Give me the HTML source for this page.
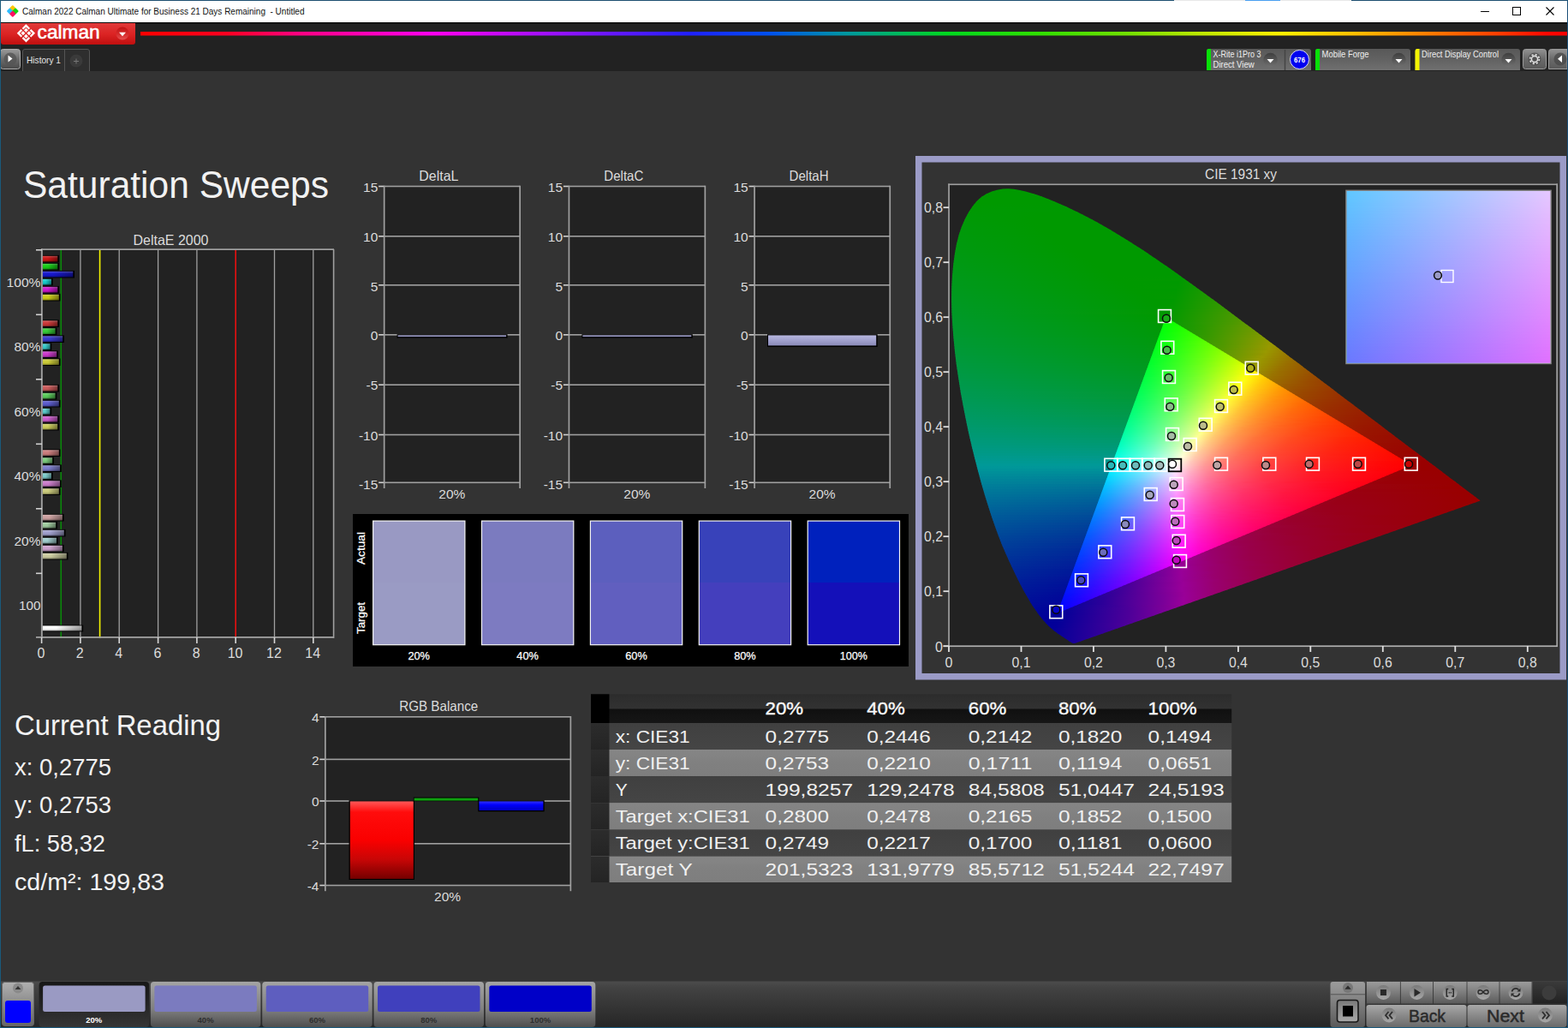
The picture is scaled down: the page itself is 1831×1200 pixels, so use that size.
<!DOCTYPE html>
<html><head><meta charset="utf-8"><title>Calman 2022 - Saturation Sweeps</title>
<style>
html,body{margin:0;padding:0;background:#333;overflow:hidden}
body{width:1831px;height:1200px}
svg{display:block;font-family:"Liberation Sans",sans-serif}
text{white-space:pre}
</style></head><body>
<svg width="1831" height="1200" viewBox="0 0 1831 1200">
<defs>
<linearGradient id="g1" x1="0" y1="0" x2="0" y2="1"><stop offset="0" stop-color="#e03a3a"/><stop offset="0.5" stop-color="#dc2424"/><stop offset="1" stop-color="#c00f0f"/></linearGradient>
<linearGradient id="rdd" x1="0" y1="0" x2="0" y2="1"><stop offset="0" stop-color="#c01414"/><stop offset="0.5" stop-color="#d42828"/><stop offset="1" stop-color="#e65050"/></linearGradient>
<linearGradient id="g2" x1="0" y1="0" x2="1" y2="0"><stop offset="0" stop-color="#ff0000"/><stop offset="0.06" stop-color="#ff0020"/><stop offset="0.11" stop-color="#ff0080"/><stop offset="0.205" stop-color="#ff00f0"/><stop offset="0.285" stop-color="#a010ff"/><stop offset="0.385" stop-color="#2020ff"/><stop offset="0.44" stop-color="#0050f0"/><stop offset="0.495" stop-color="#0098a0"/><stop offset="0.53" stop-color="#00b860"/><stop offset="0.565" stop-color="#00d820"/><stop offset="0.63" stop-color="#30e000"/><stop offset="0.69" stop-color="#70e000"/><stop offset="0.745" stop-color="#c0e800"/><stop offset="0.8" stop-color="#fff000"/><stop offset="0.85" stop-color="#ffc000"/><stop offset="0.9" stop-color="#ff8000"/><stop offset="0.95" stop-color="#ff4000"/><stop offset="0.985" stop-color="#ff0800"/><stop offset="1" stop-color="#ff0000"/></linearGradient>
<linearGradient id="g3" x1="0" y1="0" x2="0" y2="1"><stop offset="0" stop-color="#9a9a9a"/><stop offset="0.5" stop-color="#6c6c6c"/><stop offset="1" stop-color="#4a4a4a"/></linearGradient>
<linearGradient id="g4" x1="0" y1="0" x2="0" y2="1"><stop offset="0" stop-color="#585858"/><stop offset="0.5" stop-color="#626262"/><stop offset="1" stop-color="#707070"/></linearGradient>
<linearGradient id="g5" x1="0" y1="0" x2="0" y2="1"><stop offset="0" stop-color="#585858"/><stop offset="0.5" stop-color="#626262"/><stop offset="1" stop-color="#707070"/></linearGradient>
<linearGradient id="g6" x1="0" y1="0" x2="0" y2="1"><stop offset="0" stop-color="#585858"/><stop offset="0.5" stop-color="#626262"/><stop offset="1" stop-color="#707070"/></linearGradient>
<linearGradient id="ddg" x1="0" y1="0" x2="0" y2="1"><stop offset="0" stop-color="#3e3e3e"/><stop offset="1" stop-color="#707070"/></linearGradient>
<linearGradient id="g7" x1="0" y1="0" x2="0" y2="1"><stop offset="0" stop-color="#929292"/><stop offset="0.5" stop-color="#6a6a6a"/><stop offset="1" stop-color="#5a5a5a"/></linearGradient>
<linearGradient id="barshade" x1="0" y1="0" x2="0" y2="1"><stop offset="0" stop-color="#fff" stop-opacity="0.25"/><stop offset="0.3" stop-color="#fff" stop-opacity="0.05"/><stop offset="0.6" stop-color="#000" stop-opacity="0.0"/><stop offset="1" stop-color="#000" stop-opacity="0.3"/></linearGradient>
<linearGradient id="g8" x1="0" y1="0" x2="1" y2="0"><stop offset="0" stop-color="#cd1616"/><stop offset="0.35" stop-color="#cd1616"/><stop offset="1" stop-color="#7b0d0d"/></linearGradient>
<linearGradient id="g9" x1="0" y1="0" x2="1" y2="0"><stop offset="0" stop-color="#16cd16"/><stop offset="0.35" stop-color="#16cd16"/><stop offset="1" stop-color="#0d7b0d"/></linearGradient>
<linearGradient id="g10" x1="0" y1="0" x2="1" y2="0"><stop offset="0" stop-color="#1616cd"/><stop offset="0.35" stop-color="#1616cd"/><stop offset="1" stop-color="#0d0d7b"/></linearGradient>
<linearGradient id="g11" x1="0" y1="0" x2="1" y2="0"><stop offset="0" stop-color="#16cdcd"/><stop offset="0.35" stop-color="#16cdcd"/><stop offset="1" stop-color="#0d7b7b"/></linearGradient>
<linearGradient id="g12" x1="0" y1="0" x2="1" y2="0"><stop offset="0" stop-color="#cd16cd"/><stop offset="0.35" stop-color="#cd16cd"/><stop offset="1" stop-color="#7b0d7b"/></linearGradient>
<linearGradient id="g13" x1="0" y1="0" x2="1" y2="0"><stop offset="0" stop-color="#cdcd16"/><stop offset="0.35" stop-color="#cdcd16"/><stop offset="1" stop-color="#7b7b0d"/></linearGradient>
<linearGradient id="g14" x1="0" y1="0" x2="1" y2="0"><stop offset="0" stop-color="#cd3838"/><stop offset="0.35" stop-color="#cd3838"/><stop offset="1" stop-color="#7b2121"/></linearGradient>
<linearGradient id="g15" x1="0" y1="0" x2="1" y2="0"><stop offset="0" stop-color="#38cd38"/><stop offset="0.35" stop-color="#38cd38"/><stop offset="1" stop-color="#217b21"/></linearGradient>
<linearGradient id="g16" x1="0" y1="0" x2="1" y2="0"><stop offset="0" stop-color="#3838cd"/><stop offset="0.35" stop-color="#3838cd"/><stop offset="1" stop-color="#21217b"/></linearGradient>
<linearGradient id="g17" x1="0" y1="0" x2="1" y2="0"><stop offset="0" stop-color="#38cdcd"/><stop offset="0.35" stop-color="#38cdcd"/><stop offset="1" stop-color="#217b7b"/></linearGradient>
<linearGradient id="g18" x1="0" y1="0" x2="1" y2="0"><stop offset="0" stop-color="#cd38cd"/><stop offset="0.35" stop-color="#cd38cd"/><stop offset="1" stop-color="#7b217b"/></linearGradient>
<linearGradient id="g19" x1="0" y1="0" x2="1" y2="0"><stop offset="0" stop-color="#cdcd38"/><stop offset="0.35" stop-color="#cdcd38"/><stop offset="1" stop-color="#7b7b21"/></linearGradient>
<linearGradient id="g20" x1="0" y1="0" x2="1" y2="0"><stop offset="0" stop-color="#cd5b5b"/><stop offset="0.35" stop-color="#cd5b5b"/><stop offset="1" stop-color="#7b3636"/></linearGradient>
<linearGradient id="g21" x1="0" y1="0" x2="1" y2="0"><stop offset="0" stop-color="#5bcd5b"/><stop offset="0.35" stop-color="#5bcd5b"/><stop offset="1" stop-color="#367b36"/></linearGradient>
<linearGradient id="g22" x1="0" y1="0" x2="1" y2="0"><stop offset="0" stop-color="#5b5bcd"/><stop offset="0.35" stop-color="#5b5bcd"/><stop offset="1" stop-color="#36367b"/></linearGradient>
<linearGradient id="g23" x1="0" y1="0" x2="1" y2="0"><stop offset="0" stop-color="#5bcdcd"/><stop offset="0.35" stop-color="#5bcdcd"/><stop offset="1" stop-color="#367b7b"/></linearGradient>
<linearGradient id="g24" x1="0" y1="0" x2="1" y2="0"><stop offset="0" stop-color="#cd5bcd"/><stop offset="0.35" stop-color="#cd5bcd"/><stop offset="1" stop-color="#7b367b"/></linearGradient>
<linearGradient id="g25" x1="0" y1="0" x2="1" y2="0"><stop offset="0" stop-color="#cdcd5b"/><stop offset="0.35" stop-color="#cdcd5b"/><stop offset="1" stop-color="#7b7b36"/></linearGradient>
<linearGradient id="g26" x1="0" y1="0" x2="1" y2="0"><stop offset="0" stop-color="#cd7d7d"/><stop offset="0.35" stop-color="#cd7d7d"/><stop offset="1" stop-color="#7b4b4b"/></linearGradient>
<linearGradient id="g27" x1="0" y1="0" x2="1" y2="0"><stop offset="0" stop-color="#7dcd7d"/><stop offset="0.35" stop-color="#7dcd7d"/><stop offset="1" stop-color="#4b7b4b"/></linearGradient>
<linearGradient id="g28" x1="0" y1="0" x2="1" y2="0"><stop offset="0" stop-color="#7d7dcd"/><stop offset="0.35" stop-color="#7d7dcd"/><stop offset="1" stop-color="#4b4b7b"/></linearGradient>
<linearGradient id="g29" x1="0" y1="0" x2="1" y2="0"><stop offset="0" stop-color="#7dcdcd"/><stop offset="0.35" stop-color="#7dcdcd"/><stop offset="1" stop-color="#4b7b7b"/></linearGradient>
<linearGradient id="g30" x1="0" y1="0" x2="1" y2="0"><stop offset="0" stop-color="#cd7dcd"/><stop offset="0.35" stop-color="#cd7dcd"/><stop offset="1" stop-color="#7b4b7b"/></linearGradient>
<linearGradient id="g31" x1="0" y1="0" x2="1" y2="0"><stop offset="0" stop-color="#cdcd7d"/><stop offset="0.35" stop-color="#cdcd7d"/><stop offset="1" stop-color="#7b7b4b"/></linearGradient>
<linearGradient id="g32" x1="0" y1="0" x2="1" y2="0"><stop offset="0" stop-color="#cda0a0"/><stop offset="0.35" stop-color="#cda0a0"/><stop offset="1" stop-color="#7b6060"/></linearGradient>
<linearGradient id="g33" x1="0" y1="0" x2="1" y2="0"><stop offset="0" stop-color="#a0cda0"/><stop offset="0.35" stop-color="#a0cda0"/><stop offset="1" stop-color="#607b60"/></linearGradient>
<linearGradient id="g34" x1="0" y1="0" x2="1" y2="0"><stop offset="0" stop-color="#a0a0cd"/><stop offset="0.35" stop-color="#a0a0cd"/><stop offset="1" stop-color="#60607b"/></linearGradient>
<linearGradient id="g35" x1="0" y1="0" x2="1" y2="0"><stop offset="0" stop-color="#a0cdcd"/><stop offset="0.35" stop-color="#a0cdcd"/><stop offset="1" stop-color="#607b7b"/></linearGradient>
<linearGradient id="g36" x1="0" y1="0" x2="1" y2="0"><stop offset="0" stop-color="#cda0cd"/><stop offset="0.35" stop-color="#cda0cd"/><stop offset="1" stop-color="#7b607b"/></linearGradient>
<linearGradient id="g37" x1="0" y1="0" x2="1" y2="0"><stop offset="0" stop-color="#cdcda0"/><stop offset="0.35" stop-color="#cdcda0"/><stop offset="1" stop-color="#7b7b60"/></linearGradient>
<linearGradient id="g38" x1="0" y1="0" x2="1" y2="0"><stop offset="0" stop-color="#ffffff"/><stop offset="0.35" stop-color="#ffffff"/><stop offset="1" stop-color="#9a9a9a"/></linearGradient>
<linearGradient id="g39" x1="0" y1="0" x2="0" y2="1"><stop offset="0" stop-color="#b8b8e0"/><stop offset="0.5" stop-color="#a0a0cc"/><stop offset="1" stop-color="#8a8ab8"/></linearGradient>
<linearGradient id="g40" x1="0" y1="0" x2="0" y2="1"><stop offset="0" stop-color="#b8b8e0"/><stop offset="0.5" stop-color="#a0a0cc"/><stop offset="1" stop-color="#8a8ab8"/></linearGradient>
<linearGradient id="g41" x1="0" y1="0" x2="0" y2="1"><stop offset="0" stop-color="#b8b8e0"/><stop offset="0.5" stop-color="#a0a0cc"/><stop offset="1" stop-color="#8a8ab8"/></linearGradient>
<clipPath id="cpl"><polygon points="1255.1,751.0 1255.1,751.0 1255.0,751.0 1255.0,751.0 1255.0,751.0 1255.0,751.0 1254.9,751.0 1254.9,751.0 1254.9,751.0 1254.8,751.1 1254.8,751.1 1254.8,751.1 1254.7,751.1 1254.7,751.1 1254.7,751.1 1254.6,751.1 1254.6,751.1 1254.5,751.1 1254.5,751.1 1254.4,751.1 1254.4,751.1 1254.3,751.1 1254.3,751.1 1254.2,751.1 1254.2,751.1 1254.1,751.1 1254.1,751.1 1254.0,751.1 1253.9,751.1 1253.9,751.1 1253.8,751.1 1253.7,751.1 1253.6,751.1 1253.6,751.1 1253.5,751.1 1253.4,751.1 1253.3,751.1 1253.2,751.1 1253.1,751.0 1252.9,751.0 1252.8,750.9 1252.6,750.9 1252.4,750.8 1252.3,750.7 1252.1,750.6 1251.9,750.5 1251.6,750.4 1251.4,750.2 1251.2,750.1 1250.9,750.0 1250.7,749.8 1250.4,749.6 1250.1,749.4 1249.7,749.2 1249.4,748.9 1249.0,748.7 1248.6,748.4 1248.2,748.2 1247.8,747.9 1247.3,747.5 1246.9,747.2 1246.4,746.9 1245.9,746.5 1245.3,746.2 1244.7,745.8 1244.1,745.4 1243.4,744.9 1242.7,744.4 1241.9,744.0 1241.1,743.4 1240.3,742.9 1239.4,742.3 1238.5,741.7 1237.6,741.1 1236.6,740.4 1235.5,739.7 1234.5,738.9 1233.3,738.1 1232.1,737.2 1230.9,736.2 1229.6,735.2 1228.3,734.1 1227.0,733.0 1225.6,731.7 1224.1,730.3 1222.5,728.7 1220.7,726.8 1218.9,724.8 1217.0,722.5 1215.0,720.0 1212.8,717.2 1210.6,714.1 1208.3,710.8 1205.8,707.2 1203.3,703.2 1200.6,698.6 1197.8,693.7 1194.8,688.4 1191.7,682.6 1188.5,676.2 1185.1,669.3 1181.5,661.7 1177.8,653.7 1173.9,645.1 1169.9,635.8 1166.0,625.8 1162.1,615.0 1158.1,603.5 1154.2,591.4 1150.2,578.7 1146.3,565.4 1142.5,551.4 1138.6,536.6 1134.8,521.3 1131.2,505.7 1127.9,490.1 1124.8,474.2 1121.8,458.0 1119.2,441.6 1116.8,425.4 1114.9,409.6 1113.4,394.1 1112.2,378.8 1111.4,363.7 1111.1,349.1 1111.3,335.1 1112.0,321.7 1113.2,308.7 1114.9,296.3 1117.0,284.7 1119.7,274.1 1123.0,264.4 1126.9,255.5 1131.2,247.5 1135.9,240.4 1140.9,234.5 1146.2,229.8 1152.0,226.2 1158.1,223.6 1164.4,221.7 1170.8,220.6 1177.3,220.2 1183.9,220.8 1190.8,222.0 1197.6,223.6 1204.5,225.4 1211.3,227.5 1218.2,229.9 1225.1,232.7 1231.9,235.5 1238.7,238.4 1245.3,241.3 1251.8,244.4 1258.2,247.5 1264.6,250.7 1270.9,254.0 1277.2,257.3 1283.5,260.7 1289.6,264.2 1295.8,267.8 1301.9,271.4 1308.1,275.2 1314.2,278.9 1320.3,282.8 1326.4,286.7 1332.5,290.6 1338.6,294.6 1344.6,298.7 1350.7,302.8 1356.7,307.0 1362.8,311.1 1368.8,315.3 1374.8,319.6 1380.9,323.9 1386.9,328.2 1392.9,332.5 1399.0,336.9 1405.0,341.2 1411.1,345.7 1417.1,350.1 1423.2,354.5 1429.2,359.0 1435.2,363.4 1441.2,367.9 1447.2,372.4 1453.2,376.9 1459.2,381.3 1465.2,385.8 1471.2,390.3 1477.2,394.7 1483.1,399.2 1489.0,403.6 1494.9,408.1 1500.8,412.5 1506.6,416.9 1512.4,421.3 1518.2,425.6 1523.9,430.0 1529.6,434.3 1535.3,438.5 1540.9,442.8 1546.5,447.0 1552.0,451.1 1557.5,455.3 1562.9,459.4 1568.2,463.4 1573.5,467.4 1578.7,471.3 1583.8,475.2 1588.9,479.0 1593.9,482.7 1598.7,486.4 1603.5,490.0 1608.2,493.6 1612.8,497.1 1617.3,500.4 1621.6,503.7 1625.7,506.8 1629.8,509.9 1633.8,512.9 1637.6,515.8 1641.4,518.7 1645.1,521.4 1648.7,524.2 1652.2,526.8 1655.5,529.3 1658.7,531.7 1661.8,534.0 1664.8,536.2 1667.7,538.4 1670.4,540.4 1673.0,542.4 1675.6,544.3 1678.0,546.2 1680.3,547.9 1682.5,549.6 1684.6,551.2 1686.6,552.7 1688.5,554.2 1690.3,555.6 1692.1,556.9 1693.8,558.2 1695.4,559.4 1696.9,560.5 1698.4,561.6 1699.8,562.6 1701.1,563.7 1702.4,564.6 1703.6,565.6 1704.8,566.5 1706.0,567.3 1707.1,568.2 1708.1,569.0 1709.2,569.7 1710.2,570.5 1711.1,571.2 1712.0,571.9 1712.9,572.6 1713.8,573.2 1714.6,573.8 1715.3,574.4 1716.1,575.0 1716.8,575.5 1717.5,576.0 1718.1,576.5 1718.7,576.9 1719.3,577.3 1719.8,577.8 1720.3,578.1 1720.8,578.5 1721.3,578.8 1721.7,579.2 1722.1,579.5 1722.5,579.8 1722.8,580.0 1723.2,580.3 1723.5,580.6 1723.8,580.8 1724.1,581.0 1724.4,581.2 1724.6,581.4 1724.9,581.6 1725.0,581.7 1725.2,581.9 1725.4,582.0 1725.6,582.1 1725.7,582.2 1725.9,582.3 1726.0,582.5 1726.2,582.6 1726.3,582.7 1726.4,582.8 1726.6,582.9 1726.7,583.0 1726.8,583.0 1726.9,583.1 1727.0,583.2 1727.2,583.3 1727.3,583.4 1727.4,583.5 1727.5,583.6 1727.6,583.7 1727.7,583.7 1727.8,583.8 1727.9,583.9 1728.0,584.0 1728.1,584.0 1728.2,584.1 1728.2,584.1 1728.3,584.2 1728.3,584.2 1728.4,584.3 1728.4,584.3 1728.5,584.3 1728.5,584.3 1728.5,584.3 1728.5,584.4 1728.6,584.4 1728.6,584.4 1728.6,584.4 1728.6,584.4"/></clipPath>
<linearGradient id="c42" gradientUnits="userSpaceOnUse" x1="1159" x2="1196" y1="0" y2="0"><stop offset="0" stop-color="#009900"/><stop offset="1" stop-color="#009900"/></linearGradient>
<linearGradient id="c43" gradientUnits="userSpaceOnUse" x1="1151" x2="1208" y1="0" y2="0"><stop offset="0" stop-color="#009900"/><stop offset="1" stop-color="#009900"/></linearGradient>
<linearGradient id="c44" gradientUnits="userSpaceOnUse" x1="1146" x2="1217" y1="0" y2="0"><stop offset="0" stop-color="#009900"/><stop offset="1" stop-color="#009900"/></linearGradient>
<linearGradient id="c45" gradientUnits="userSpaceOnUse" x1="1142" x2="1225" y1="0" y2="0"><stop offset="0" stop-color="#009900"/><stop offset="1" stop-color="#009900"/></linearGradient>
<linearGradient id="c46" gradientUnits="userSpaceOnUse" x1="1139" x2="1232" y1="0" y2="0"><stop offset="0" stop-color="#009900"/><stop offset="1" stop-color="#009900"/></linearGradient>
<linearGradient id="c47" gradientUnits="userSpaceOnUse" x1="1136" x2="1239" y1="0" y2="0"><stop offset="0" stop-color="#009900"/><stop offset="1" stop-color="#009900"/></linearGradient>
<linearGradient id="c48" gradientUnits="userSpaceOnUse" x1="1134" x2="1246" y1="0" y2="0"><stop offset="0" stop-color="#009901"/><stop offset="1" stop-color="#009900"/></linearGradient>
<linearGradient id="c49" gradientUnits="userSpaceOnUse" x1="1132" x2="1252" y1="0" y2="0"><stop offset="0" stop-color="#009902"/><stop offset="1" stop-color="#009900"/></linearGradient>
<linearGradient id="c50" gradientUnits="userSpaceOnUse" x1="1130" x2="1259" y1="0" y2="0"><stop offset="0" stop-color="#009903"/><stop offset="1" stop-color="#009900"/></linearGradient>
<linearGradient id="c51" gradientUnits="userSpaceOnUse" x1="1128" x2="1265" y1="0" y2="0"><stop offset="0" stop-color="#009904"/><stop offset="0.6286" stop-color="#009900"/><stop offset="1" stop-color="#009900"/></linearGradient>
<linearGradient id="c52" gradientUnits="userSpaceOnUse" x1="1127" x2="1271" y1="0" y2="0"><stop offset="0" stop-color="#009905"/><stop offset="0.5833" stop-color="#009900"/><stop offset="1" stop-color="#009900"/></linearGradient>
<linearGradient id="c53" gradientUnits="userSpaceOnUse" x1="1125" x2="1276" y1="0" y2="0"><stop offset="0" stop-color="#009906"/><stop offset="0.5263" stop-color="#009900"/><stop offset="1" stop-color="#009900"/></linearGradient>
<linearGradient id="c54" gradientUnits="userSpaceOnUse" x1="1124" x2="1282" y1="0" y2="0"><stop offset="0" stop-color="#009906"/><stop offset="0.525" stop-color="#009900"/><stop offset="1" stop-color="#009900"/></linearGradient>
<linearGradient id="c55" gradientUnits="userSpaceOnUse" x1="1123" x2="1287" y1="0" y2="0"><stop offset="0" stop-color="#009907"/><stop offset="0.5122" stop-color="#009900"/><stop offset="1" stop-color="#009900"/></linearGradient>
<linearGradient id="c56" gradientUnits="userSpaceOnUse" x1="1121" x2="1292" y1="0" y2="0"><stop offset="0" stop-color="#009908"/><stop offset="0.5349" stop-color="#009900"/><stop offset="1" stop-color="#009900"/></linearGradient>
<linearGradient id="c57" gradientUnits="userSpaceOnUse" x1="1120" x2="1298" y1="0" y2="0"><stop offset="0" stop-color="#009909"/><stop offset="0.5333" stop-color="#009900"/><stop offset="1" stop-color="#009900"/></linearGradient>
<linearGradient id="c58" gradientUnits="userSpaceOnUse" x1="1119" x2="1303" y1="0" y2="0"><stop offset="0" stop-color="#00990a"/><stop offset="0.5435" stop-color="#009900"/><stop offset="1" stop-color="#009900"/></linearGradient>
<linearGradient id="c59" gradientUnits="userSpaceOnUse" x1="1118" x2="1308" y1="0" y2="0"><stop offset="0" stop-color="#00990a"/><stop offset="0.5625" stop-color="#009900"/><stop offset="1" stop-color="#009900"/></linearGradient>
<linearGradient id="c60" gradientUnits="userSpaceOnUse" x1="1118" x2="1313" y1="0" y2="0"><stop offset="0" stop-color="#00990b"/><stop offset="0.5714" stop-color="#009900"/><stop offset="1" stop-color="#009900"/></linearGradient>
<linearGradient id="c61" gradientUnits="userSpaceOnUse" x1="1117" x2="1317" y1="0" y2="0"><stop offset="0" stop-color="#00990c"/><stop offset="0.58" stop-color="#009900"/><stop offset="1" stop-color="#009900"/></linearGradient>
<linearGradient id="c62" gradientUnits="userSpaceOnUse" x1="1116" x2="1322" y1="0" y2="0"><stop offset="0" stop-color="#00990d"/><stop offset="0.5962" stop-color="#009900"/><stop offset="1" stop-color="#009900"/></linearGradient>
<linearGradient id="c63" gradientUnits="userSpaceOnUse" x1="1115" x2="1327" y1="0" y2="0"><stop offset="0" stop-color="#00990e"/><stop offset="0.5849" stop-color="#009900"/><stop offset="1" stop-color="#009900"/></linearGradient>
<linearGradient id="c64" gradientUnits="userSpaceOnUse" x1="1115" x2="1331" y1="0" y2="0"><stop offset="0" stop-color="#00990e"/><stop offset="0.6111" stop-color="#009900"/><stop offset="1" stop-color="#009900"/></linearGradient>
<linearGradient id="c65" gradientUnits="userSpaceOnUse" x1="1114" x2="1336" y1="0" y2="0"><stop offset="0" stop-color="#00990f"/><stop offset="0.6071" stop-color="#009900"/><stop offset="1" stop-color="#009900"/></linearGradient>
<linearGradient id="c66" gradientUnits="userSpaceOnUse" x1="1114" x2="1341" y1="0" y2="0"><stop offset="0" stop-color="#009910"/><stop offset="0.614" stop-color="#009900"/><stop offset="1" stop-color="#009900"/></linearGradient>
<linearGradient id="c67" gradientUnits="userSpaceOnUse" x1="1113" x2="1345" y1="0" y2="0"><stop offset="0" stop-color="#009911"/><stop offset="0.6379" stop-color="#009900"/><stop offset="1" stop-color="#009900"/></linearGradient>
<linearGradient id="c68" gradientUnits="userSpaceOnUse" x1="1113" x2="1350" y1="0" y2="0"><stop offset="0" stop-color="#009912"/><stop offset="0.6333" stop-color="#009900"/><stop offset="1" stop-color="#009900"/></linearGradient>
<linearGradient id="c69" gradientUnits="userSpaceOnUse" x1="1112" x2="1354" y1="0" y2="0"><stop offset="0" stop-color="#009913"/><stop offset="0.6557" stop-color="#009900"/><stop offset="1" stop-color="#009900"/></linearGradient>
<linearGradient id="c70" gradientUnits="userSpaceOnUse" x1="1112" x2="1358" y1="0" y2="0"><stop offset="0" stop-color="#009913"/><stop offset="0.6613" stop-color="#009900"/><stop offset="1" stop-color="#009900"/></linearGradient>
<linearGradient id="c71" gradientUnits="userSpaceOnUse" x1="1112" x2="1363" y1="0" y2="0"><stop offset="0" stop-color="#009914"/><stop offset="0.6667" stop-color="#009900"/><stop offset="1" stop-color="#009900"/></linearGradient>
<linearGradient id="c72" gradientUnits="userSpaceOnUse" x1="1111" x2="1367" y1="0" y2="0"><stop offset="0" stop-color="#009915"/><stop offset="0.6719" stop-color="#009900"/><stop offset="1" stop-color="#009900"/></linearGradient>
<linearGradient id="c73" gradientUnits="userSpaceOnUse" x1="1111" x2="1371" y1="0" y2="0"><stop offset="0" stop-color="#009916"/><stop offset="0.6769" stop-color="#009900"/><stop offset="1" stop-color="#009900"/></linearGradient>
<linearGradient id="c74" gradientUnits="userSpaceOnUse" x1="1111" x2="1375" y1="0" y2="0"><stop offset="0" stop-color="#009917"/><stop offset="0.6818" stop-color="#009900"/><stop offset="1" stop-color="#009900"/></linearGradient>
<linearGradient id="c75" gradientUnits="userSpaceOnUse" x1="1110" x2="1380" y1="0" y2="0"><stop offset="0" stop-color="#009918"/><stop offset="0.6912" stop-color="#009900"/><stop offset="1" stop-color="#009900"/></linearGradient>
<linearGradient id="c76" gradientUnits="userSpaceOnUse" x1="1110" x2="1384" y1="0" y2="0"><stop offset="0" stop-color="#009919"/><stop offset="0.6957" stop-color="#009900"/><stop offset="0.9855" stop-color="#019900"/><stop offset="1" stop-color="#049900"/></linearGradient>
<linearGradient id="c77" gradientUnits="userSpaceOnUse" x1="1110" x2="1388" y1="0" y2="0"><stop offset="0" stop-color="#00991a"/><stop offset="0.7" stop-color="#009900"/><stop offset="0.9714" stop-color="#029900"/><stop offset="1" stop-color="#089900"/></linearGradient>
<linearGradient id="c78" gradientUnits="userSpaceOnUse" x1="1110" x2="1392" y1="0" y2="0"><stop offset="0" stop-color="#00991b"/><stop offset="0.7183" stop-color="#009900"/><stop offset="0.9437" stop-color="#009900"/><stop offset="1" stop-color="#0c9900"/></linearGradient>
<linearGradient id="c79" gradientUnits="userSpaceOnUse" x1="1110" x2="1396" y1="0" y2="0"><stop offset="0" stop-color="#00991b"/><stop offset="0.7222" stop-color="#009900"/><stop offset="0.9306" stop-color="#019900"/><stop offset="1" stop-color="#109900"/></linearGradient>
<linearGradient id="c80" gradientUnits="userSpaceOnUse" x1="1110" x2="1401" y1="0" y2="0"><stop offset="0" stop-color="#00991c"/><stop offset="0.726" stop-color="#009900"/><stop offset="0.9178" stop-color="#029900"/><stop offset="1" stop-color="#149900"/></linearGradient>
<linearGradient id="c81" gradientUnits="userSpaceOnUse" x1="1110" x2="1405" y1="0" y2="0"><stop offset="0" stop-color="#00991d"/><stop offset="0.7297" stop-color="#009900"/><stop offset="0.8919" stop-color="#009900"/><stop offset="1" stop-color="#199900"/></linearGradient>
<linearGradient id="c82" gradientUnits="userSpaceOnUse" x1="1110" x2="1409" y1="0" y2="0"><stop offset="0" stop-color="#00991e"/><stop offset="0.7333" stop-color="#009900"/><stop offset="0.88" stop-color="#019900"/><stop offset="1" stop-color="#1d9900"/></linearGradient>
<linearGradient id="c83" gradientUnits="userSpaceOnUse" x1="1110" x2="1413" y1="0" y2="0"><stop offset="0" stop-color="#00991f"/><stop offset="0.75" stop-color="#009900"/><stop offset="0.8684" stop-color="#029900"/><stop offset="1" stop-color="#229900"/></linearGradient>
<linearGradient id="c84" gradientUnits="userSpaceOnUse" x1="1110" x2="1417" y1="0" y2="0"><stop offset="0" stop-color="#009920"/><stop offset="0.7532" stop-color="#009900"/><stop offset="0.8571" stop-color="#039900"/><stop offset="1" stop-color="#269900"/></linearGradient>
<linearGradient id="c85" gradientUnits="userSpaceOnUse" x1="1110" x2="1421" y1="0" y2="0"><stop offset="0" stop-color="#009921"/><stop offset="0.7564" stop-color="#009900"/><stop offset="0.8333" stop-color="#009900"/><stop offset="1" stop-color="#2b9900"/></linearGradient>
<linearGradient id="c86" gradientUnits="userSpaceOnUse" x1="1110" x2="1425" y1="0" y2="0"><stop offset="0" stop-color="#009922"/><stop offset="0.7595" stop-color="#009900"/><stop offset="0.8228" stop-color="#019900"/><stop offset="1" stop-color="#309900"/></linearGradient>
<linearGradient id="c87" gradientUnits="userSpaceOnUse" x1="1110" x2="1429" y1="0" y2="0"><stop offset="0" stop-color="#009923"/><stop offset="0.7625" stop-color="#009900"/><stop offset="0.8125" stop-color="#029900"/><stop offset="1" stop-color="#359900"/></linearGradient>
<linearGradient id="c88" gradientUnits="userSpaceOnUse" x1="1110" x2="1433" y1="0" y2="0"><stop offset="0" stop-color="#009924"/><stop offset="0.7778" stop-color="#009900"/><stop offset="0.8272" stop-color="#099900"/><stop offset="1" stop-color="#3a9900"/></linearGradient>
<linearGradient id="c89" gradientUnits="userSpaceOnUse" x1="1110" x2="1437" y1="0" y2="0"><stop offset="0" stop-color="#009925"/><stop offset="0.7805" stop-color="#019900"/><stop offset="1" stop-color="#409900"/></linearGradient>
<linearGradient id="c90" gradientUnits="userSpaceOnUse" x1="1110" x2="1441" y1="0" y2="0"><stop offset="0" stop-color="#009926"/><stop offset="0.7711" stop-color="#029900"/><stop offset="1" stop-color="#469900"/></linearGradient>
<linearGradient id="c91" gradientUnits="userSpaceOnUse" x1="1110" x2="1446" y1="0" y2="0"><stop offset="0" stop-color="#009927"/><stop offset="0.6905" stop-color="#009903"/><stop offset="0.75" stop-color="#009900"/><stop offset="1" stop-color="#4d9900"/></linearGradient>
<linearGradient id="c92" gradientUnits="userSpaceOnUse" x1="1110" x2="1450" y1="0" y2="0"><stop offset="0" stop-color="#009928"/><stop offset="0.6706" stop-color="#009905"/><stop offset="0.7412" stop-color="#019900"/><stop offset="0.9882" stop-color="#4e9900"/><stop offset="1" stop-color="#539900"/></linearGradient>
<linearGradient id="c93" gradientUnits="userSpaceOnUse" x1="1110" x2="1454" y1="0" y2="0"><stop offset="0" stop-color="#00992a"/><stop offset="0.6628" stop-color="#009906"/><stop offset="0.7326" stop-color="#029901"/><stop offset="0.9651" stop-color="#4c9900"/><stop offset="1" stop-color="#599900"/></linearGradient>
<linearGradient id="c94" gradientUnits="userSpaceOnUse" x1="1111" x2="1458" y1="0" y2="0"><stop offset="0" stop-color="#00992b"/><stop offset="0.6552" stop-color="#009908"/><stop offset="0.7241" stop-color="#039903"/><stop offset="0.954" stop-color="#4e9900"/><stop offset="1" stop-color="#609900"/></linearGradient>
<linearGradient id="c95" gradientUnits="userSpaceOnUse" x1="1111" x2="1462" y1="0" y2="0"><stop offset="0" stop-color="#00992c"/><stop offset="0.6477" stop-color="#009909"/><stop offset="0.7045" stop-color="#019905"/><stop offset="0.8295" stop-color="#289900"/><stop offset="1" stop-color="#679900"/></linearGradient>
<linearGradient id="c96" gradientUnits="userSpaceOnUse" x1="1111" x2="1466" y1="0" y2="0"><stop offset="0" stop-color="#00992d"/><stop offset="0.6404" stop-color="#00990a"/><stop offset="0.6966" stop-color="#019906"/><stop offset="0.8202" stop-color="#299900"/><stop offset="1" stop-color="#6e9900"/></linearGradient>
<linearGradient id="c97" gradientUnits="userSpaceOnUse" x1="1111" x2="1470" y1="0" y2="0"><stop offset="0" stop-color="#00992e"/><stop offset="0.6222" stop-color="#00990c"/><stop offset="0.6889" stop-color="#029907"/><stop offset="0.8222" stop-color="#2f9900"/><stop offset="1" stop-color="#759900"/></linearGradient>
<linearGradient id="c98" gradientUnits="userSpaceOnUse" x1="1111" x2="1474" y1="0" y2="0"><stop offset="0" stop-color="#00992f"/><stop offset="0.6154" stop-color="#00990d"/><stop offset="0.6703" stop-color="#009909"/><stop offset="0.8132" stop-color="#309900"/><stop offset="1" stop-color="#7d9900"/></linearGradient>
<linearGradient id="c99" gradientUnits="userSpaceOnUse" x1="1112" x2="1478" y1="0" y2="0"><stop offset="0" stop-color="#009930"/><stop offset="0.6087" stop-color="#00990e"/><stop offset="0.663" stop-color="#01990a"/><stop offset="0.8152" stop-color="#369900"/><stop offset="1" stop-color="#859900"/></linearGradient>
<linearGradient id="c100" gradientUnits="userSpaceOnUse" x1="1112" x2="1482" y1="0" y2="0"><stop offset="0" stop-color="#009932"/><stop offset="0.6022" stop-color="#009910"/><stop offset="0.6559" stop-color="#02990b"/><stop offset="0.8172" stop-color="#3c9900"/><stop offset="1" stop-color="#8d9900"/></linearGradient>
<linearGradient id="c101" gradientUnits="userSpaceOnUse" x1="1112" x2="1486" y1="0" y2="0"><stop offset="0" stop-color="#009933"/><stop offset="0.5957" stop-color="#009911"/><stop offset="0.6383" stop-color="#00990e"/><stop offset="0.8298" stop-color="#479900"/><stop offset="1" stop-color="#969900"/></linearGradient>
<linearGradient id="c102" gradientUnits="userSpaceOnUse" x1="1112" x2="1490" y1="0" y2="0"><stop offset="0" stop-color="#009934"/><stop offset="0.5895" stop-color="#009912"/><stop offset="0.6316" stop-color="#01990f"/><stop offset="0.8316" stop-color="#4d9900"/><stop offset="0.9895" stop-color="#999800"/><stop offset="1" stop-color="#999300"/></linearGradient>
<linearGradient id="c103" gradientUnits="userSpaceOnUse" x1="1113" x2="1494" y1="0" y2="0"><stop offset="0" stop-color="#009935"/><stop offset="0.5833" stop-color="#009914"/><stop offset="0.625" stop-color="#029910"/><stop offset="0.8229" stop-color="#4f9900"/><stop offset="0.9688" stop-color="#979900"/><stop offset="1" stop-color="#998b00"/></linearGradient>
<linearGradient id="c104" gradientUnits="userSpaceOnUse" x1="1113" x2="1498" y1="0" y2="0"><stop offset="0" stop-color="#009937"/><stop offset="0.567" stop-color="#009916"/><stop offset="0.6186" stop-color="#039912"/><stop offset="0.8041" stop-color="#4d9900"/><stop offset="0.9588" stop-color="#999700"/><stop offset="1" stop-color="#998300"/></linearGradient>
<linearGradient id="c105" gradientUnits="userSpaceOnUse" x1="1113" x2="1502" y1="0" y2="0"><stop offset="0" stop-color="#009938"/><stop offset="0.5612" stop-color="#009917"/><stop offset="0.602" stop-color="#019914"/><stop offset="0.7857" stop-color="#4a9903"/><stop offset="0.9388" stop-color="#999900"/><stop offset="1" stop-color="#997c00"/></linearGradient>
<linearGradient id="c106" gradientUnits="userSpaceOnUse" x1="1114" x2="1506" y1="0" y2="0"><stop offset="0" stop-color="#009939"/><stop offset="0.5612" stop-color="#009918"/><stop offset="0.5918" stop-color="#009916"/><stop offset="0.7755" stop-color="#4c9904"/><stop offset="0.8673" stop-color="#7a9900"/><stop offset="0.9286" stop-color="#999600"/><stop offset="1" stop-color="#997500"/></linearGradient>
<linearGradient id="c107" gradientUnits="userSpaceOnUse" x1="1114" x2="1510" y1="0" y2="0"><stop offset="0" stop-color="#00993b"/><stop offset="0.5455" stop-color="#00991a"/><stop offset="0.5859" stop-color="#019917"/><stop offset="0.7677" stop-color="#4e9906"/><stop offset="0.8586" stop-color="#7d9900"/><stop offset="0.9091" stop-color="#999800"/><stop offset="0.9899" stop-color="#997200"/><stop offset="1" stop-color="#996e00"/></linearGradient>
<linearGradient id="c108" gradientUnits="userSpaceOnUse" x1="1114" x2="1514" y1="0" y2="0"><stop offset="0" stop-color="#00993c"/><stop offset="0.54" stop-color="#00991c"/><stop offset="0.58" stop-color="#039919"/><stop offset="0.76" stop-color="#509907"/><stop offset="0.85" stop-color="#809900"/><stop offset="0.89" stop-color="#979900"/><stop offset="0.99" stop-color="#996c00"/><stop offset="1" stop-color="#996800"/></linearGradient>
<linearGradient id="c109" gradientUnits="userSpaceOnUse" x1="1115" x2="1518" y1="0" y2="0"><stop offset="0" stop-color="#00993d"/><stop offset="0.5347" stop-color="#00991d"/><stop offset="0.5644" stop-color="#00991b"/><stop offset="0.7426" stop-color="#4e990a"/><stop offset="0.8515" stop-color="#899900"/><stop offset="0.8812" stop-color="#999700"/><stop offset="0.9604" stop-color="#997100"/><stop offset="1" stop-color="#996300"/></linearGradient>
<linearGradient id="c110" gradientUnits="userSpaceOnUse" x1="1115" x2="1522" y1="0" y2="0"><stop offset="0" stop-color="#00993f"/><stop offset="0.5294" stop-color="#00991f"/><stop offset="0.5588" stop-color="#01991d"/><stop offset="0.7255" stop-color="#4b990d"/><stop offset="0.8529" stop-color="#929900"/><stop offset="0.8627" stop-color="#989900"/><stop offset="0.951" stop-color="#996e00"/><stop offset="1" stop-color="#995d00"/></linearGradient>
<linearGradient id="c111" gradientUnits="userSpaceOnUse" x1="1116" x2="1525" y1="0" y2="0"><stop offset="0" stop-color="#009940"/><stop offset="0.5243" stop-color="#009921"/><stop offset="0.5534" stop-color="#02991e"/><stop offset="0.7184" stop-color="#4d990e"/><stop offset="0.8544" stop-color="#999700"/><stop offset="0.932" stop-color="#997000"/><stop offset="1" stop-color="#995900"/></linearGradient>
<linearGradient id="c112" gradientUnits="userSpaceOnUse" x1="1116" x2="1529" y1="0" y2="0"><stop offset="0" stop-color="#009942"/><stop offset="0.5192" stop-color="#009922"/><stop offset="0.5481" stop-color="#039920"/><stop offset="0.7115" stop-color="#4f9910"/><stop offset="0.8365" stop-color="#999901"/><stop offset="0.9135" stop-color="#997100"/><stop offset="1" stop-color="#995400"/></linearGradient>
<linearGradient id="c113" gradientUnits="userSpaceOnUse" x1="1116" x2="1533" y1="0" y2="0"><stop offset="0" stop-color="#009943"/><stop offset="0.5143" stop-color="#009924"/><stop offset="0.5429" stop-color="#059922"/><stop offset="0.7048" stop-color="#529912"/><stop offset="0.819" stop-color="#969904"/><stop offset="0.9048" stop-color="#996e00"/><stop offset="1" stop-color="#995000"/></linearGradient>
<linearGradient id="c114" gradientUnits="userSpaceOnUse" x1="1117" x2="1537" y1="0" y2="0"><stop offset="0" stop-color="#009945"/><stop offset="0.5048" stop-color="#009926"/><stop offset="0.5238" stop-color="#009925"/><stop offset="0.6857" stop-color="#4e9915"/><stop offset="0.8095" stop-color="#999906"/><stop offset="0.8762" stop-color="#997400"/><stop offset="0.981" stop-color="#995000"/><stop offset="1" stop-color="#994b00"/></linearGradient>
<linearGradient id="c115" gradientUnits="userSpaceOnUse" x1="1117" x2="1541" y1="0" y2="0"><stop offset="0" stop-color="#009946"/><stop offset="0.5" stop-color="#009928"/><stop offset="0.5283" stop-color="#059926"/><stop offset="0.6792" stop-color="#509917"/><stop offset="0.7925" stop-color="#979909"/><stop offset="0.8679" stop-color="#997100"/><stop offset="0.9717" stop-color="#994e00"/><stop offset="1" stop-color="#994700"/></linearGradient>
<linearGradient id="c116" gradientUnits="userSpaceOnUse" x1="1118" x2="1545" y1="0" y2="0"><stop offset="0" stop-color="#009948"/><stop offset="0.4953" stop-color="#00992a"/><stop offset="0.5234" stop-color="#079927"/><stop offset="0.6729" stop-color="#539919"/><stop offset="0.785" stop-color="#99970a"/><stop offset="0.8598" stop-color="#996e00"/><stop offset="0.9626" stop-color="#994c00"/><stop offset="1" stop-color="#994300"/></linearGradient>
<linearGradient id="c117" gradientUnits="userSpaceOnUse" x1="1118" x2="1549" y1="0" y2="0"><stop offset="0" stop-color="#00994a"/><stop offset="0.4907" stop-color="#00992c"/><stop offset="0.5093" stop-color="#04992a"/><stop offset="0.6574" stop-color="#50991c"/><stop offset="0.7685" stop-color="#98990e"/><stop offset="0.8426" stop-color="#997002"/><stop offset="0.9444" stop-color="#994d00"/><stop offset="1" stop-color="#993f00"/></linearGradient>
<linearGradient id="c118" gradientUnits="userSpaceOnUse" x1="1119" x2="1553" y1="0" y2="0"><stop offset="0" stop-color="#00994b"/><stop offset="0.4862" stop-color="#00992e"/><stop offset="0.578" stop-color="#2a9925"/><stop offset="0.7064" stop-color="#769917"/><stop offset="0.7523" stop-color="#969911"/><stop offset="0.7982" stop-color="#997f09"/><stop offset="0.8807" stop-color="#995b00"/><stop offset="1" stop-color="#993c00"/></linearGradient>
<linearGradient id="c119" gradientUnits="userSpaceOnUse" x1="1119" x2="1557" y1="0" y2="0"><stop offset="0" stop-color="#00994d"/><stop offset="0.4818" stop-color="#009930"/><stop offset="0.6091" stop-color="#409924"/><stop offset="0.7455" stop-color="#999813"/><stop offset="0.8091" stop-color="#997207"/><stop offset="0.8909" stop-color="#995300"/><stop offset="1" stop-color="#993800"/></linearGradient>
<linearGradient id="c120" gradientUnits="userSpaceOnUse" x1="1120" x2="1561" y1="0" y2="0"><stop offset="0" stop-color="#00994f"/><stop offset="0.4775" stop-color="#009932"/><stop offset="0.6216" stop-color="#4e9924"/><stop offset="0.7297" stop-color="#989916"/><stop offset="0.8018" stop-color="#996f08"/><stop offset="0.8919" stop-color="#994e00"/><stop offset="1" stop-color="#993500"/></linearGradient>
<linearGradient id="c121" gradientUnits="userSpaceOnUse" x1="1120" x2="1565" y1="0" y2="0"><stop offset="0" stop-color="#009951"/><stop offset="0.4732" stop-color="#029934"/><stop offset="0.6071" stop-color="#4b9927"/><stop offset="0.7143" stop-color="#95991a"/><stop offset="0.7321" stop-color="#999016"/><stop offset="0.8036" stop-color="#996808"/><stop offset="0.9018" stop-color="#994700"/><stop offset="1" stop-color="#993200"/></linearGradient>
<linearGradient id="c122" gradientUnits="userSpaceOnUse" x1="1121" x2="1569" y1="0" y2="0"><stop offset="0" stop-color="#009952"/><stop offset="0.4643" stop-color="#019936"/><stop offset="0.5982" stop-color="#4c9929"/><stop offset="0.7054" stop-color="#98991c"/><stop offset="0.7768" stop-color="#996e0d"/><stop offset="0.875" stop-color="#994a00"/><stop offset="1" stop-color="#992f00"/></linearGradient>
<linearGradient id="c123" gradientUnits="userSpaceOnUse" x1="1121" x2="1573" y1="0" y2="0"><stop offset="0" stop-color="#009954"/><stop offset="0.4602" stop-color="#029938"/><stop offset="0.5929" stop-color="#4f992c"/><stop offset="0.6903" stop-color="#959920"/><stop offset="0.708" stop-color="#998f1c"/><stop offset="0.7788" stop-color="#99670d"/><stop offset="0.8761" stop-color="#994600"/><stop offset="1" stop-color="#992c00"/></linearGradient>
<linearGradient id="c124" gradientUnits="userSpaceOnUse" x1="1122" x2="1577" y1="0" y2="0"><stop offset="0" stop-color="#009956"/><stop offset="0.4474" stop-color="#00993b"/><stop offset="0.5702" stop-color="#469930"/><stop offset="0.6842" stop-color="#999822"/><stop offset="0.7456" stop-color="#997013"/><stop offset="0.8333" stop-color="#994d05"/><stop offset="0.9298" stop-color="#993600"/><stop offset="1" stop-color="#992a00"/></linearGradient>
<linearGradient id="c125" gradientUnits="userSpaceOnUse" x1="1122" x2="1581" y1="0" y2="0"><stop offset="0" stop-color="#009958"/><stop offset="0.4435" stop-color="#01993e"/><stop offset="0.5739" stop-color="#4f9932"/><stop offset="0.6696" stop-color="#979926"/><stop offset="0.7391" stop-color="#996d14"/><stop offset="0.8261" stop-color="#994b06"/><stop offset="0.9217" stop-color="#993400"/><stop offset="1" stop-color="#992700"/></linearGradient>
<linearGradient id="c126" gradientUnits="userSpaceOnUse" x1="1123" x2="1585" y1="0" y2="0"><stop offset="0" stop-color="#00995a"/><stop offset="0.431" stop-color="#009941"/><stop offset="0.5345" stop-color="#3b9938"/><stop offset="0.6379" stop-color="#86992c"/><stop offset="0.6638" stop-color="#999628"/><stop offset="0.7241" stop-color="#996e17"/><stop offset="0.8103" stop-color="#994c08"/><stop offset="0.9138" stop-color="#993200"/><stop offset="1" stop-color="#992400"/></linearGradient>
<linearGradient id="c127" gradientUnits="userSpaceOnUse" x1="1123" x2="1589" y1="0" y2="0"><stop offset="0" stop-color="#00995c"/><stop offset="0.4274" stop-color="#009943"/><stop offset="0.547" stop-color="#499938"/><stop offset="0.6496" stop-color="#99992d"/><stop offset="0.7094" stop-color="#99701a"/><stop offset="0.7949" stop-color="#994c0b"/><stop offset="0.9145" stop-color="#992f00"/><stop offset="1" stop-color="#992200"/></linearGradient>
<linearGradient id="c128" gradientUnits="userSpaceOnUse" x1="1124" x2="1593" y1="0" y2="0"><stop offset="0" stop-color="#00995e"/><stop offset="0.4237" stop-color="#029946"/><stop offset="0.5424" stop-color="#4c993b"/><stop offset="0.6356" stop-color="#979930"/><stop offset="0.7034" stop-color="#996c1c"/><stop offset="0.7881" stop-color="#994a0c"/><stop offset="0.9153" stop-color="#992c00"/><stop offset="1" stop-color="#992000"/></linearGradient>
<linearGradient id="c129" gradientUnits="userSpaceOnUse" x1="1125" x2="1597" y1="0" y2="0"><stop offset="0" stop-color="#009960"/><stop offset="0.4153" stop-color="#019949"/><stop offset="0.5339" stop-color="#4d993e"/><stop offset="0.6271" stop-color="#999934"/><stop offset="0.678" stop-color="#997422"/><stop offset="0.7542" stop-color="#995011"/><stop offset="0.8729" stop-color="#993102"/><stop offset="1" stop-color="#991d00"/></linearGradient>
<linearGradient id="c130" gradientUnits="userSpaceOnUse" x1="1125" x2="1601" y1="0" y2="0"><stop offset="0" stop-color="#009962"/><stop offset="0.4118" stop-color="#02994c"/><stop offset="0.5294" stop-color="#509941"/><stop offset="0.6134" stop-color="#969938"/><stop offset="0.6555" stop-color="#997b28"/><stop offset="0.7227" stop-color="#995817"/><stop offset="0.8319" stop-color="#993607"/><stop offset="0.9412" stop-color="#992300"/><stop offset="1" stop-color="#991b00"/></linearGradient>
<linearGradient id="c131" gradientUnits="userSpaceOnUse" x1="1126" x2="1605" y1="0" y2="0"><stop offset="0" stop-color="#009964"/><stop offset="0.4" stop-color="#00994f"/><stop offset="0.5083" stop-color="#479946"/><stop offset="0.6083" stop-color="#99973a"/><stop offset="0.6583" stop-color="#997127"/><stop offset="0.7333" stop-color="#994e15"/><stop offset="0.85" stop-color="#992f05"/><stop offset="0.9583" stop-color="#991e00"/><stop offset="1" stop-color="#991900"/></linearGradient>
<linearGradient id="c132" gradientUnits="userSpaceOnUse" x1="1126" x2="1609" y1="0" y2="0"><stop offset="0" stop-color="#009967"/><stop offset="0.3967" stop-color="#019952"/><stop offset="0.5041" stop-color="#4a9949"/><stop offset="0.595" stop-color="#98993f"/><stop offset="0.6529" stop-color="#996e28"/><stop offset="0.7273" stop-color="#994c16"/><stop offset="0.843" stop-color="#992e06"/><stop offset="0.9504" stop-color="#991d00"/><stop offset="1" stop-color="#991700"/></linearGradient>
<linearGradient id="c133" gradientUnits="userSpaceOnUse" x1="1127" x2="1613" y1="0" y2="0"><stop offset="0" stop-color="#009969"/><stop offset="0.3852" stop-color="#009955"/><stop offset="0.4672" stop-color="#35994f"/><stop offset="0.5574" stop-color="#7f9946"/><stop offset="0.582" stop-color="#969944"/><stop offset="0.6148" stop-color="#998035"/><stop offset="0.6803" stop-color="#995a20"/><stop offset="0.7787" stop-color="#99390e"/><stop offset="0.9344" stop-color="#991d00"/><stop offset="1" stop-color="#991500"/></linearGradient>
<linearGradient id="c134" gradientUnits="userSpaceOnUse" x1="1128" x2="1617" y1="0" y2="0"><stop offset="0" stop-color="#00996b"/><stop offset="0.3821" stop-color="#009958"/><stop offset="0.4878" stop-color="#4b9950"/><stop offset="0.5772" stop-color="#999646"/><stop offset="0.626" stop-color="#997030"/><stop offset="0.6992" stop-color="#994d1b"/><stop offset="0.813" stop-color="#992e09"/><stop offset="0.9431" stop-color="#991900"/><stop offset="1" stop-color="#991300"/></linearGradient>
<linearGradient id="c135" gradientUnits="userSpaceOnUse" x1="1128" x2="1621" y1="0" y2="0"><stop offset="0" stop-color="#00996e"/><stop offset="0.379" stop-color="#02995c"/><stop offset="0.4839" stop-color="#4e9953"/><stop offset="0.5645" stop-color="#98994c"/><stop offset="0.6129" stop-color="#997234"/><stop offset="0.6855" stop-color="#994d1e"/><stop offset="0.7984" stop-color="#992e0b"/><stop offset="0.9435" stop-color="#991700"/><stop offset="1" stop-color="#991100"/></linearGradient>
<linearGradient id="c136" gradientUnits="userSpaceOnUse" x1="1129" x2="1625" y1="0" y2="0"><stop offset="0" stop-color="#009970"/><stop offset="0.371" stop-color="#01995f"/><stop offset="0.4677" stop-color="#489958"/><stop offset="0.5565" stop-color="#99974f"/><stop offset="0.6048" stop-color="#997036"/><stop offset="0.6774" stop-color="#994b20"/><stop offset="0.7903" stop-color="#992c0c"/><stop offset="0.9435" stop-color="#991500"/><stop offset="1" stop-color="#991000"/></linearGradient>
<linearGradient id="c137" gradientUnits="userSpaceOnUse" x1="1130" x2="1629" y1="0" y2="0"><stop offset="0" stop-color="#009973"/><stop offset="0.36" stop-color="#009963"/><stop offset="0.424" stop-color="#2b995f"/><stop offset="0.512" stop-color="#789958"/><stop offset="0.544" stop-color="#989954"/><stop offset="0.592" stop-color="#99713a"/><stop offset="0.656" stop-color="#994f25"/><stop offset="0.76" stop-color="#992f10"/><stop offset="0.928" stop-color="#991500"/><stop offset="1" stop-color="#990e00"/></linearGradient>
<linearGradient id="c138" gradientUnits="userSpaceOnUse" x1="1130" x2="1633" y1="0" y2="0"><stop offset="0" stop-color="#009975"/><stop offset="0.3571" stop-color="#009966"/><stop offset="0.4444" stop-color="#419961"/><stop offset="0.5238" stop-color="#8c995a"/><stop offset="0.5397" stop-color="#999556"/><stop offset="0.5873" stop-color="#996d3c"/><stop offset="0.6587" stop-color="#994924"/><stop offset="0.7698" stop-color="#992a0f"/><stop offset="0.9444" stop-color="#991100"/><stop offset="1" stop-color="#990c00"/></linearGradient>
<linearGradient id="c139" gradientUnits="userSpaceOnUse" x1="1131" x2="1637" y1="0" y2="0"><stop offset="0" stop-color="#009978"/><stop offset="0.3543" stop-color="#01996a"/><stop offset="0.4488" stop-color="#4c9964"/><stop offset="0.5276" stop-color="#99975c"/><stop offset="0.5748" stop-color="#996e40"/><stop offset="0.6378" stop-color="#994d29"/><stop offset="0.7402" stop-color="#992e13"/><stop offset="0.9134" stop-color="#991301"/><stop offset="1" stop-color="#990b00"/></linearGradient>
<linearGradient id="c140" gradientUnits="userSpaceOnUse" x1="1132" x2="1641" y1="0" y2="0"><stop offset="0" stop-color="#00997b"/><stop offset="0.3438" stop-color="#00996e"/><stop offset="0.4219" stop-color="#3b996a"/><stop offset="0.5" stop-color="#879964"/><stop offset="0.5156" stop-color="#999963"/><stop offset="0.5625" stop-color="#996f45"/><stop offset="0.625" stop-color="#994d2c"/><stop offset="0.7266" stop-color="#992d15"/><stop offset="0.8906" stop-color="#991303"/><stop offset="1" stop-color="#990900"/></linearGradient>
<linearGradient id="c141" gradientUnits="userSpaceOnUse" x1="1132" x2="1645" y1="0" y2="0"><stop offset="0" stop-color="#00997d"/><stop offset="0.3411" stop-color="#009972"/><stop offset="0.4341" stop-color="#4c996d"/><stop offset="0.5039" stop-color="#959968"/><stop offset="0.5194" stop-color="#998c5e"/><stop offset="0.5659" stop-color="#996642"/><stop offset="0.6357" stop-color="#994429"/><stop offset="0.7442" stop-color="#992713"/><stop offset="0.9302" stop-color="#990d00"/><stop offset="1" stop-color="#990800"/></linearGradient>
<linearGradient id="c142" gradientUnits="userSpaceOnUse" x1="1133" x2="1649" y1="0" y2="0"><stop offset="0" stop-color="#009980"/><stop offset="0.3333" stop-color="#009976"/><stop offset="0.4109" stop-color="#3e9972"/><stop offset="0.4884" stop-color="#8e996e"/><stop offset="0.4961" stop-color="#97996d"/><stop offset="0.5426" stop-color="#996f4d"/><stop offset="0.6047" stop-color="#994c31"/><stop offset="0.6977" stop-color="#992e1a"/><stop offset="0.8605" stop-color="#991305"/><stop offset="0.9845" stop-color="#990700"/><stop offset="1" stop-color="#990600"/></linearGradient>
<linearGradient id="c143" gradientUnits="userSpaceOnUse" x1="1134" x2="1653" y1="0" y2="0"><stop offset="0" stop-color="#009983"/><stop offset="0.3308" stop-color="#01997a"/><stop offset="0.4154" stop-color="#4a9976"/><stop offset="0.4846" stop-color="#959973"/><stop offset="0.5" stop-color="#998c68"/><stop offset="0.5462" stop-color="#996549"/><stop offset="0.6154" stop-color="#99432d"/><stop offset="0.7231" stop-color="#992516"/><stop offset="0.9077" stop-color="#990c02"/><stop offset="1" stop-color="#990500"/></linearGradient>
<linearGradient id="c144" gradientUnits="userSpaceOnUse" x1="1134" x2="1657" y1="0" y2="0"><stop offset="0" stop-color="#009986"/><stop offset="0.3206" stop-color="#00997f"/><stop offset="0.3511" stop-color="#15997e"/><stop offset="0.4275" stop-color="#5d997b"/><stop offset="0.4809" stop-color="#999877"/><stop offset="0.5191" stop-color="#997258"/><stop offset="0.5725" stop-color="#99503c"/><stop offset="0.6565" stop-color="#993222"/><stop offset="0.8015" stop-color="#99160b"/><stop offset="0.9695" stop-color="#990500"/><stop offset="1" stop-color="#990300"/></linearGradient>
<linearGradient id="c145" gradientUnits="userSpaceOnUse" x1="1135" x2="1661" y1="0" y2="0"><stop offset="0" stop-color="#009989"/><stop offset="0.3182" stop-color="#009983"/><stop offset="0.3939" stop-color="#439981"/><stop offset="0.4621" stop-color="#8e997e"/><stop offset="0.4697" stop-color="#98997e"/><stop offset="0.5152" stop-color="#996d58"/><stop offset="0.5758" stop-color="#994a3a"/><stop offset="0.6667" stop-color="#992c20"/><stop offset="0.8258" stop-color="#991109"/><stop offset="0.9773" stop-color="#990400"/><stop offset="1" stop-color="#990200"/></linearGradient>
<linearGradient id="c146" gradientUnits="userSpaceOnUse" x1="1136" x2="1665" y1="0" y2="0"><stop offset="0" stop-color="#00998d"/><stop offset="0.3158" stop-color="#029988"/><stop offset="0.3985" stop-color="#4f9986"/><stop offset="0.4586" stop-color="#959984"/><stop offset="0.4737" stop-color="#998b77"/><stop offset="0.5188" stop-color="#996354"/><stop offset="0.5865" stop-color="#994035"/><stop offset="0.6917" stop-color="#99231b"/><stop offset="0.8722" stop-color="#990a05"/><stop offset="1" stop-color="#990100"/></linearGradient>
<linearGradient id="c147" gradientUnits="userSpaceOnUse" x1="1137" x2="1669" y1="0" y2="0"><stop offset="0" stop-color="#009990"/><stop offset="0.3083" stop-color="#01998d"/><stop offset="0.3835" stop-color="#47998b"/><stop offset="0.4511" stop-color="#97998a"/><stop offset="0.4962" stop-color="#996c61"/><stop offset="0.5564" stop-color="#99483f"/><stop offset="0.6466" stop-color="#992a24"/><stop offset="0.797" stop-color="#99100c"/><stop offset="0.9774" stop-color="#990100"/><stop offset="1" stop-color="#990000"/></linearGradient>
<linearGradient id="c148" gradientUnits="userSpaceOnUse" x1="1137" x2="1673" y1="0" y2="0"><stop offset="0" stop-color="#009993"/><stop offset="0.2985" stop-color="#009992"/><stop offset="0.3134" stop-color="#099991"/><stop offset="0.3881" stop-color="#539991"/><stop offset="0.4403" stop-color="#939990"/><stop offset="0.4478" stop-color="#99958c"/><stop offset="0.4851" stop-color="#996e67"/><stop offset="0.5373" stop-color="#994c47"/><stop offset="0.6194" stop-color="#992e2a"/><stop offset="0.7612" stop-color="#991310"/><stop offset="0.9627" stop-color="#990000"/><stop offset="1" stop-color="#990000"/></linearGradient>
<linearGradient id="c149" gradientUnits="userSpaceOnUse" x1="1138" x2="1677" y1="0" y2="0"><stop offset="0" stop-color="#009997"/><stop offset="0.2963" stop-color="#009997"/><stop offset="0.363" stop-color="#3f9997"/><stop offset="0.437" stop-color="#999895"/><stop offset="0.4741" stop-color="#996f6d"/><stop offset="0.5259" stop-color="#994d4b"/><stop offset="0.6074" stop-color="#992e2d"/><stop offset="0.7407" stop-color="#991313"/><stop offset="0.9556" stop-color="#990000"/><stop offset="1" stop-color="#990000"/></linearGradient>
<linearGradient id="c150" gradientUnits="userSpaceOnUse" x1="1139" x2="1681" y1="0" y2="0"><stop offset="0" stop-color="#009799"/><stop offset="0.2941" stop-color="#029699"/><stop offset="0.3676" stop-color="#4b9599"/><stop offset="0.4265" stop-color="#949599"/><stop offset="0.4338" stop-color="#999094"/><stop offset="0.4706" stop-color="#996a6d"/><stop offset="0.5221" stop-color="#99494c"/><stop offset="0.6029" stop-color="#992b2d"/><stop offset="0.7426" stop-color="#991113"/><stop offset="0.9485" stop-color="#990000"/><stop offset="1" stop-color="#990000"/></linearGradient>
<linearGradient id="c151" gradientUnits="userSpaceOnUse" x1="1140" x2="1685" y1="0" y2="0"><stop offset="0" stop-color="#009499"/><stop offset="0.2847" stop-color="#009199"/><stop offset="0.3504" stop-color="#3d9099"/><stop offset="0.4161" stop-color="#8b8f99"/><stop offset="0.4234" stop-color="#958e99"/><stop offset="0.438" stop-color="#99808a"/><stop offset="0.4745" stop-color="#996068"/><stop offset="0.5328" stop-color="#993f45"/><stop offset="0.6277" stop-color="#992227"/><stop offset="0.7883" stop-color="#990a0d"/><stop offset="0.9489" stop-color="#990000"/><stop offset="1" stop-color="#990000"/></linearGradient>
<linearGradient id="c152" gradientUnits="userSpaceOnUse" x1="1141" x2="1688" y1="0" y2="0"><stop offset="0" stop-color="#009099"/><stop offset="0.2774" stop-color="#008c99"/><stop offset="0.2993" stop-color="#108c99"/><stop offset="0.3723" stop-color="#598a99"/><stop offset="0.4234" stop-color="#998899"/><stop offset="0.4599" stop-color="#996471"/><stop offset="0.5109" stop-color="#99444f"/><stop offset="0.5912" stop-color="#992830"/><stop offset="0.7226" stop-color="#991015"/><stop offset="0.9124" stop-color="#990003"/><stop offset="1" stop-color="#990000"/></linearGradient>
<linearGradient id="c153" gradientUnits="userSpaceOnUse" x1="1141" x2="1692" y1="0" y2="0"><stop offset="0" stop-color="#008d99"/><stop offset="0.2754" stop-color="#008799"/><stop offset="0.3406" stop-color="#3b8599"/><stop offset="0.4058" stop-color="#858399"/><stop offset="0.4203" stop-color="#988299"/><stop offset="0.4565" stop-color="#996072"/><stop offset="0.5072" stop-color="#994250"/><stop offset="0.587" stop-color="#992631"/><stop offset="0.7174" stop-color="#990e16"/><stop offset="0.8986" stop-color="#990004"/><stop offset="1" stop-color="#990000"/></linearGradient>
<linearGradient id="c154" gradientUnits="userSpaceOnUse" x1="1142" x2="1696" y1="0" y2="0"><stop offset="0" stop-color="#008999"/><stop offset="0.2734" stop-color="#018299"/><stop offset="0.3525" stop-color="#4c7f99"/><stop offset="0.4173" stop-color="#997c99"/><stop offset="0.4532" stop-color="#995b72"/><stop offset="0.5036" stop-color="#993e50"/><stop offset="0.5827" stop-color="#992432"/><stop offset="0.7122" stop-color="#990d17"/><stop offset="0.8777" stop-color="#990005"/><stop offset="1" stop-color="#990000"/></linearGradient>
<linearGradient id="c155" gradientUnits="userSpaceOnUse" x1="1143" x2="1700" y1="0" y2="0"><stop offset="0" stop-color="#008699"/><stop offset="0.2643" stop-color="#007e99"/><stop offset="0.3214" stop-color="#317c99"/><stop offset="0.3929" stop-color="#7f7899"/><stop offset="0.4143" stop-color="#997598"/><stop offset="0.45" stop-color="#995672"/><stop offset="0.5071" stop-color="#99384d"/><stop offset="0.5929" stop-color="#991e2e"/><stop offset="0.7357" stop-color="#990914"/><stop offset="0.8714" stop-color="#990006"/><stop offset="1" stop-color="#990000"/></linearGradient>
<linearGradient id="c156" gradientUnits="userSpaceOnUse" x1="1144" x2="1704" y1="0" y2="0"><stop offset="0" stop-color="#008399"/><stop offset="0.2643" stop-color="#027a99"/><stop offset="0.3429" stop-color="#4b7599"/><stop offset="0.4071" stop-color="#967199"/><stop offset="0.4357" stop-color="#995a7c"/><stop offset="0.4857" stop-color="#993d57"/><stop offset="0.5643" stop-color="#992236"/><stop offset="0.6929" stop-color="#990c1a"/><stop offset="0.8429" stop-color="#990008"/><stop offset="1" stop-color="#990000"/></linearGradient>
<linearGradient id="c157" gradientUnits="userSpaceOnUse" x1="1145" x2="1708" y1="0" y2="0"><stop offset="0" stop-color="#007f99"/><stop offset="0.2553" stop-color="#007699"/><stop offset="0.3262" stop-color="#3e7199"/><stop offset="0.3972" stop-color="#8e6c99"/><stop offset="0.4043" stop-color="#976c99"/><stop offset="0.4539" stop-color="#99476a"/><stop offset="0.5106" stop-color="#992e49"/><stop offset="0.6028" stop-color="#99172b"/><stop offset="0.7589" stop-color="#990311"/><stop offset="0.9858" stop-color="#990000"/><stop offset="1" stop-color="#990000"/></linearGradient>
<linearGradient id="c158" gradientUnits="userSpaceOnUse" x1="1146" x2="1712" y1="0" y2="0"><stop offset="0" stop-color="#007c99"/><stop offset="0.2535" stop-color="#027199"/><stop offset="0.338" stop-color="#4f6c99"/><stop offset="0.4014" stop-color="#986699"/><stop offset="0.4437" stop-color="#99476f"/><stop offset="0.5" stop-color="#992e4d"/><stop offset="0.5915" stop-color="#99162d"/><stop offset="0.7394" stop-color="#990313"/><stop offset="0.9577" stop-color="#990000"/><stop offset="1" stop-color="#990000"/></linearGradient>
<linearGradient id="c159" gradientUnits="userSpaceOnUse" x1="1146" x2="1716" y1="0" y2="0"><stop offset="0" stop-color="#007999"/><stop offset="0.2448" stop-color="#006e99"/><stop offset="0.2937" stop-color="#276a99"/><stop offset="0.3706" stop-color="#756499"/><stop offset="0.3986" stop-color="#976199"/><stop offset="0.4476" stop-color="#99406b"/><stop offset="0.5105" stop-color="#992747"/><stop offset="0.6084" stop-color="#991129"/><stop offset="0.7762" stop-color="#99000f"/><stop offset="1" stop-color="#990000"/></linearGradient>
<linearGradient id="c160" gradientUnits="userSpaceOnUse" x1="1147" x2="1720" y1="0" y2="0"><stop offset="0" stop-color="#007699"/><stop offset="0.2431" stop-color="#006a99"/><stop offset="0.3264" stop-color="#4a6399"/><stop offset="0.3958" stop-color="#985c99"/><stop offset="0.4375" stop-color="#994070"/><stop offset="0.4931" stop-color="#99294e"/><stop offset="0.5833" stop-color="#99132f"/><stop offset="0.7292" stop-color="#990114"/><stop offset="0.9792" stop-color="#990000"/><stop offset="1" stop-color="#990000"/></linearGradient>
<linearGradient id="c161" gradientUnits="userSpaceOnUse" x1="1148" x2="1724" y1="0" y2="0"><stop offset="0" stop-color="#007399"/><stop offset="0.2361" stop-color="#006699"/><stop offset="0.3056" stop-color="#3a6099"/><stop offset="0.3819" stop-color="#8c5999"/><stop offset="0.3958" stop-color="#995595"/><stop offset="0.4375" stop-color="#993b6e"/><stop offset="0.5" stop-color="#99234a"/><stop offset="0.5972" stop-color="#990e2b"/><stop offset="0.7431" stop-color="#990013"/><stop offset="0.9861" stop-color="#990000"/><stop offset="1" stop-color="#990000"/></linearGradient>
<linearGradient id="c162" gradientUnits="userSpaceOnUse" x1="1149" x2="1728" y1="0" y2="0"><stop offset="0" stop-color="#007099"/><stop offset="0.2345" stop-color="#016299"/><stop offset="0.3172" stop-color="#495b99"/><stop offset="0.3862" stop-color="#955399"/><stop offset="0.4" stop-color="#994b8d"/><stop offset="0.4414" stop-color="#993469"/><stop offset="0.5034" stop-color="#991f47"/><stop offset="0.6" stop-color="#990c2a"/><stop offset="0.731" stop-color="#990014"/><stop offset="0.9862" stop-color="#990000"/><stop offset="1" stop-color="#990000"/></linearGradient>
<linearGradient id="c163" gradientUnits="userSpaceOnUse" x1="1150" x2="1730" y1="0" y2="0"><stop offset="0" stop-color="#006d99"/><stop offset="0.2276" stop-color="#005f99"/><stop offset="0.3034" stop-color="#3f5899"/><stop offset="0.3793" stop-color="#8f5099"/><stop offset="0.3862" stop-color="#984f99"/><stop offset="0.4345" stop-color="#99336d"/><stop offset="0.4966" stop-color="#991e4a"/><stop offset="0.5931" stop-color="#990b2b"/><stop offset="0.7103" stop-color="#990017"/><stop offset="0.9724" stop-color="#990000"/><stop offset="1" stop-color="#990000"/></linearGradient>
<linearGradient id="c164" gradientUnits="userSpaceOnUse" x1="1151" x2="1726" y1="0" y2="0"><stop offset="0" stop-color="#006a99"/><stop offset="0.2292" stop-color="#015b99"/><stop offset="0.3194" stop-color="#4e5399"/><stop offset="0.3889" stop-color="#984a99"/><stop offset="0.4306" stop-color="#993372"/><stop offset="0.4931" stop-color="#991d4d"/><stop offset="0.5903" stop-color="#990a2e"/><stop offset="0.7083" stop-color="#990018"/><stop offset="0.9653" stop-color="#990002"/><stop offset="1" stop-color="#990000"/></linearGradient>
<linearGradient id="c165" gradientUnits="userSpaceOnUse" x1="1152" x2="1717" y1="0" y2="0"><stop offset="0" stop-color="#006799"/><stop offset="0.2254" stop-color="#005899"/><stop offset="0.2958" stop-color="#365299"/><stop offset="0.3732" stop-color="#814999"/><stop offset="0.3944" stop-color="#984699"/><stop offset="0.4366" stop-color="#993072"/><stop offset="0.5" stop-color="#991b4e"/><stop offset="0.5986" stop-color="#99092e"/><stop offset="0.7042" stop-color="#99001b"/><stop offset="0.9507" stop-color="#990004"/><stop offset="1" stop-color="#990001"/></linearGradient>
<linearGradient id="c166" gradientUnits="userSpaceOnUse" x1="1153" x2="1708" y1="0" y2="0"><stop offset="0" stop-color="#006499"/><stop offset="0.2302" stop-color="#025499"/><stop offset="0.3237" stop-color="#4c4b99"/><stop offset="0.4029" stop-color="#994096"/><stop offset="0.446" stop-color="#992b70"/><stop offset="0.5108" stop-color="#99184d"/><stop offset="0.6115" stop-color="#99072e"/><stop offset="0.7122" stop-color="#99001c"/><stop offset="0.964" stop-color="#990004"/><stop offset="1" stop-color="#990002"/></linearGradient>
<linearGradient id="c167" gradientUnits="userSpaceOnUse" x1="1154" x2="1700" y1="0" y2="0"><stop offset="0" stop-color="#006199"/><stop offset="0.2263" stop-color="#005299"/><stop offset="0.3139" stop-color="#414999"/><stop offset="0.3942" stop-color="#8d3f99"/><stop offset="0.4088" stop-color="#993c96"/><stop offset="0.4526" stop-color="#992870"/><stop offset="0.5182" stop-color="#99164e"/><stop offset="0.6204" stop-color="#99052f"/><stop offset="0.7153" stop-color="#99001e"/><stop offset="0.9635" stop-color="#990006"/><stop offset="1" stop-color="#990004"/></linearGradient>
<linearGradient id="c168" gradientUnits="userSpaceOnUse" x1="1155" x2="1691" y1="0" y2="0"><stop offset="0" stop-color="#005e99"/><stop offset="0.2313" stop-color="#024e99"/><stop offset="0.3284" stop-color="#4a4499"/><stop offset="0.4104" stop-color="#983a99"/><stop offset="0.4627" stop-color="#99246f"/><stop offset="0.5299" stop-color="#99134d"/><stop offset="0.6343" stop-color="#99032f"/><stop offset="0.7612" stop-color="#99001a"/><stop offset="1" stop-color="#990005"/></linearGradient>
<linearGradient id="c169" gradientUnits="userSpaceOnUse" x1="1156" x2="1683" y1="0" y2="0"><stop offset="0" stop-color="#005b99"/><stop offset="0.2273" stop-color="#004b99"/><stop offset="0.3258" stop-color="#464299"/><stop offset="0.4167" stop-color="#993699"/><stop offset="0.4697" stop-color="#99216f"/><stop offset="0.5455" stop-color="#990f4b"/><stop offset="0.6591" stop-color="#99012c"/><stop offset="0.8485" stop-color="#990012"/><stop offset="1" stop-color="#990006"/></linearGradient>
<linearGradient id="c170" gradientUnits="userSpaceOnUse" x1="1157" x2="1674" y1="0" y2="0"><stop offset="0" stop-color="#005999"/><stop offset="0.2308" stop-color="#014899"/><stop offset="0.3385" stop-color="#4d3d99"/><stop offset="0.4231" stop-color="#983299"/><stop offset="0.4769" stop-color="#991f6f"/><stop offset="0.5538" stop-color="#990e4b"/><stop offset="0.6692" stop-color="#99002d"/><stop offset="0.8692" stop-color="#990012"/><stop offset="1" stop-color="#990008"/></linearGradient>
<linearGradient id="c171" gradientUnits="userSpaceOnUse" x1="1158" x2="1666" y1="0" y2="0"><stop offset="0" stop-color="#005699"/><stop offset="0.2283" stop-color="#004699"/><stop offset="0.3386" stop-color="#4b3a99"/><stop offset="0.4252" stop-color="#952f99"/><stop offset="0.4409" stop-color="#992a8f"/><stop offset="0.4961" stop-color="#991969"/><stop offset="0.5827" stop-color="#990945"/><stop offset="0.685" stop-color="#99002c"/><stop offset="0.8898" stop-color="#990012"/><stop offset="1" stop-color="#99000a"/></linearGradient>
<linearGradient id="c172" gradientUnits="userSpaceOnUse" x1="1159" x2="1657" y1="0" y2="0"><stop offset="0" stop-color="#005399"/><stop offset="0.232" stop-color="#024299"/><stop offset="0.344" stop-color="#4c3799"/><stop offset="0.432" stop-color="#952c99"/><stop offset="0.448" stop-color="#99278f"/><stop offset="0.504" stop-color="#991669"/><stop offset="0.592" stop-color="#990746"/><stop offset="0.688" stop-color="#99002f"/><stop offset="0.888" stop-color="#990014"/><stop offset="1" stop-color="#99000b"/></linearGradient>
<linearGradient id="c173" gradientUnits="userSpaceOnUse" x1="1160" x2="1649" y1="0" y2="0"><stop offset="0" stop-color="#005199"/><stop offset="0.2276" stop-color="#004099"/><stop offset="0.3415" stop-color="#473599"/><stop offset="0.439" stop-color="#962899"/><stop offset="0.4634" stop-color="#992188"/><stop offset="0.5285" stop-color="#991162"/><stop offset="0.626" stop-color="#990240"/><stop offset="0.7805" stop-color="#990022"/><stop offset="1" stop-color="#99000d"/></linearGradient>
<linearGradient id="c174" gradientUnits="userSpaceOnUse" x1="1161" x2="1640" y1="0" y2="0"><stop offset="0" stop-color="#004e99"/><stop offset="0.2333" stop-color="#023d99"/><stop offset="0.3583" stop-color="#503099"/><stop offset="0.45" stop-color="#992599"/><stop offset="0.5083" stop-color="#991471"/><stop offset="0.5917" stop-color="#99064d"/><stop offset="0.6833" stop-color="#990036"/><stop offset="0.875" stop-color="#990019"/><stop offset="1" stop-color="#99000f"/></linearGradient>
<linearGradient id="c175" gradientUnits="userSpaceOnUse" x1="1162" x2="1632" y1="0" y2="0"><stop offset="0" stop-color="#004c99"/><stop offset="0.2288" stop-color="#003b99"/><stop offset="0.3559" stop-color="#4c2e99"/><stop offset="0.4576" stop-color="#992199"/><stop offset="0.5169" stop-color="#991271"/><stop offset="0.6017" stop-color="#99044e"/><stop offset="0.6949" stop-color="#990036"/><stop offset="0.8898" stop-color="#99001a"/><stop offset="1" stop-color="#990010"/></linearGradient>
<linearGradient id="c176" gradientUnits="userSpaceOnUse" x1="1163" x2="1623" y1="0" y2="0"><stop offset="0" stop-color="#004999"/><stop offset="0.2261" stop-color="#003999"/><stop offset="0.3304" stop-color="#392f99"/><stop offset="0.4435" stop-color="#872199"/><stop offset="0.4696" stop-color="#991d96"/><stop offset="0.5304" stop-color="#990f6f"/><stop offset="0.6174" stop-color="#99024d"/><stop offset="0.7565" stop-color="#99002e"/><stop offset="0.9913" stop-color="#990013"/><stop offset="1" stop-color="#990012"/></linearGradient>
<linearGradient id="c177" gradientUnits="userSpaceOnUse" x1="1164" x2="1615" y1="0" y2="0"><stop offset="0" stop-color="#004699"/><stop offset="0.2301" stop-color="#003699"/><stop offset="0.3628" stop-color="#4b2999"/><stop offset="0.469" stop-color="#961b99"/><stop offset="0.5133" stop-color="#99117d"/><stop offset="0.5929" stop-color="#990459"/><stop offset="0.6903" stop-color="#99003e"/><stop offset="0.8761" stop-color="#990020"/><stop offset="1" stop-color="#990014"/></linearGradient>
<linearGradient id="c178" gradientUnits="userSpaceOnUse" x1="1165" x2="1606" y1="0" y2="0"><stop offset="0" stop-color="#004499"/><stop offset="0.2342" stop-color="#023399"/><stop offset="0.3694" stop-color="#4c2699"/><stop offset="0.4775" stop-color="#961899"/><stop offset="0.5135" stop-color="#991183"/><stop offset="0.5946" stop-color="#99045d"/><stop offset="0.7027" stop-color="#99003e"/><stop offset="0.8919" stop-color="#990021"/><stop offset="1" stop-color="#990016"/></linearGradient>
<linearGradient id="c179" gradientUnits="userSpaceOnUse" x1="1167" x2="1598" y1="0" y2="0"><stop offset="0" stop-color="#004199"/><stop offset="0.2315" stop-color="#023199"/><stop offset="0.3704" stop-color="#4a2399"/><stop offset="0.4907" stop-color="#991498"/><stop offset="0.5556" stop-color="#990871"/><stop offset="0.6481" stop-color="#99004f"/><stop offset="0.7963" stop-color="#990030"/><stop offset="1" stop-color="#990019"/></linearGradient>
<linearGradient id="c180" gradientUnits="userSpaceOnUse" x1="1168" x2="1589" y1="0" y2="0"><stop offset="0" stop-color="#003f99"/><stop offset="0.2264" stop-color="#002f99"/><stop offset="0.3585" stop-color="#412399"/><stop offset="0.5" stop-color="#991298"/><stop offset="0.566" stop-color="#990672"/><stop offset="0.6509" stop-color="#990053"/><stop offset="0.8019" stop-color="#990032"/><stop offset="1" stop-color="#99001b"/></linearGradient>
<linearGradient id="c181" gradientUnits="userSpaceOnUse" x1="1169" x2="1581" y1="0" y2="0"><stop offset="0" stop-color="#003d99"/><stop offset="0.233" stop-color="#022c99"/><stop offset="0.3883" stop-color="#4f1d99"/><stop offset="0.5049" stop-color="#970f99"/><stop offset="0.5922" stop-color="#99026c"/><stop offset="0.7087" stop-color="#990048"/><stop offset="0.8835" stop-color="#99002a"/><stop offset="1" stop-color="#99001d"/></linearGradient>
<linearGradient id="c182" gradientUnits="userSpaceOnUse" x1="1170" x2="1572" y1="0" y2="0"><stop offset="0" stop-color="#003a99"/><stop offset="0.2277" stop-color="#002a99"/><stop offset="0.3861" stop-color="#4a1c99"/><stop offset="0.5149" stop-color="#970d99"/><stop offset="0.604" stop-color="#99006d"/><stop offset="0.7228" stop-color="#990049"/><stop offset="0.901" stop-color="#99002a"/><stop offset="1" stop-color="#990020"/></linearGradient>
<linearGradient id="c183" gradientUnits="userSpaceOnUse" x1="1172" x2="1564" y1="0" y2="0"><stop offset="0" stop-color="#003899"/><stop offset="0.2245" stop-color="#002899"/><stop offset="0.3776" stop-color="#441b99"/><stop offset="0.5306" stop-color="#990996"/><stop offset="0.6122" stop-color="#99006e"/><stop offset="0.7347" stop-color="#99004a"/><stop offset="0.9184" stop-color="#99002b"/><stop offset="1" stop-color="#990022"/></linearGradient>
<linearGradient id="c184" gradientUnits="userSpaceOnUse" x1="1173" x2="1555" y1="0" y2="0"><stop offset="0" stop-color="#003699"/><stop offset="0.2292" stop-color="#012699"/><stop offset="0.3958" stop-color="#4a1799"/><stop offset="0.5417" stop-color="#990697"/><stop offset="0.625" stop-color="#99006f"/><stop offset="0.75" stop-color="#99004a"/><stop offset="0.9375" stop-color="#99002c"/><stop offset="1" stop-color="#990025"/></linearGradient>
<linearGradient id="c185" gradientUnits="userSpaceOnUse" x1="1174" x2="1546" y1="0" y2="0"><stop offset="0" stop-color="#003399"/><stop offset="0.2258" stop-color="#002499"/><stop offset="0.3978" stop-color="#481599"/><stop offset="0.5484" stop-color="#980599"/><stop offset="0.6344" stop-color="#990071"/><stop offset="0.7527" stop-color="#99004e"/><stop offset="0.9355" stop-color="#990030"/><stop offset="1" stop-color="#990028"/></linearGradient>
<linearGradient id="c186" gradientUnits="userSpaceOnUse" x1="1176" x2="1538" y1="0" y2="0"><stop offset="0" stop-color="#003199"/><stop offset="0.2308" stop-color="#022299"/><stop offset="0.4176" stop-color="#4f1199"/><stop offset="0.5604" stop-color="#990299"/><stop offset="0.6484" stop-color="#990071"/><stop offset="0.7802" stop-color="#99004c"/><stop offset="0.978" stop-color="#99002d"/><stop offset="1" stop-color="#99002b"/></linearGradient>
<linearGradient id="c187" gradientUnits="userSpaceOnUse" x1="1177" x2="1529" y1="0" y2="0"><stop offset="0" stop-color="#002f99"/><stop offset="0.2273" stop-color="#012099"/><stop offset="0.4205" stop-color="#4c1099"/><stop offset="0.5682" stop-color="#960099"/><stop offset="0.6023" stop-color="#99008b"/><stop offset="0.7045" stop-color="#990064"/><stop offset="0.8523" stop-color="#990043"/><stop offset="1" stop-color="#99002e"/></linearGradient>
<linearGradient id="c188" gradientUnits="userSpaceOnUse" x1="1178" x2="1521" y1="0" y2="0"><stop offset="0" stop-color="#002d99"/><stop offset="0.2326" stop-color="#021e99"/><stop offset="0.4302" stop-color="#4e0d99"/><stop offset="0.5814" stop-color="#960099"/><stop offset="0.6512" stop-color="#99007c"/><stop offset="0.7791" stop-color="#990056"/><stop offset="0.9651" stop-color="#990036"/><stop offset="1" stop-color="#990032"/></linearGradient>
<linearGradient id="c189" gradientUnits="userSpaceOnUse" x1="1180" x2="1512" y1="0" y2="0"><stop offset="0" stop-color="#002a99"/><stop offset="0.2289" stop-color="#021c99"/><stop offset="0.4337" stop-color="#4c0b99"/><stop offset="0.5783" stop-color="#8e0099"/><stop offset="0.6024" stop-color="#990098"/><stop offset="0.6988" stop-color="#990071"/><stop offset="0.8434" stop-color="#99004d"/><stop offset="1" stop-color="#990035"/></linearGradient>
<linearGradient id="c190" gradientUnits="userSpaceOnUse" x1="1181" x2="1504" y1="0" y2="0"><stop offset="0" stop-color="#002899"/><stop offset="0.2222" stop-color="#001a99"/><stop offset="0.4321" stop-color="#480a99"/><stop offset="0.5679" stop-color="#820099"/><stop offset="0.6173" stop-color="#990098"/><stop offset="0.716" stop-color="#990071"/><stop offset="0.8642" stop-color="#99004e"/><stop offset="1" stop-color="#990039"/></linearGradient>
<linearGradient id="c191" gradientUnits="userSpaceOnUse" x1="1183" x2="1495" y1="0" y2="0"><stop offset="0" stop-color="#002699"/><stop offset="0.2179" stop-color="#001999"/><stop offset="0.4231" stop-color="#420999"/><stop offset="0.5641" stop-color="#7b0099"/><stop offset="0.6282" stop-color="#980099"/><stop offset="0.7564" stop-color="#99006c"/><stop offset="0.9231" stop-color="#990048"/><stop offset="1" stop-color="#99003d"/></linearGradient>
<linearGradient id="c192" gradientUnits="userSpaceOnUse" x1="1184" x2="1487" y1="0" y2="0"><stop offset="0" stop-color="#002499"/><stop offset="0.2237" stop-color="#011799"/><stop offset="0.4605" stop-color="#4d0599"/><stop offset="0.5789" stop-color="#7b0099"/><stop offset="0.6447" stop-color="#980099"/><stop offset="0.7632" stop-color="#99006f"/><stop offset="0.9211" stop-color="#99004d"/><stop offset="1" stop-color="#990041"/></linearGradient>
<linearGradient id="c193" gradientUnits="userSpaceOnUse" x1="1185" x2="1478" y1="0" y2="0"><stop offset="0" stop-color="#002299"/><stop offset="0.2297" stop-color="#021499"/><stop offset="0.473" stop-color="#4d0399"/><stop offset="0.6622" stop-color="#970099"/><stop offset="0.7973" stop-color="#99006d"/><stop offset="0.973" stop-color="#99004a"/><stop offset="1" stop-color="#990046"/></linearGradient>
<linearGradient id="c194" gradientUnits="userSpaceOnUse" x1="1187" x2="1470" y1="0" y2="0"><stop offset="0" stop-color="#001f99"/><stop offset="0.2254" stop-color="#021399"/><stop offset="0.4789" stop-color="#4d0199"/><stop offset="0.6761" stop-color="#960099"/><stop offset="0.7324" stop-color="#990087"/><stop offset="0.8732" stop-color="#990061"/><stop offset="1" stop-color="#99004a"/></linearGradient>
<linearGradient id="c195" gradientUnits="userSpaceOnUse" x1="1188" x2="1461" y1="0" y2="0"><stop offset="0" stop-color="#001d99"/><stop offset="0.2174" stop-color="#001299"/><stop offset="0.4783" stop-color="#490099"/><stop offset="0.7101" stop-color="#990097"/><stop offset="0.8406" stop-color="#99006f"/><stop offset="1" stop-color="#990050"/></linearGradient>
<linearGradient id="c196" gradientUnits="userSpaceOnUse" x1="1190" x2="1453" y1="0" y2="0"><stop offset="0" stop-color="#001b99"/><stop offset="0.2121" stop-color="#001099"/><stop offset="0.4697" stop-color="#430099"/><stop offset="0.7273" stop-color="#990098"/><stop offset="0.8636" stop-color="#990070"/><stop offset="1" stop-color="#990055"/></linearGradient>
<linearGradient id="c197" gradientUnits="userSpaceOnUse" x1="1192" x2="1444" y1="0" y2="0"><stop offset="0" stop-color="#001999"/><stop offset="0.2222" stop-color="#020e99"/><stop offset="0.4921" stop-color="#470099"/><stop offset="0.746" stop-color="#980099"/><stop offset="0.9048" stop-color="#99006e"/><stop offset="1" stop-color="#99005b"/></linearGradient>
<linearGradient id="c198" gradientUnits="userSpaceOnUse" x1="1193" x2="1436" y1="0" y2="0"><stop offset="0" stop-color="#001799"/><stop offset="0.2131" stop-color="#000d99"/><stop offset="0.4754" stop-color="#3f0099"/><stop offset="0.7377" stop-color="#8d0099"/><stop offset="0.7705" stop-color="#980099"/><stop offset="0.9344" stop-color="#99006e"/><stop offset="1" stop-color="#990062"/></linearGradient>
<linearGradient id="c199" gradientUnits="userSpaceOnUse" x1="1195" x2="1427" y1="0" y2="0"><stop offset="0" stop-color="#001599"/><stop offset="0.2069" stop-color="#000b99"/><stop offset="0.4655" stop-color="#390099"/><stop offset="0.8103" stop-color="#990097"/><stop offset="0.9655" stop-color="#99006f"/><stop offset="1" stop-color="#990069"/></linearGradient>
<linearGradient id="c200" gradientUnits="userSpaceOnUse" x1="1196" x2="1419" y1="0" y2="0"><stop offset="0" stop-color="#001399"/><stop offset="0.2143" stop-color="#010999"/><stop offset="0.4464" stop-color="#320099"/><stop offset="0.75" stop-color="#800099"/><stop offset="0.8393" stop-color="#990097"/><stop offset="1" stop-color="#990070"/></linearGradient>
<linearGradient id="c201" gradientUnits="userSpaceOnUse" x1="1198" x2="1410" y1="0" y2="0"><stop offset="0" stop-color="#001199"/><stop offset="0.2075" stop-color="#010899"/><stop offset="0.434" stop-color="#2d0099"/><stop offset="0.7547" stop-color="#7a0099"/><stop offset="0.8679" stop-color="#990099"/><stop offset="1" stop-color="#990079"/></linearGradient>
<linearGradient id="c202" gradientUnits="userSpaceOnUse" x1="1200" x2="1402" y1="0" y2="0"><stop offset="0" stop-color="#000f99"/><stop offset="0.1961" stop-color="#000799"/><stop offset="0.4314" stop-color="#2b0099"/><stop offset="0.7843" stop-color="#7a0099"/><stop offset="0.902" stop-color="#990099"/><stop offset="1" stop-color="#990081"/></linearGradient>
<linearGradient id="c203" gradientUnits="userSpaceOnUse" x1="1202" x2="1393" y1="0" y2="0"><stop offset="0" stop-color="#000d99"/><stop offset="0.2083" stop-color="#020599"/><stop offset="0.4375" stop-color="#2a0099"/><stop offset="0.8125" stop-color="#790099"/><stop offset="0.9375" stop-color="#980099"/><stop offset="1" stop-color="#99008b"/></linearGradient>
<linearGradient id="c204" gradientUnits="userSpaceOnUse" x1="1204" x2="1384" y1="0" y2="0"><stop offset="0" stop-color="#000b99"/><stop offset="0.2" stop-color="#020399"/><stop offset="0.5556" stop-color="#3d0099"/><stop offset="1" stop-color="#990097"/></linearGradient>
<linearGradient id="c205" gradientUnits="userSpaceOnUse" x1="1206" x2="1376" y1="0" y2="0"><stop offset="0" stop-color="#000999"/><stop offset="0.186" stop-color="#010299"/><stop offset="0.6512" stop-color="#4b0099"/><stop offset="1" stop-color="#900099"/></linearGradient>
<linearGradient id="c206" gradientUnits="userSpaceOnUse" x1="1208" x2="1367" y1="0" y2="0"><stop offset="0" stop-color="#000799"/><stop offset="0.175" stop-color="#000199"/><stop offset="0.7" stop-color="#4e0099"/><stop offset="1" stop-color="#850099"/></linearGradient>
<linearGradient id="c207" gradientUnits="userSpaceOnUse" x1="1210" x2="1359" y1="0" y2="0"><stop offset="0" stop-color="#000599"/><stop offset="0.1842" stop-color="#020099"/><stop offset="0.7368" stop-color="#4f0099"/><stop offset="1" stop-color="#7b0099"/></linearGradient>
<linearGradient id="c208" gradientUnits="userSpaceOnUse" x1="1212" x2="1350" y1="0" y2="0"><stop offset="0" stop-color="#000399"/><stop offset="0.1714" stop-color="#020099"/><stop offset="0.7714" stop-color="#4e0099"/><stop offset="1" stop-color="#710099"/></linearGradient>
<linearGradient id="c209" gradientUnits="userSpaceOnUse" x1="1214" x2="1342" y1="0" y2="0"><stop offset="0" stop-color="#000199"/><stop offset="0.1562" stop-color="#010099"/><stop offset="0.8125" stop-color="#4e0099"/><stop offset="1" stop-color="#680099"/></linearGradient>
<linearGradient id="c210" gradientUnits="userSpaceOnUse" x1="1217" x2="1333" y1="0" y2="0"><stop offset="0" stop-color="#000099"/><stop offset="0.1379" stop-color="#010099"/><stop offset="0.8621" stop-color="#4d0099"/><stop offset="1" stop-color="#5e0099"/></linearGradient>
<linearGradient id="c211" gradientUnits="userSpaceOnUse" x1="1219" x2="1325" y1="0" y2="0"><stop offset="0" stop-color="#000099"/><stop offset="0.1481" stop-color="#040099"/><stop offset="0.963" stop-color="#520099"/><stop offset="1" stop-color="#560099"/></linearGradient>
<linearGradient id="c212" gradientUnits="userSpaceOnUse" x1="1222" x2="1316" y1="0" y2="0"><stop offset="0" stop-color="#000099"/><stop offset="0.125" stop-color="#040099"/><stop offset="1" stop-color="#4d0099"/></linearGradient>
<linearGradient id="c213" gradientUnits="userSpaceOnUse" x1="1226" x2="1308" y1="0" y2="0"><stop offset="0" stop-color="#000099"/><stop offset="0.9048" stop-color="#3e0099"/><stop offset="1" stop-color="#450099"/></linearGradient>
<linearGradient id="c214" gradientUnits="userSpaceOnUse" x1="1229" x2="1299" y1="0" y2="0"><stop offset="0" stop-color="#020099"/><stop offset="1" stop-color="#3d0099"/></linearGradient>
<linearGradient id="c215" gradientUnits="userSpaceOnUse" x1="1233" x2="1291" y1="0" y2="0"><stop offset="0" stop-color="#060099"/><stop offset="1" stop-color="#360099"/></linearGradient>
<linearGradient id="c216" gradientUnits="userSpaceOnUse" x1="1237" x2="1282" y1="0" y2="0"><stop offset="0" stop-color="#0a0099"/><stop offset="1" stop-color="#2f0099"/></linearGradient>
<linearGradient id="c217" gradientUnits="userSpaceOnUse" x1="1242" x2="1274" y1="0" y2="0"><stop offset="0" stop-color="#0e0099"/><stop offset="1" stop-color="#290099"/></linearGradient>
<linearGradient id="c218" gradientUnits="userSpaceOnUse" x1="1246" x2="1265" y1="0" y2="0"><stop offset="0" stop-color="#120099"/><stop offset="1" stop-color="#220099"/></linearGradient>
<linearGradient id="c219" gradientUnits="userSpaceOnUse" x1="1251" x2="1256" y1="0" y2="0"><stop offset="0" stop-color="#170099"/><stop offset="1" stop-color="#1b0099"/></linearGradient>
<clipPath id="cpt"><polygon points="1648.6,543.0 1361.4,370.2 1234.7,715.8"/></clipPath>
<linearGradient id="c220" gradientUnits="userSpaceOnUse" x1="1359" x2="1366" y1="0" y2="0"><stop offset="0" stop-color="#00ff01"/><stop offset="1" stop-color="#07ff00"/></linearGradient>
<linearGradient id="c221" gradientUnits="userSpaceOnUse" x1="1359" x2="1369" y1="0" y2="0"><stop offset="0" stop-color="#00ff03"/><stop offset="1" stop-color="#0cff00"/></linearGradient>
<linearGradient id="c222" gradientUnits="userSpaceOnUse" x1="1358" x2="1373" y1="0" y2="0"><stop offset="0" stop-color="#00ff04"/><stop offset="1" stop-color="#13ff00"/></linearGradient>
<linearGradient id="c223" gradientUnits="userSpaceOnUse" x1="1357" x2="1376" y1="0" y2="0"><stop offset="0" stop-color="#00ff06"/><stop offset="1" stop-color="#18ff00"/></linearGradient>
<linearGradient id="c224" gradientUnits="userSpaceOnUse" x1="1356" x2="1379" y1="0" y2="0"><stop offset="0" stop-color="#00ff07"/><stop offset="0.625" stop-color="#11ff02"/><stop offset="1" stop-color="#1eff00"/></linearGradient>
<linearGradient id="c225" gradientUnits="userSpaceOnUse" x1="1356" x2="1383" y1="0" y2="0"><stop offset="0" stop-color="#00ff09"/><stop offset="1" stop-color="#25ff00"/></linearGradient>
<linearGradient id="c226" gradientUnits="userSpaceOnUse" x1="1355" x2="1386" y1="0" y2="0"><stop offset="0" stop-color="#00ff0a"/><stop offset="1" stop-color="#2bff00"/></linearGradient>
<linearGradient id="c227" gradientUnits="userSpaceOnUse" x1="1354" x2="1389" y1="0" y2="0"><stop offset="0" stop-color="#00ff0c"/><stop offset="0.5833" stop-color="#1bff04"/><stop offset="1" stop-color="#31ff00"/></linearGradient>
<linearGradient id="c228" gradientUnits="userSpaceOnUse" x1="1353" x2="1392" y1="0" y2="0"><stop offset="0" stop-color="#00ff0e"/><stop offset="0.3077" stop-color="#0eff09"/><stop offset="1" stop-color="#37ff00"/></linearGradient>
<linearGradient id="c229" gradientUnits="userSpaceOnUse" x1="1353" x2="1396" y1="0" y2="0"><stop offset="0" stop-color="#00ff0f"/><stop offset="1" stop-color="#3fff00"/></linearGradient>
<linearGradient id="c230" gradientUnits="userSpaceOnUse" x1="1352" x2="1399" y1="0" y2="0"><stop offset="0" stop-color="#00ff11"/><stop offset="0.625" stop-color="#29ff06"/><stop offset="1" stop-color="#45ff00"/></linearGradient>
<linearGradient id="c231" gradientUnits="userSpaceOnUse" x1="1351" x2="1402" y1="0" y2="0"><stop offset="0" stop-color="#00ff13"/><stop offset="0.2941" stop-color="#13ff0d"/><stop offset="1" stop-color="#4cff00"/></linearGradient>
<linearGradient id="c232" gradientUnits="userSpaceOnUse" x1="1350" x2="1406" y1="0" y2="0"><stop offset="0" stop-color="#00ff14"/><stop offset="0.1579" stop-color="#0aff11"/><stop offset="1" stop-color="#55ff00"/></linearGradient>
<linearGradient id="c233" gradientUnits="userSpaceOnUse" x1="1350" x2="1409" y1="0" y2="0"><stop offset="0" stop-color="#00ff16"/><stop offset="0.65" stop-color="#39ff07"/><stop offset="1" stop-color="#5cff00"/></linearGradient>
<linearGradient id="c234" gradientUnits="userSpaceOnUse" x1="1349" x2="1412" y1="0" y2="0"><stop offset="0" stop-color="#00ff18"/><stop offset="0.3333" stop-color="#1dff10"/><stop offset="1" stop-color="#63ff00"/></linearGradient>
<linearGradient id="c235" gradientUnits="userSpaceOnUse" x1="1348" x2="1416" y1="0" y2="0"><stop offset="0" stop-color="#00ff19"/><stop offset="0.1739" stop-color="#0fff15"/><stop offset="1" stop-color="#6dff00"/></linearGradient>
<linearGradient id="c236" gradientUnits="userSpaceOnUse" x1="1348" x2="1419" y1="0" y2="0"><stop offset="0" stop-color="#00ff1b"/><stop offset="0.625" stop-color="#45ff0a"/><stop offset="1" stop-color="#74ff00"/></linearGradient>
<linearGradient id="c237" gradientUnits="userSpaceOnUse" x1="1347" x2="1422" y1="0" y2="0"><stop offset="0" stop-color="#00ff1d"/><stop offset="0.44" stop-color="#31ff11"/><stop offset="1" stop-color="#7cff00"/></linearGradient>
<linearGradient id="c238" gradientUnits="userSpaceOnUse" x1="1346" x2="1426" y1="0" y2="0"><stop offset="0" stop-color="#00ff1f"/><stop offset="0.1852" stop-color="#14ff19"/><stop offset="0.8889" stop-color="#75ff02"/><stop offset="1" stop-color="#86ff00"/></linearGradient>
<linearGradient id="c239" gradientUnits="userSpaceOnUse" x1="1345" x2="1429" y1="0" y2="0"><stop offset="0" stop-color="#00ff21"/><stop offset="0.1071" stop-color="#0aff1e"/><stop offset="0.7857" stop-color="#6cff07"/><stop offset="1" stop-color="#8fff00"/></linearGradient>
<linearGradient id="c240" gradientUnits="userSpaceOnUse" x1="1345" x2="1432" y1="0" y2="0"><stop offset="0" stop-color="#00ff22"/><stop offset="0.4483" stop-color="#3dff14"/><stop offset="1" stop-color="#97ff00"/></linearGradient>
<linearGradient id="c241" gradientUnits="userSpaceOnUse" x1="1344" x2="1436" y1="0" y2="0"><stop offset="0" stop-color="#00ff24"/><stop offset="0.2581" stop-color="#23ff1c"/><stop offset="0.8387" stop-color="#84ff05"/><stop offset="1" stop-color="#a3ff00"/></linearGradient>
<linearGradient id="c242" gradientUnits="userSpaceOnUse" x1="1343" x2="1439" y1="0" y2="0"><stop offset="0" stop-color="#00ff26"/><stop offset="0.125" stop-color="#10ff22"/><stop offset="0.6875" stop-color="#6fff0c"/><stop offset="1" stop-color="#acff00"/></linearGradient>
<linearGradient id="c243" gradientUnits="userSpaceOnUse" x1="1342" x2="1442" y1="0" y2="0"><stop offset="0" stop-color="#00ff28"/><stop offset="0.0882" stop-color="#0aff25"/><stop offset="0.6471" stop-color="#6cff0f"/><stop offset="1" stop-color="#b5ff00"/></linearGradient>
<linearGradient id="c244" gradientUnits="userSpaceOnUse" x1="1342" x2="1446" y1="0" y2="0"><stop offset="0" stop-color="#00ff2a"/><stop offset="0.3429" stop-color="#39ff1d"/><stop offset="0.8286" stop-color="#9aff07"/><stop offset="1" stop-color="#c1ff00"/></linearGradient>
<linearGradient id="c245" gradientUnits="userSpaceOnUse" x1="1341" x2="1449" y1="0" y2="0"><stop offset="0" stop-color="#00ff2c"/><stop offset="0.1667" stop-color="#1aff26"/><stop offset="0.6667" stop-color="#7dff10"/><stop offset="1" stop-color="#ccff00"/></linearGradient>
<linearGradient id="c246" gradientUnits="userSpaceOnUse" x1="1340" x2="1452" y1="0" y2="0"><stop offset="0" stop-color="#00ff2e"/><stop offset="0.0789" stop-color="#0bff2b"/><stop offset="0.5526" stop-color="#6aff16"/><stop offset="0.9737" stop-color="#cfff00"/><stop offset="1" stop-color="#d6ff00"/></linearGradient>
<linearGradient id="c247" gradientUnits="userSpaceOnUse" x1="1339" x2="1456" y1="0" y2="0"><stop offset="0" stop-color="#00ff30"/><stop offset="0.0513" stop-color="#06ff2e"/><stop offset="0.5128" stop-color="#66ff19"/><stop offset="0.9231" stop-color="#ceff03"/><stop offset="1" stop-color="#e4ff00"/></linearGradient>
<linearGradient id="c248" gradientUnits="userSpaceOnUse" x1="1339" x2="1459" y1="0" y2="0"><stop offset="0" stop-color="#00ff32"/><stop offset="0.225" stop-color="#2bff28"/><stop offset="0.65" stop-color="#8dff13"/><stop offset="1" stop-color="#efff00"/></linearGradient>
<linearGradient id="c249" gradientUnits="userSpaceOnUse" x1="1338" x2="1462" y1="0" y2="0"><stop offset="0" stop-color="#00ff34"/><stop offset="0.119" stop-color="#15ff2f"/><stop offset="0.5476" stop-color="#79ff1a"/><stop offset="0.9048" stop-color="#ddff05"/><stop offset="1" stop-color="#fbff00"/></linearGradient>
<linearGradient id="c250" gradientUnits="userSpaceOnUse" x1="1337" x2="1466" y1="0" y2="0"><stop offset="0" stop-color="#00ff37"/><stop offset="0.0698" stop-color="#0bff34"/><stop offset="0.4884" stop-color="#6fff1f"/><stop offset="0.8372" stop-color="#d4ff09"/><stop offset="0.9767" stop-color="#fffd00"/><stop offset="1" stop-color="#fff500"/></linearGradient>
<linearGradient id="c251" gradientUnits="userSpaceOnUse" x1="1337" x2="1469" y1="0" y2="0"><stop offset="0" stop-color="#00ff39"/><stop offset="0.2727" stop-color="#3dff2b"/><stop offset="0.6364" stop-color="#9fff17"/><stop offset="0.9318" stop-color="#feff03"/><stop offset="1" stop-color="#ffea00"/></linearGradient>
<linearGradient id="c252" gradientUnits="userSpaceOnUse" x1="1336" x2="1472" y1="0" y2="0"><stop offset="0" stop-color="#00ff3b"/><stop offset="0.1522" stop-color="#21ff34"/><stop offset="0.5217" stop-color="#83ff1f"/><stop offset="0.8478" stop-color="#ebff0a"/><stop offset="0.913" stop-color="#fffc05"/><stop offset="1" stop-color="#ffdf00"/></linearGradient>
<linearGradient id="c253" gradientUnits="userSpaceOnUse" x1="1335" x2="1476" y1="0" y2="0"><stop offset="0" stop-color="#00ff3d"/><stop offset="0.0851" stop-color="#11ff39"/><stop offset="0.4468" stop-color="#72ff25"/><stop offset="0.766" stop-color="#daff10"/><stop offset="0.8723" stop-color="#fffd08"/><stop offset="1" stop-color="#ffd300"/></linearGradient>
<linearGradient id="c254" gradientUnits="userSpaceOnUse" x1="1334" x2="1479" y1="0" y2="0"><stop offset="0" stop-color="#00ff40"/><stop offset="0.0612" stop-color="#0bff3d"/><stop offset="0.4082" stop-color="#6bff29"/><stop offset="0.7143" stop-color="#d0ff15"/><stop offset="0.8367" stop-color="#feff0c"/><stop offset="1" stop-color="#ffca00"/></linearGradient>
<linearGradient id="c255" gradientUnits="userSpaceOnUse" x1="1334" x2="1482" y1="0" y2="0"><stop offset="0" stop-color="#00ff42"/><stop offset="0.2" stop-color="#32ff37"/><stop offset="0.52" stop-color="#94ff24"/><stop offset="0.8" stop-color="#faff0f"/><stop offset="0.84" stop-color="#fff40c"/><stop offset="1" stop-color="#ffc100"/></linearGradient>
<linearGradient id="c256" gradientUnits="userSpaceOnUse" x1="1333" x2="1486" y1="0" y2="0"><stop offset="0" stop-color="#00ff44"/><stop offset="0.098" stop-color="#17ff3f"/><stop offset="0.4314" stop-color="#7cff2b"/><stop offset="0.7059" stop-color="#e0ff17"/><stop offset="0.7843" stop-color="#fffe11"/><stop offset="0.9216" stop-color="#ffcd04"/><stop offset="1" stop-color="#ffb700"/></linearGradient>
<linearGradient id="c257" gradientUnits="userSpaceOnUse" x1="1332" x2="1489" y1="0" y2="0"><stop offset="0" stop-color="#00ff46"/><stop offset="0.0566" stop-color="#0cff43"/><stop offset="0.3774" stop-color="#6eff31"/><stop offset="0.6604" stop-color="#d6ff1c"/><stop offset="0.7547" stop-color="#feff15"/><stop offset="0.9057" stop-color="#ffc906"/><stop offset="1" stop-color="#ffaf00"/></linearGradient>
<linearGradient id="c258" gradientUnits="userSpaceOnUse" x1="1331" x2="1492" y1="0" y2="0"><stop offset="0" stop-color="#00ff49"/><stop offset="0.037" stop-color="#06ff47"/><stop offset="0.3519" stop-color="#69ff34"/><stop offset="0.6111" stop-color="#caff22"/><stop offset="0.7407" stop-color="#fffc17"/><stop offset="0.8704" stop-color="#ffcc09"/><stop offset="1" stop-color="#ffa800"/></linearGradient>
<linearGradient id="c259" gradientUnits="userSpaceOnUse" x1="1331" x2="1496" y1="0" y2="0"><stop offset="0" stop-color="#00ff4b"/><stop offset="0.1273" stop-color="#23ff44"/><stop offset="0.4182" stop-color="#86ff31"/><stop offset="0.6727" stop-color="#efff1d"/><stop offset="0.7091" stop-color="#fffe1a"/><stop offset="0.8364" stop-color="#ffcc0c"/><stop offset="1" stop-color="#ff9f00"/></linearGradient>
<linearGradient id="c260" gradientUnits="userSpaceOnUse" x1="1330" x2="1499" y1="0" y2="0"><stop offset="0" stop-color="#00ff4e"/><stop offset="0.0702" stop-color="#12ff4a"/><stop offset="0.3509" stop-color="#71ff38"/><stop offset="0.5965" stop-color="#d5ff25"/><stop offset="0.6842" stop-color="#feff1e"/><stop offset="0.8246" stop-color="#ffc80d"/><stop offset="1" stop-color="#ff9900"/></linearGradient>
<linearGradient id="c261" gradientUnits="userSpaceOnUse" x1="1329" x2="1502" y1="0" y2="0"><stop offset="0" stop-color="#00ff50"/><stop offset="0.0517" stop-color="#0cff4d"/><stop offset="0.3276" stop-color="#6cff3c"/><stop offset="0.569" stop-color="#d0ff29"/><stop offset="0.6724" stop-color="#fffd20"/><stop offset="0.7931" stop-color="#ffcb11"/><stop offset="0.9655" stop-color="#ff9a01"/><stop offset="1" stop-color="#ff9200"/></linearGradient>
<linearGradient id="c262" gradientUnits="userSpaceOnUse" x1="1328" x2="1505" y1="0" y2="0"><stop offset="0" stop-color="#00ff53"/><stop offset="0.0339" stop-color="#07ff51"/><stop offset="0.3051" stop-color="#66ff40"/><stop offset="0.5424" stop-color="#cbff2d"/><stop offset="0.6441" stop-color="#fcff25"/><stop offset="0.7966" stop-color="#ffc210"/><stop offset="0.9661" stop-color="#ff9301"/><stop offset="1" stop-color="#ff8c00"/></linearGradient>
<linearGradient id="c263" gradientUnits="userSpaceOnUse" x1="1328" x2="1509" y1="0" y2="0"><stop offset="0" stop-color="#00ff55"/><stop offset="0.082" stop-color="#18ff50"/><stop offset="0.3443" stop-color="#7bff3f"/><stop offset="0.5738" stop-color="#e4ff2c"/><stop offset="0.623" stop-color="#fdff28"/><stop offset="0.7541" stop-color="#ffc715"/><stop offset="0.918" stop-color="#ff9705"/><stop offset="1" stop-color="#ff8500"/></linearGradient>
<linearGradient id="c264" gradientUnits="userSpaceOnUse" x1="1327" x2="1512" y1="0" y2="0"><stop offset="0" stop-color="#00ff58"/><stop offset="0.0484" stop-color="#0dff55"/><stop offset="0.3065" stop-color="#6fff44"/><stop offset="0.5323" stop-color="#d7ff32"/><stop offset="0.6129" stop-color="#fffd2a"/><stop offset="0.7258" stop-color="#ffca19"/><stop offset="0.871" stop-color="#ff9d09"/><stop offset="1" stop-color="#ff7f00"/></linearGradient>
<linearGradient id="c265" gradientUnits="userSpaceOnUse" x1="1326" x2="1515" y1="0" y2="0"><stop offset="0" stop-color="#00ff5b"/><stop offset="0.0317" stop-color="#07ff59"/><stop offset="0.2857" stop-color="#69ff48"/><stop offset="0.5079" stop-color="#d1ff36"/><stop offset="0.5873" stop-color="#fcff2f"/><stop offset="0.6508" stop-color="#ffe224"/><stop offset="0.7778" stop-color="#ffb113"/><stop offset="0.9524" stop-color="#ff8302"/><stop offset="1" stop-color="#ff7a00"/></linearGradient>
<linearGradient id="c266" gradientUnits="userSpaceOnUse" x1="1326" x2="1519" y1="0" y2="0"><stop offset="0" stop-color="#00ff5d"/><stop offset="0.1231" stop-color="#2bff55"/><stop offset="0.3538" stop-color="#8eff45"/><stop offset="0.5538" stop-color="#f4ff33"/><stop offset="0.5692" stop-color="#fdff32"/><stop offset="0.6923" stop-color="#ffc61d"/><stop offset="0.8462" stop-color="#ff950b"/><stop offset="1" stop-color="#ff7400"/></linearGradient>
<linearGradient id="c267" gradientUnits="userSpaceOnUse" x1="1325" x2="1522" y1="0" y2="0"><stop offset="0" stop-color="#00ff60"/><stop offset="0.0606" stop-color="#13ff5c"/><stop offset="0.2879" stop-color="#72ff4c"/><stop offset="0.4848" stop-color="#d5ff3c"/><stop offset="0.5606" stop-color="#fffd34"/><stop offset="0.6667" stop-color="#ffca21"/><stop offset="0.803" stop-color="#ff9b10"/><stop offset="1" stop-color="#ff6f00"/></linearGradient>
<linearGradient id="c268" gradientUnits="userSpaceOnUse" x1="1324" x2="1525" y1="0" y2="0"><stop offset="0" stop-color="#00ff63"/><stop offset="0.0448" stop-color="#0dff60"/><stop offset="0.2687" stop-color="#6dff51"/><stop offset="0.4627" stop-color="#d0ff40"/><stop offset="0.5373" stop-color="#fbff39"/><stop offset="0.5672" stop-color="#fff233"/><stop offset="0.6716" stop-color="#ffc120"/><stop offset="0.8209" stop-color="#ff900e"/><stop offset="1" stop-color="#ff6a00"/></linearGradient>
<linearGradient id="c269" gradientUnits="userSpaceOnUse" x1="1323" x2="1529" y1="0" y2="0"><stop offset="0" stop-color="#00ff66"/><stop offset="0.029" stop-color="#07ff64"/><stop offset="0.2464" stop-color="#65ff55"/><stop offset="0.4348" stop-color="#c7ff45"/><stop offset="0.5217" stop-color="#fbff3d"/><stop offset="0.5507" stop-color="#fff137"/><stop offset="0.6522" stop-color="#ffc023"/><stop offset="0.7971" stop-color="#ff9010"/><stop offset="1" stop-color="#ff6400"/></linearGradient>
<linearGradient id="c270" gradientUnits="userSpaceOnUse" x1="1323" x2="1532" y1="0" y2="0"><stop offset="0" stop-color="#00ff68"/><stop offset="0.0857" stop-color="#20ff63"/><stop offset="0.3" stop-color="#85ff53"/><stop offset="0.4857" stop-color="#eeff43"/><stop offset="0.5143" stop-color="#fffe3f"/><stop offset="0.6143" stop-color="#ffc92a"/><stop offset="0.7429" stop-color="#ff9a17"/><stop offset="0.9143" stop-color="#ff7005"/><stop offset="1" stop-color="#ff6000"/></linearGradient>
<linearGradient id="c271" gradientUnits="userSpaceOnUse" x1="1322" x2="1535" y1="0" y2="0"><stop offset="0" stop-color="#00ff6b"/><stop offset="0.0423" stop-color="#0eff69"/><stop offset="0.2535" stop-color="#70ff5a"/><stop offset="0.4366" stop-color="#d7ff4a"/><stop offset="0.493" stop-color="#faff44"/><stop offset="0.5211" stop-color="#fff23e"/><stop offset="0.6197" stop-color="#ffc029"/><stop offset="0.7465" stop-color="#ff9316"/><stop offset="0.9296" stop-color="#ff6804"/><stop offset="1" stop-color="#ff5c00"/></linearGradient>
<linearGradient id="c272" gradientUnits="userSpaceOnUse" x1="1321" x2="1539" y1="0" y2="0"><stop offset="0" stop-color="#00ff6f"/><stop offset="0.0274" stop-color="#08ff6d"/><stop offset="0.2329" stop-color="#69ff5e"/><stop offset="0.411" stop-color="#ceff4f"/><stop offset="0.4795" stop-color="#fbff48"/><stop offset="0.5068" stop-color="#fff142"/><stop offset="0.6027" stop-color="#ffbf2c"/><stop offset="0.726" stop-color="#ff9319"/><stop offset="0.9041" stop-color="#ff6806"/><stop offset="1" stop-color="#ff5700"/></linearGradient>
<linearGradient id="c273" gradientUnits="userSpaceOnUse" x1="1320" x2="1542" y1="0" y2="0"><stop offset="0" stop-color="#00ff72"/><stop offset="0.027" stop-color="#07ff70"/><stop offset="0.2297" stop-color="#6aff61"/><stop offset="0.4054" stop-color="#d1ff52"/><stop offset="0.473" stop-color="#feff4b"/><stop offset="0.5676" stop-color="#ffc933"/><stop offset="0.6892" stop-color="#ff991e"/><stop offset="0.8514" stop-color="#ff6e0b"/><stop offset="1" stop-color="#ff5300"/></linearGradient>
<linearGradient id="c274" gradientUnits="userSpaceOnUse" x1="1320" x2="1545" y1="0" y2="0"><stop offset="0" stop-color="#00ff75"/><stop offset="0.0533" stop-color="#15ff71"/><stop offset="0.24" stop-color="#74ff63"/><stop offset="0.4" stop-color="#d5ff55"/><stop offset="0.4533" stop-color="#f9ff50"/><stop offset="0.4667" stop-color="#fffb4d"/><stop offset="0.56" stop-color="#ffc535"/><stop offset="0.68" stop-color="#ff961f"/><stop offset="0.84" stop-color="#ff6c0c"/><stop offset="1" stop-color="#ff4f00"/></linearGradient>
<linearGradient id="c275" gradientUnits="userSpaceOnUse" x1="1319" x2="1549" y1="0" y2="0"><stop offset="0" stop-color="#00ff78"/><stop offset="0.039" stop-color="#0eff75"/><stop offset="0.2208" stop-color="#6cff68"/><stop offset="0.3896" stop-color="#d5ff59"/><stop offset="0.4416" stop-color="#faff54"/><stop offset="0.4545" stop-color="#fffb51"/><stop offset="0.5455" stop-color="#ffc538"/><stop offset="0.6623" stop-color="#ff9522"/><stop offset="0.8182" stop-color="#ff6b0e"/><stop offset="1" stop-color="#ff4b00"/></linearGradient>
<linearGradient id="c276" gradientUnits="userSpaceOnUse" x1="1318" x2="1552" y1="0" y2="0"><stop offset="0" stop-color="#00ff7b"/><stop offset="0.0256" stop-color="#08ff79"/><stop offset="0.2051" stop-color="#66ff6c"/><stop offset="0.359" stop-color="#c6ff5f"/><stop offset="0.4359" stop-color="#fdff57"/><stop offset="0.5385" stop-color="#ffc23a"/><stop offset="0.6538" stop-color="#ff9323"/><stop offset="0.8077" stop-color="#ff690f"/><stop offset="1" stop-color="#ff4700"/></linearGradient>
<linearGradient id="c277" gradientUnits="userSpaceOnUse" x1="1317" x2="1555" y1="0" y2="0"><stop offset="0" stop-color="#00ff7e"/><stop offset="0.025" stop-color="#07ff7d"/><stop offset="0.2" stop-color="#65ff70"/><stop offset="0.35" stop-color="#c5ff63"/><stop offset="0.425" stop-color="#fcff5c"/><stop offset="0.525" stop-color="#ffc23d"/><stop offset="0.6375" stop-color="#ff9326"/><stop offset="0.7875" stop-color="#ff6912"/><stop offset="1" stop-color="#ff4400"/></linearGradient>
<linearGradient id="c278" gradientUnits="userSpaceOnUse" x1="1317" x2="1559" y1="0" y2="0"><stop offset="0" stop-color="#00ff81"/><stop offset="0.037" stop-color="#0fff7f"/><stop offset="0.2099" stop-color="#70ff72"/><stop offset="0.358" stop-color="#d4ff65"/><stop offset="0.4074" stop-color="#f9ff60"/><stop offset="0.4198" stop-color="#fffb5e"/><stop offset="0.4938" stop-color="#ffca45"/><stop offset="0.5926" stop-color="#ff9d2e"/><stop offset="0.7284" stop-color="#ff7218"/><stop offset="0.9259" stop-color="#ff4b04"/><stop offset="1" stop-color="#ff4000"/></linearGradient>
<linearGradient id="c279" gradientUnits="userSpaceOnUse" x1="1316" x2="1562" y1="0" y2="0"><stop offset="0" stop-color="#00ff85"/><stop offset="0.0244" stop-color="#09ff83"/><stop offset="0.1951" stop-color="#69ff77"/><stop offset="0.3415" stop-color="#cdff6a"/><stop offset="0.4024" stop-color="#fcff64"/><stop offset="0.5" stop-color="#ffc144"/><stop offset="0.6098" stop-color="#ff912b"/><stop offset="0.7561" stop-color="#ff6715"/><stop offset="0.9634" stop-color="#ff4202"/><stop offset="1" stop-color="#ff3d00"/></linearGradient>
<linearGradient id="c280" gradientUnits="userSpaceOnUse" x1="1315" x2="1565" y1="0" y2="0"><stop offset="0" stop-color="#00ff88"/><stop offset="0.0238" stop-color="#08ff87"/><stop offset="0.1905" stop-color="#69ff7b"/><stop offset="0.3333" stop-color="#ccff6e"/><stop offset="0.3929" stop-color="#fcff69"/><stop offset="0.4405" stop-color="#ffde57"/><stop offset="0.5238" stop-color="#ffaf3e"/><stop offset="0.6429" stop-color="#ff8125"/><stop offset="0.8095" stop-color="#ff580f"/><stop offset="1" stop-color="#ff3a00"/></linearGradient>
<linearGradient id="c281" gradientUnits="userSpaceOnUse" x1="1315" x2="1569" y1="0" y2="0"><stop offset="0" stop-color="#00ff8c"/><stop offset="0.0588" stop-color="#1dff88"/><stop offset="0.2118" stop-color="#7cff7c"/><stop offset="0.3529" stop-color="#e5ff70"/><stop offset="0.3882" stop-color="#fffc6b"/><stop offset="0.4588" stop-color="#ffca4f"/><stop offset="0.5529" stop-color="#ff9b36"/><stop offset="0.6824" stop-color="#ff701f"/><stop offset="0.8706" stop-color="#ff4909"/><stop offset="1" stop-color="#ff3600"/></linearGradient>
<linearGradient id="c282" gradientUnits="userSpaceOnUse" x1="1314" x2="1572" y1="0" y2="0"><stop offset="0" stop-color="#00ff8f"/><stop offset="0.0349" stop-color="#10ff8d"/><stop offset="0.186" stop-color="#6dff82"/><stop offset="0.3256" stop-color="#d4ff76"/><stop offset="0.3721" stop-color="#fcff72"/><stop offset="0.4186" stop-color="#ffdd5e"/><stop offset="0.5" stop-color="#ffae43"/><stop offset="0.6163" stop-color="#ff7f2a"/><stop offset="0.7791" stop-color="#ff5612"/><stop offset="1" stop-color="#ff3400"/></linearGradient>
<linearGradient id="c283" gradientUnits="userSpaceOnUse" x1="1313" x2="1575" y1="0" y2="0"><stop offset="0" stop-color="#00ff93"/><stop offset="0.0227" stop-color="#09ff91"/><stop offset="0.1818" stop-color="#6cff86"/><stop offset="0.3182" stop-color="#d4ff7b"/><stop offset="0.3636" stop-color="#fbff76"/><stop offset="0.3864" stop-color="#ffef6d"/><stop offset="0.4545" stop-color="#ffc052"/><stop offset="0.5568" stop-color="#ff9036"/><stop offset="0.6932" stop-color="#ff651d"/><stop offset="0.8864" stop-color="#ff4008"/><stop offset="1" stop-color="#ff3100"/></linearGradient>
<linearGradient id="c284" gradientUnits="userSpaceOnUse" x1="1312" x2="1579" y1="0" y2="0"><stop offset="0" stop-color="#00ff97"/><stop offset="0.0225" stop-color="#08ff95"/><stop offset="0.1685" stop-color="#66ff8b"/><stop offset="0.3034" stop-color="#ceff80"/><stop offset="0.3596" stop-color="#fffe7a"/><stop offset="0.427" stop-color="#ffca5b"/><stop offset="0.5169" stop-color="#ff9a3f"/><stop offset="0.6404" stop-color="#ff6f25"/><stop offset="0.8202" stop-color="#ff470e"/><stop offset="1" stop-color="#ff2e00"/></linearGradient>
<linearGradient id="c285" gradientUnits="userSpaceOnUse" x1="1312" x2="1582" y1="0" y2="0"><stop offset="0" stop-color="#00ff9a"/><stop offset="0.0444" stop-color="#17ff97"/><stop offset="0.1889" stop-color="#79ff8d"/><stop offset="0.3111" stop-color="#dcff83"/><stop offset="0.3444" stop-color="#fbff80"/><stop offset="0.3667" stop-color="#ffef76"/><stop offset="0.4333" stop-color="#ffbf59"/><stop offset="0.5222" stop-color="#ff923e"/><stop offset="0.6444" stop-color="#ff6925"/><stop offset="0.8222" stop-color="#ff430e"/><stop offset="1" stop-color="#ff2b00"/></linearGradient>
<linearGradient id="c286" gradientUnits="userSpaceOnUse" x1="1311" x2="1585" y1="0" y2="0"><stop offset="0" stop-color="#00ff9e"/><stop offset="0.0217" stop-color="#09ff9d"/><stop offset="0.163" stop-color="#68ff93"/><stop offset="0.2826" stop-color="#c9ff89"/><stop offset="0.337" stop-color="#fbff84"/><stop offset="0.3587" stop-color="#ffef7a"/><stop offset="0.4239" stop-color="#ffbf5d"/><stop offset="0.5109" stop-color="#ff9241"/><stop offset="0.6304" stop-color="#ff6927"/><stop offset="0.8043" stop-color="#ff4310"/><stop offset="1" stop-color="#ff2800"/></linearGradient>
<linearGradient id="c287" gradientUnits="userSpaceOnUse" x1="1310" x2="1589" y1="0" y2="0"><stop offset="0" stop-color="#00ffa2"/><stop offset="0.0215" stop-color="#09ffa1"/><stop offset="0.1613" stop-color="#69ff97"/><stop offset="0.2796" stop-color="#ccff8e"/><stop offset="0.3333" stop-color="#ffff89"/><stop offset="0.3978" stop-color="#ffca67"/><stop offset="0.4839" stop-color="#ff9948"/><stop offset="0.6022" stop-color="#ff6d2c"/><stop offset="0.7634" stop-color="#ff4714"/><stop offset="1" stop-color="#ff2500"/></linearGradient>
<linearGradient id="c288" gradientUnits="userSpaceOnUse" x1="1309" x2="1592" y1="0" y2="0"><stop offset="0" stop-color="#00ffa6"/><stop offset="0.0105" stop-color="#02ffa5"/><stop offset="0.1474" stop-color="#61ff9d"/><stop offset="0.2632" stop-color="#c2ff94"/><stop offset="0.3263" stop-color="#ffff8e"/><stop offset="0.3895" stop-color="#ffca6b"/><stop offset="0.4737" stop-color="#ff994c"/><stop offset="0.5895" stop-color="#ff6d2f"/><stop offset="0.7474" stop-color="#ff4716"/><stop offset="0.9895" stop-color="#ff2400"/><stop offset="1" stop-color="#ff2300"/></linearGradient>
<linearGradient id="c289" gradientUnits="userSpaceOnUse" x1="1309" x2="1595" y1="0" y2="0"><stop offset="0" stop-color="#00ffaa"/><stop offset="0.0312" stop-color="#11ffa8"/><stop offset="0.1667" stop-color="#75ff9f"/><stop offset="0.2812" stop-color="#dbff96"/><stop offset="0.3125" stop-color="#faff94"/><stop offset="0.3229" stop-color="#fff98f"/><stop offset="0.3854" stop-color="#ffc56d"/><stop offset="0.4688" stop-color="#ff954d"/><stop offset="0.5833" stop-color="#ff6a30"/><stop offset="0.75" stop-color="#ff4316"/><stop offset="1" stop-color="#ff2100"/></linearGradient>
<linearGradient id="c290" gradientUnits="userSpaceOnUse" x1="1308" x2="1599" y1="0" y2="0"><stop offset="0" stop-color="#00ffae"/><stop offset="0.0206" stop-color="#0affad"/><stop offset="0.1546" stop-color="#6dffa5"/><stop offset="0.268" stop-color="#d4ff9c"/><stop offset="0.3093" stop-color="#feff98"/><stop offset="0.3711" stop-color="#ffc973"/><stop offset="0.4433" stop-color="#ff9c55"/><stop offset="0.5464" stop-color="#ff7138"/><stop offset="0.6907" stop-color="#ff4b1e"/><stop offset="0.9072" stop-color="#ff2806"/><stop offset="1" stop-color="#ff1e00"/></linearGradient>
<linearGradient id="c291" gradientUnits="userSpaceOnUse" x1="1307" x2="1602" y1="0" y2="0"><stop offset="0" stop-color="#00ffb2"/><stop offset="0.0202" stop-color="#09ffb1"/><stop offset="0.1515" stop-color="#6dffa9"/><stop offset="0.2626" stop-color="#d4ffa1"/><stop offset="0.303" stop-color="#feff9e"/><stop offset="0.3636" stop-color="#ffc978"/><stop offset="0.4343" stop-color="#ff9c59"/><stop offset="0.5354" stop-color="#ff713b"/><stop offset="0.6768" stop-color="#ff4b20"/><stop offset="0.8889" stop-color="#ff2808"/><stop offset="1" stop-color="#ff1c00"/></linearGradient>
<linearGradient id="c292" gradientUnits="userSpaceOnUse" x1="1306" x2="1605" y1="0" y2="0"><stop offset="0" stop-color="#00ffb7"/><stop offset="0.01" stop-color="#02ffb6"/><stop offset="0.13" stop-color="#5dffaf"/><stop offset="0.24" stop-color="#c2ffa8"/><stop offset="0.3" stop-color="#fffca1"/><stop offset="0.35" stop-color="#ffcd80"/><stop offset="0.42" stop-color="#ff9f5e"/><stop offset="0.52" stop-color="#ff723f"/><stop offset="0.66" stop-color="#ff4b23"/><stop offset="0.87" stop-color="#ff280a"/><stop offset="1" stop-color="#ff1a00"/></linearGradient>
<linearGradient id="c293" gradientUnits="userSpaceOnUse" x1="1306" x2="1609" y1="0" y2="0"><stop offset="0" stop-color="#00ffbb"/><stop offset="0.0198" stop-color="#0affba"/><stop offset="0.1386" stop-color="#69ffb3"/><stop offset="0.2475" stop-color="#d2ffac"/><stop offset="0.2871" stop-color="#fdffa9"/><stop offset="0.3465" stop-color="#ffc880"/><stop offset="0.4158" stop-color="#ff9b5f"/><stop offset="0.5149" stop-color="#ff6f3f"/><stop offset="0.6535" stop-color="#ff4923"/><stop offset="0.8614" stop-color="#ff260a"/><stop offset="1" stop-color="#ff1700"/></linearGradient>
<linearGradient id="c294" gradientUnits="userSpaceOnUse" x1="1305" x2="1612" y1="0" y2="0"><stop offset="0" stop-color="#00ffbf"/><stop offset="0.0194" stop-color="#0affbe"/><stop offset="0.1359" stop-color="#69ffb8"/><stop offset="0.233" stop-color="#c7ffb2"/><stop offset="0.2816" stop-color="#feffae"/><stop offset="0.3398" stop-color="#ffc885"/><stop offset="0.4078" stop-color="#ff9a63"/><stop offset="0.5049" stop-color="#ff6f42"/><stop offset="0.6408" stop-color="#ff4826"/><stop offset="0.8447" stop-color="#ff260c"/><stop offset="1" stop-color="#ff1500"/></linearGradient>
<linearGradient id="c295" gradientUnits="userSpaceOnUse" x1="1304" x2="1615" y1="0" y2="0"><stop offset="0" stop-color="#00ffc4"/><stop offset="0.0096" stop-color="#02ffc3"/><stop offset="0.125" stop-color="#61ffbe"/><stop offset="0.2212" stop-color="#bfffb8"/><stop offset="0.2788" stop-color="#fffdb3"/><stop offset="0.3269" stop-color="#ffcd8e"/><stop offset="0.3942" stop-color="#ff9d69"/><stop offset="0.4904" stop-color="#ff7047"/><stop offset="0.625" stop-color="#ff4928"/><stop offset="0.8269" stop-color="#ff260e"/><stop offset="1" stop-color="#ff1300"/></linearGradient>
<linearGradient id="c296" gradientUnits="userSpaceOnUse" x1="1304" x2="1619" y1="0" y2="0"><stop offset="0" stop-color="#00ffc8"/><stop offset="0.0286" stop-color="#13ffc7"/><stop offset="0.1429" stop-color="#76ffc2"/><stop offset="0.2381" stop-color="#dbffbc"/><stop offset="0.2667" stop-color="#fdffba"/><stop offset="0.3238" stop-color="#ffc78e"/><stop offset="0.3905" stop-color="#ff996a"/><stop offset="0.4857" stop-color="#ff6d47"/><stop offset="0.619" stop-color="#ff4629"/><stop offset="0.819" stop-color="#ff240e"/><stop offset="1" stop-color="#ff1100"/></linearGradient>
<linearGradient id="c297" gradientUnits="userSpaceOnUse" x1="1303" x2="1622" y1="0" y2="0"><stop offset="0" stop-color="#00ffcd"/><stop offset="0.0187" stop-color="#0bffcc"/><stop offset="0.1308" stop-color="#6dffc7"/><stop offset="0.2243" stop-color="#d0ffc2"/><stop offset="0.2617" stop-color="#fdffc0"/><stop offset="0.3178" stop-color="#ffc793"/><stop offset="0.3832" stop-color="#ff986e"/><stop offset="0.4766" stop-color="#ff6c4a"/><stop offset="0.6075" stop-color="#ff462b"/><stop offset="0.8037" stop-color="#ff2410"/><stop offset="1" stop-color="#ff0f00"/></linearGradient>
<linearGradient id="c298" gradientUnits="userSpaceOnUse" x1="1302" x2="1625" y1="0" y2="0"><stop offset="0" stop-color="#00ffd2"/><stop offset="0.0185" stop-color="#0affd1"/><stop offset="0.1296" stop-color="#6effcd"/><stop offset="0.2222" stop-color="#d2ffc8"/><stop offset="0.2593" stop-color="#fffec5"/><stop offset="0.3056" stop-color="#ffcc9c"/><stop offset="0.3704" stop-color="#ff9b74"/><stop offset="0.4537" stop-color="#ff7252"/><stop offset="0.5741" stop-color="#ff4b32"/><stop offset="0.7593" stop-color="#ff2815"/><stop offset="1" stop-color="#ff0d00"/></linearGradient>
<linearGradient id="c299" gradientUnits="userSpaceOnUse" x1="1301" x2="1628" y1="0" y2="0"><stop offset="0" stop-color="#00ffd7"/><stop offset="0.0092" stop-color="#02ffd7"/><stop offset="0.1193" stop-color="#65ffd3"/><stop offset="0.211" stop-color="#caffcf"/><stop offset="0.2477" stop-color="#f8ffcd"/><stop offset="0.2569" stop-color="#fffac9"/><stop offset="0.3028" stop-color="#ffc99f"/><stop offset="0.367" stop-color="#ff9976"/><stop offset="0.4495" stop-color="#ff6f54"/><stop offset="0.5688" stop-color="#ff4933"/><stop offset="0.7523" stop-color="#ff2616"/><stop offset="1" stop-color="#ff0b00"/></linearGradient>
<linearGradient id="c300" gradientUnits="userSpaceOnUse" x1="1301" x2="1632" y1="0" y2="0"><stop offset="0" stop-color="#00ffdc"/><stop offset="0.018" stop-color="#0bffdb"/><stop offset="0.1171" stop-color="#68ffd8"/><stop offset="0.2072" stop-color="#ceffd5"/><stop offset="0.2432" stop-color="#fcffd3"/><stop offset="0.2973" stop-color="#ffc6a2"/><stop offset="0.3604" stop-color="#ff9679"/><stop offset="0.4505" stop-color="#ff6a53"/><stop offset="0.5766" stop-color="#ff4431"/><stop offset="0.7658" stop-color="#ff2214"/><stop offset="1" stop-color="#ff0900"/></linearGradient>
<linearGradient id="c301" gradientUnits="userSpaceOnUse" x1="1300" x2="1635" y1="0" y2="0"><stop offset="0" stop-color="#00ffe1"/><stop offset="0.0179" stop-color="#0bffe1"/><stop offset="0.1161" stop-color="#69ffde"/><stop offset="0.2054" stop-color="#d0ffdb"/><stop offset="0.2411" stop-color="#ffffd9"/><stop offset="0.2857" stop-color="#ffcbac"/><stop offset="0.3482" stop-color="#ff9a80"/><stop offset="0.4286" stop-color="#ff6f5b"/><stop offset="0.5446" stop-color="#ff4939"/><stop offset="0.7143" stop-color="#ff271b"/><stop offset="0.9911" stop-color="#ff0800"/><stop offset="1" stop-color="#ff0800"/></linearGradient>
<linearGradient id="c302" gradientUnits="userSpaceOnUse" x1="1299" x2="1638" y1="0" y2="0"><stop offset="0" stop-color="#00ffe6"/><stop offset="0.0088" stop-color="#03ffe6"/><stop offset="0.1062" stop-color="#60ffe4"/><stop offset="0.1947" stop-color="#c7ffe2"/><stop offset="0.2301" stop-color="#f7ffe0"/><stop offset="0.2389" stop-color="#fffbdd"/><stop offset="0.2832" stop-color="#ffc8af"/><stop offset="0.3451" stop-color="#ff9782"/><stop offset="0.4248" stop-color="#ff6d5d"/><stop offset="0.5398" stop-color="#ff473a"/><stop offset="0.7168" stop-color="#ff241a"/><stop offset="0.9912" stop-color="#ff0700"/><stop offset="1" stop-color="#ff0600"/></linearGradient>
<linearGradient id="c303" gradientUnits="userSpaceOnUse" x1="1298" x2="1642" y1="0" y2="0"><stop offset="0" stop-color="#00ffec"/><stop offset="0.0087" stop-color="#02ffec"/><stop offset="0.1043" stop-color="#60ffea"/><stop offset="0.1913" stop-color="#c8ffe8"/><stop offset="0.2261" stop-color="#f8ffe7"/><stop offset="0.2348" stop-color="#fffae2"/><stop offset="0.2783" stop-color="#ffc7b3"/><stop offset="0.3391" stop-color="#ff9686"/><stop offset="0.4174" stop-color="#ff6c5f"/><stop offset="0.5304" stop-color="#ff463c"/><stop offset="0.7043" stop-color="#ff231c"/><stop offset="0.9826" stop-color="#ff0601"/><stop offset="1" stop-color="#ff0400"/></linearGradient>
<linearGradient id="c304" gradientUnits="userSpaceOnUse" x1="1298" x2="1645" y1="0" y2="0"><stop offset="0" stop-color="#00fff1"/><stop offset="0.0172" stop-color="#0cfff1"/><stop offset="0.1121" stop-color="#6efff0"/><stop offset="0.1897" stop-color="#ceffef"/><stop offset="0.2241" stop-color="#ffffee"/><stop offset="0.2672" stop-color="#ffcabc"/><stop offset="0.319" stop-color="#ff9e92"/><stop offset="0.3966" stop-color="#ff7168"/><stop offset="0.5" stop-color="#ff4b44"/><stop offset="0.6552" stop-color="#ff2923"/><stop offset="0.9052" stop-color="#ff0a07"/><stop offset="1" stop-color="#ff0300"/></linearGradient>
<linearGradient id="c305" gradientUnits="userSpaceOnUse" x1="1297" x2="1648" y1="0" y2="0"><stop offset="0" stop-color="#00fff7"/><stop offset="0.0171" stop-color="#0bfff7"/><stop offset="0.1111" stop-color="#6ffff6"/><stop offset="0.188" stop-color="#d1fff6"/><stop offset="0.2222" stop-color="#fffcf2"/><stop offset="0.265" stop-color="#ffc7bf"/><stop offset="0.3162" stop-color="#ff9b94"/><stop offset="0.3932" stop-color="#ff6f69"/><stop offset="0.4957" stop-color="#ff4945"/><stop offset="0.6496" stop-color="#ff2724"/><stop offset="0.8974" stop-color="#ff0907"/><stop offset="1" stop-color="#ff0100"/></linearGradient>
<linearGradient id="c306" gradientUnits="userSpaceOnUse" x1="1296" x2="1650" y1="0" y2="0"><stop offset="0" stop-color="#00fffd"/><stop offset="0.0085" stop-color="#03fffd"/><stop offset="0.1017" stop-color="#65fffd"/><stop offset="0.178" stop-color="#c6fffd"/><stop offset="0.2119" stop-color="#f8fffd"/><stop offset="0.2203" stop-color="#fff9f7"/><stop offset="0.2627" stop-color="#ffc5c3"/><stop offset="0.3136" stop-color="#ff9997"/><stop offset="0.3898" stop-color="#ff6d6c"/><stop offset="0.5" stop-color="#ff4545"/><stop offset="0.661" stop-color="#ff2323"/><stop offset="0.9153" stop-color="#ff0606"/><stop offset="1" stop-color="#ff0000"/></linearGradient>
<linearGradient id="c307" gradientUnits="userSpaceOnUse" x1="1295" x2="1648" y1="0" y2="0"><stop offset="0" stop-color="#00fcff"/><stop offset="0.0085" stop-color="#02fbff"/><stop offset="0.1017" stop-color="#64fbff"/><stop offset="0.178" stop-color="#c4faff"/><stop offset="0.2203" stop-color="#fff8fd"/><stop offset="0.2627" stop-color="#ffc3c8"/><stop offset="0.3136" stop-color="#ff979b"/><stop offset="0.3898" stop-color="#ff6c6f"/><stop offset="0.4915" stop-color="#ff4749"/><stop offset="0.6441" stop-color="#ff2527"/><stop offset="0.8898" stop-color="#ff0809"/><stop offset="1" stop-color="#ff0001"/></linearGradient>
<linearGradient id="c308" gradientUnits="userSpaceOnUse" x1="1295" x2="1643" y1="0" y2="0"><stop offset="0" stop-color="#00f6ff"/><stop offset="0.0172" stop-color="#0cf6ff"/><stop offset="0.1121" stop-color="#6ff4ff"/><stop offset="0.1897" stop-color="#d0f3ff"/><stop offset="0.2241" stop-color="#fff0fc"/><stop offset="0.2672" stop-color="#ffbdc8"/><stop offset="0.319" stop-color="#ff939c"/><stop offset="0.3966" stop-color="#ff686f"/><stop offset="0.5" stop-color="#ff444a"/><stop offset="0.6552" stop-color="#ff2328"/><stop offset="0.9052" stop-color="#ff060a"/><stop offset="1" stop-color="#ff0002"/></linearGradient>
<linearGradient id="c309" gradientUnits="userSpaceOnUse" x1="1294" x2="1638" y1="0" y2="0"><stop offset="0" stop-color="#00f0ff"/><stop offset="0.0174" stop-color="#0bf0ff"/><stop offset="0.113" stop-color="#6ceeff"/><stop offset="0.1913" stop-color="#ccecff"/><stop offset="0.2261" stop-color="#fcecff"/><stop offset="0.2696" stop-color="#ffbccc"/><stop offset="0.3217" stop-color="#ff919f"/><stop offset="0.4" stop-color="#ff6772"/><stop offset="0.5043" stop-color="#ff434c"/><stop offset="0.6609" stop-color="#ff232a"/><stop offset="0.913" stop-color="#ff060b"/><stop offset="1" stop-color="#ff0004"/></linearGradient>
<linearGradient id="c310" gradientUnits="userSpaceOnUse" x1="1293" x2="1633" y1="0" y2="0"><stop offset="0" stop-color="#00ebff"/><stop offset="0.0088" stop-color="#02ebff"/><stop offset="0.1053" stop-color="#60e8ff"/><stop offset="0.193" stop-color="#c7e6ff"/><stop offset="0.2281" stop-color="#f6e5ff"/><stop offset="0.2368" stop-color="#ffe1fb"/><stop offset="0.2807" stop-color="#ffb2c8"/><stop offset="0.3421" stop-color="#ff8597"/><stop offset="0.4211" stop-color="#ff5e6d"/><stop offset="0.5351" stop-color="#ff3b47"/><stop offset="0.7105" stop-color="#ff1b24"/><stop offset="0.9912" stop-color="#ff0007"/><stop offset="1" stop-color="#ff0006"/></linearGradient>
<linearGradient id="c311" gradientUnits="userSpaceOnUse" x1="1293" x2="1629" y1="0" y2="0"><stop offset="0" stop-color="#00e5ff"/><stop offset="0.0268" stop-color="#14e5ff"/><stop offset="0.125" stop-color="#75e2ff"/><stop offset="0.2054" stop-color="#d4dfff"/><stop offset="0.2321" stop-color="#f8deff"/><stop offset="0.2411" stop-color="#ffd9fa"/><stop offset="0.2857" stop-color="#ffacc7"/><stop offset="0.3482" stop-color="#ff8097"/><stop offset="0.4286" stop-color="#ff5b6d"/><stop offset="0.5446" stop-color="#ff3847"/><stop offset="0.7232" stop-color="#ff1925"/><stop offset="0.9911" stop-color="#ff0008"/><stop offset="1" stop-color="#ff0007"/></linearGradient>
<linearGradient id="c312" gradientUnits="userSpaceOnUse" x1="1292" x2="1624" y1="0" y2="0"><stop offset="0" stop-color="#00e0ff"/><stop offset="0.018" stop-color="#0be0ff"/><stop offset="0.1171" stop-color="#69dcff"/><stop offset="0.2072" stop-color="#d0d9ff"/><stop offset="0.2432" stop-color="#ffd7ff"/><stop offset="0.2883" stop-color="#ffaacc"/><stop offset="0.3514" stop-color="#ff7f9a"/><stop offset="0.4324" stop-color="#ff5a70"/><stop offset="0.5495" stop-color="#ff3749"/><stop offset="0.7207" stop-color="#ff1a27"/><stop offset="0.991" stop-color="#ff000a"/><stop offset="1" stop-color="#ff0009"/></linearGradient>
<linearGradient id="c313" gradientUnits="userSpaceOnUse" x1="1291" x2="1619" y1="0" y2="0"><stop offset="0" stop-color="#00dbff"/><stop offset="0.0182" stop-color="#0adaff"/><stop offset="0.1182" stop-color="#67d7ff"/><stop offset="0.2091" stop-color="#cbd3ff"/><stop offset="0.2455" stop-color="#f9d1ff"/><stop offset="0.2545" stop-color="#ffcbf9"/><stop offset="0.3" stop-color="#ffa1c8"/><stop offset="0.3636" stop-color="#ff7898"/><stop offset="0.4455" stop-color="#ff556f"/><stop offset="0.5636" stop-color="#ff3449"/><stop offset="0.7455" stop-color="#ff1726"/><stop offset="1" stop-color="#ff000b"/></linearGradient>
<linearGradient id="c314" gradientUnits="userSpaceOnUse" x1="1290" x2="1614" y1="0" y2="0"><stop offset="0" stop-color="#00d6ff"/><stop offset="0.0093" stop-color="#02d6ff"/><stop offset="0.1204" stop-color="#65d1ff"/><stop offset="0.213" stop-color="#c9cdff"/><stop offset="0.25" stop-color="#f7caff"/><stop offset="0.2593" stop-color="#ffc7fb"/><stop offset="0.3056" stop-color="#ff9eca"/><stop offset="0.3704" stop-color="#ff759a"/><stop offset="0.4537" stop-color="#ff5270"/><stop offset="0.5741" stop-color="#ff324a"/><stop offset="0.7593" stop-color="#ff1527"/><stop offset="1" stop-color="#ff000d"/></linearGradient>
<linearGradient id="c315" gradientUnits="userSpaceOnUse" x1="1290" x2="1609" y1="0" y2="0"><stop offset="0" stop-color="#00d1ff"/><stop offset="0.028" stop-color="#13d0ff"/><stop offset="0.1402" stop-color="#78cbff"/><stop offset="0.2336" stop-color="#dec5ff"/><stop offset="0.2617" stop-color="#ffc3fe"/><stop offset="0.3084" stop-color="#ff9acc"/><stop offset="0.3738" stop-color="#ff739c"/><stop offset="0.4579" stop-color="#ff5173"/><stop offset="0.5794" stop-color="#ff314c"/><stop offset="0.7664" stop-color="#ff1428"/><stop offset="1" stop-color="#ff000f"/></linearGradient>
<linearGradient id="c316" gradientUnits="userSpaceOnUse" x1="1289" x2="1605" y1="0" y2="0"><stop offset="0" stop-color="#00ccff"/><stop offset="0.0189" stop-color="#0acbff"/><stop offset="0.1321" stop-color="#6cc6ff"/><stop offset="0.2264" stop-color="#cfc0ff"/><stop offset="0.2642" stop-color="#fcbeff"/><stop offset="0.2925" stop-color="#ffa7e2"/><stop offset="0.3491" stop-color="#ff80b2"/><stop offset="0.4245" stop-color="#ff5c85"/><stop offset="0.5283" stop-color="#ff3c5d"/><stop offset="0.6792" stop-color="#ff1f39"/><stop offset="0.9151" stop-color="#ff0519"/><stop offset="1" stop-color="#ff0011"/></linearGradient>
<linearGradient id="c317" gradientUnits="userSpaceOnUse" x1="1288" x2="1600" y1="0" y2="0"><stop offset="0" stop-color="#00c8ff"/><stop offset="0.0192" stop-color="#0ac7ff"/><stop offset="0.1346" stop-color="#6bc1ff"/><stop offset="0.2308" stop-color="#cdbbff"/><stop offset="0.2692" stop-color="#f9b8ff"/><stop offset="0.2788" stop-color="#ffb3f9"/><stop offset="0.3269" stop-color="#ff8eca"/><stop offset="0.3942" stop-color="#ff699b"/><stop offset="0.4904" stop-color="#ff476e"/><stop offset="0.625" stop-color="#ff2848"/><stop offset="0.8269" stop-color="#ff0d25"/><stop offset="1" stop-color="#ff0013"/></linearGradient>
<linearGradient id="c318" gradientUnits="userSpaceOnUse" x1="1287" x2="1595" y1="0" y2="0"><stop offset="0" stop-color="#00c3ff"/><stop offset="0.0097" stop-color="#02c2ff"/><stop offset="0.1262" stop-color="#60bcff"/><stop offset="0.233" stop-color="#c9b5ff"/><stop offset="0.2816" stop-color="#ffb1ff"/><stop offset="0.3301" stop-color="#ff8cce"/><stop offset="0.3981" stop-color="#ff689e"/><stop offset="0.4951" stop-color="#ff4671"/><stop offset="0.6311" stop-color="#ff274a"/><stop offset="0.835" stop-color="#ff0d27"/><stop offset="1" stop-color="#ff0015"/></linearGradient>
<linearGradient id="c319" gradientUnits="userSpaceOnUse" x1="1287" x2="1590" y1="0" y2="0"><stop offset="0" stop-color="#00beff"/><stop offset="0.0297" stop-color="#12bdff"/><stop offset="0.1485" stop-color="#73b6ff"/><stop offset="0.2475" stop-color="#d4afff"/><stop offset="0.2871" stop-color="#ffabfe"/><stop offset="0.3366" stop-color="#ff87ce"/><stop offset="0.4059" stop-color="#ff649e"/><stop offset="0.505" stop-color="#ff4372"/><stop offset="0.6436" stop-color="#ff254a"/><stop offset="0.8515" stop-color="#ff0b27"/><stop offset="1" stop-color="#ff0017"/></linearGradient>
<linearGradient id="c320" gradientUnits="userSpaceOnUse" x1="1286" x2="1585" y1="0" y2="0"><stop offset="0" stop-color="#00baff"/><stop offset="0.02" stop-color="#0ab9ff"/><stop offset="0.14" stop-color="#68b2ff"/><stop offset="0.25" stop-color="#d0aaff"/><stop offset="0.29" stop-color="#fba7ff"/><stop offset="0.31" stop-color="#ff9aee"/><stop offset="0.37" stop-color="#ff75bb"/><stop offset="0.45" stop-color="#ff548d"/><stop offset="0.56" stop-color="#ff3564"/><stop offset="0.72" stop-color="#ff1a3e"/><stop offset="0.96" stop-color="#ff021d"/><stop offset="1" stop-color="#ff0019"/></linearGradient>
<linearGradient id="c321" gradientUnits="userSpaceOnUse" x1="1285" x2="1581" y1="0" y2="0"><stop offset="0" stop-color="#00b6ff"/><stop offset="0.0202" stop-color="#09b4ff"/><stop offset="0.1414" stop-color="#66adff"/><stop offset="0.2525" stop-color="#cca5ff"/><stop offset="0.303" stop-color="#ff9ffc"/><stop offset="0.3535" stop-color="#ff7ece"/><stop offset="0.4242" stop-color="#ff5d9f"/><stop offset="0.5253" stop-color="#ff3d73"/><stop offset="0.6667" stop-color="#ff214c"/><stop offset="0.8788" stop-color="#ff0829"/><stop offset="1" stop-color="#ff001b"/></linearGradient>
<linearGradient id="c322" gradientUnits="userSpaceOnUse" x1="1284" x2="1576" y1="0" y2="0"><stop offset="0" stop-color="#00b1ff"/><stop offset="0.0102" stop-color="#02b1ff"/><stop offset="0.1429" stop-color="#64a9ff"/><stop offset="0.2551" stop-color="#c8a0ff"/><stop offset="0.3061" stop-color="#fc9cff"/><stop offset="0.3776" stop-color="#ff72c3"/><stop offset="0.4592" stop-color="#ff5193"/><stop offset="0.5714" stop-color="#ff3368"/><stop offset="0.7347" stop-color="#ff1841"/><stop offset="0.9796" stop-color="#ff0020"/><stop offset="1" stop-color="#ff001e"/></linearGradient>
<linearGradient id="c323" gradientUnits="userSpaceOnUse" x1="1284" x2="1571" y1="0" y2="0"><stop offset="0" stop-color="#00adff"/><stop offset="0.0312" stop-color="#11abff"/><stop offset="0.1667" stop-color="#76a2ff"/><stop offset="0.2812" stop-color="#dd99ff"/><stop offset="0.3125" stop-color="#fd96ff"/><stop offset="0.3854" stop-color="#ff6dc3"/><stop offset="0.4688" stop-color="#ff4d93"/><stop offset="0.5833" stop-color="#ff3069"/><stop offset="0.75" stop-color="#ff1642"/><stop offset="1" stop-color="#ff0020"/></linearGradient>
<linearGradient id="c324" gradientUnits="userSpaceOnUse" x1="1283" x2="1566" y1="0" y2="0"><stop offset="0" stop-color="#00a9ff"/><stop offset="0.0211" stop-color="#09a8ff"/><stop offset="0.1579" stop-color="#6b9fff"/><stop offset="0.2737" stop-color="#cf95ff"/><stop offset="0.3158" stop-color="#f892ff"/><stop offset="0.3263" stop-color="#ff8efb"/><stop offset="0.3895" stop-color="#ff6cc7"/><stop offset="0.4737" stop-color="#ff4c97"/><stop offset="0.5895" stop-color="#ff2f6b"/><stop offset="0.7579" stop-color="#ff1544"/><stop offset="1" stop-color="#ff0023"/></linearGradient>
<linearGradient id="c325" gradientUnits="userSpaceOnUse" x1="1282" x2="1561" y1="0" y2="0"><stop offset="0" stop-color="#00a5ff"/><stop offset="0.0215" stop-color="#09a4ff"/><stop offset="0.1613" stop-color="#6a9aff"/><stop offset="0.2796" stop-color="#cd91ff"/><stop offset="0.3333" stop-color="#ff8bfd"/><stop offset="0.3978" stop-color="#ff68c8"/><stop offset="0.4839" stop-color="#ff4998"/><stop offset="0.6022" stop-color="#ff2d6c"/><stop offset="0.7742" stop-color="#ff1344"/><stop offset="1" stop-color="#ff0025"/></linearGradient>
<linearGradient id="c326" gradientUnits="userSpaceOnUse" x1="1282" x2="1557" y1="0" y2="0"><stop offset="0" stop-color="#00a1ff"/><stop offset="0.0435" stop-color="#189eff"/><stop offset="0.1848" stop-color="#7b94ff"/><stop offset="0.3043" stop-color="#e08aff"/><stop offset="0.337" stop-color="#ff87ff"/><stop offset="0.4022" stop-color="#ff65ca"/><stop offset="0.4891" stop-color="#ff4799"/><stop offset="0.6087" stop-color="#ff2b6d"/><stop offset="0.7717" stop-color="#ff1348"/><stop offset="1" stop-color="#ff0027"/></linearGradient>
<linearGradient id="c327" gradientUnits="userSpaceOnUse" x1="1281" x2="1552" y1="0" y2="0"><stop offset="0" stop-color="#009dff"/><stop offset="0.033" stop-color="#109bff"/><stop offset="0.1758" stop-color="#7091ff"/><stop offset="0.2967" stop-color="#d287ff"/><stop offset="0.3407" stop-color="#fa82ff"/><stop offset="0.3626" stop-color="#ff78f0"/><stop offset="0.4286" stop-color="#ff5bc0"/><stop offset="0.5165" stop-color="#ff3f93"/><stop offset="0.6374" stop-color="#ff266a"/><stop offset="0.8132" stop-color="#ff0f44"/><stop offset="1" stop-color="#ff002a"/></linearGradient>
<linearGradient id="c328" gradientUnits="userSpaceOnUse" x1="1280" x2="1547" y1="0" y2="0"><stop offset="0" stop-color="#0099ff"/><stop offset="0.0225" stop-color="#0998ff"/><stop offset="0.1685" stop-color="#678eff"/><stop offset="0.2921" stop-color="#c783ff"/><stop offset="0.3483" stop-color="#f97eff"/><stop offset="0.3596" stop-color="#ff7bfb"/><stop offset="0.427" stop-color="#ff5cc8"/><stop offset="0.5169" stop-color="#ff3f98"/><stop offset="0.6404" stop-color="#ff266d"/><stop offset="0.8202" stop-color="#ff0e46"/><stop offset="1" stop-color="#ff002d"/></linearGradient>
<linearGradient id="c329" gradientUnits="userSpaceOnUse" x1="1279" x2="1542" y1="0" y2="0"><stop offset="0" stop-color="#0096ff"/><stop offset="0.0227" stop-color="#0894ff"/><stop offset="0.1705" stop-color="#658aff"/><stop offset="0.3068" stop-color="#cd7eff"/><stop offset="0.3636" stop-color="#fe78ff"/><stop offset="0.4432" stop-color="#ff56c5"/><stop offset="0.5341" stop-color="#ff3b97"/><stop offset="0.6591" stop-color="#ff236d"/><stop offset="0.8409" stop-color="#ff0c46"/><stop offset="1" stop-color="#ff0030"/></linearGradient>
<linearGradient id="c330" gradientUnits="userSpaceOnUse" x1="1279" x2="1538" y1="0" y2="0"><stop offset="0" stop-color="#0092ff"/><stop offset="0.046" stop-color="#178fff"/><stop offset="0.1954" stop-color="#7584ff"/><stop offset="0.3333" stop-color="#df77ff"/><stop offset="0.3678" stop-color="#fc74ff"/><stop offset="0.4598" stop-color="#ff4fc0"/><stop offset="0.5632" stop-color="#ff3490"/><stop offset="0.7011" stop-color="#ff1c66"/><stop offset="0.8966" stop-color="#ff0740"/><stop offset="1" stop-color="#ff0032"/></linearGradient>
<linearGradient id="c331" gradientUnits="userSpaceOnUse" x1="1278" x2="1533" y1="0" y2="0"><stop offset="0" stop-color="#008eff"/><stop offset="0.0353" stop-color="#108cff"/><stop offset="0.1882" stop-color="#6d81ff"/><stop offset="0.3294" stop-color="#d474ff"/><stop offset="0.3765" stop-color="#fb6fff"/><stop offset="0.4" stop-color="#ff66f0"/><stop offset="0.4706" stop-color="#ff4cc1"/><stop offset="0.5765" stop-color="#ff3190"/><stop offset="0.7176" stop-color="#ff1a66"/><stop offset="0.9176" stop-color="#ff0541"/><stop offset="1" stop-color="#ff0036"/></linearGradient>
<linearGradient id="c332" gradientUnits="userSpaceOnUse" x1="1277" x2="1528" y1="0" y2="0"><stop offset="0" stop-color="#008bff"/><stop offset="0.0238" stop-color="#0889ff"/><stop offset="0.1905" stop-color="#6a7dff"/><stop offset="0.3333" stop-color="#d070ff"/><stop offset="0.3929" stop-color="#ff6afe"/><stop offset="0.4643" stop-color="#ff4fcc"/><stop offset="0.5595" stop-color="#ff359d"/><stop offset="0.6905" stop-color="#ff1e72"/><stop offset="0.881" stop-color="#ff084a"/><stop offset="1" stop-color="#ff0039"/></linearGradient>
<linearGradient id="c333" gradientUnits="userSpaceOnUse" x1="1276" x2="1523" y1="0" y2="0"><stop offset="0" stop-color="#0087ff"/><stop offset="0.0241" stop-color="#0886ff"/><stop offset="0.1928" stop-color="#6879ff"/><stop offset="0.3373" stop-color="#cc6dff"/><stop offset="0.3976" stop-color="#fb67ff"/><stop offset="0.4217" stop-color="#ff5ef0"/><stop offset="0.506" stop-color="#ff42bc"/><stop offset="0.6145" stop-color="#ff2a8e"/><stop offset="0.7711" stop-color="#ff1363"/><stop offset="0.988" stop-color="#ff003e"/><stop offset="1" stop-color="#ff003c"/></linearGradient>
<linearGradient id="c334" gradientUnits="userSpaceOnUse" x1="1276" x2="1518" y1="0" y2="0"><stop offset="0" stop-color="#0084ff"/><stop offset="0.0494" stop-color="#1680ff"/><stop offset="0.2222" stop-color="#7973ff"/><stop offset="0.3704" stop-color="#df66ff"/><stop offset="0.4074" stop-color="#fc62ff"/><stop offset="0.4568" stop-color="#ff51df"/><stop offset="0.5432" stop-color="#ff39b0"/><stop offset="0.6667" stop-color="#ff2182"/><stop offset="0.8395" stop-color="#ff0c59"/><stop offset="1" stop-color="#ff0040"/></linearGradient>
<linearGradient id="c335" gradientUnits="userSpaceOnUse" x1="1275" x2="1514" y1="0" y2="0"><stop offset="0" stop-color="#0081ff"/><stop offset="0.025" stop-color="#097fff"/><stop offset="0.2" stop-color="#6872ff"/><stop offset="0.35" stop-color="#ca65ff"/><stop offset="0.425" stop-color="#ff5cfc"/><stop offset="0.5" stop-color="#ff43cb"/><stop offset="0.6" stop-color="#ff2c9e"/><stop offset="0.7375" stop-color="#ff1773"/><stop offset="0.9375" stop-color="#ff034c"/><stop offset="1" stop-color="#ff0043"/></linearGradient>
<linearGradient id="c336" gradientUnits="userSpaceOnUse" x1="1274" x2="1509" y1="0" y2="0"><stop offset="0" stop-color="#007dff"/><stop offset="0.0253" stop-color="#087cff"/><stop offset="0.2025" stop-color="#666fff"/><stop offset="0.3671" stop-color="#cf60ff"/><stop offset="0.4304" stop-color="#fd59ff"/><stop offset="0.5316" stop-color="#ff3bc2"/><stop offset="0.6456" stop-color="#ff2493"/><stop offset="0.7975" stop-color="#ff106a"/><stop offset="1" stop-color="#ff0046"/></linearGradient>
<linearGradient id="c337" gradientUnits="userSpaceOnUse" x1="1273" x2="1504" y1="0" y2="0"><stop offset="0" stop-color="#007aff"/><stop offset="0.026" stop-color="#0778ff"/><stop offset="0.2078" stop-color="#656bff"/><stop offset="0.3766" stop-color="#ce5cff"/><stop offset="0.4416" stop-color="#fc55ff"/><stop offset="0.5065" stop-color="#ff42d7"/><stop offset="0.6104" stop-color="#ff2ba6"/><stop offset="0.7532" stop-color="#ff1579"/><stop offset="0.9481" stop-color="#ff0352"/><stop offset="1" stop-color="#ff004a"/></linearGradient>
<linearGradient id="c338" gradientUnits="userSpaceOnUse" x1="1273" x2="1499" y1="0" y2="0"><stop offset="0" stop-color="#0077ff"/><stop offset="0.0526" stop-color="#1573ff"/><stop offset="0.2368" stop-color="#7365ff"/><stop offset="0.4079" stop-color="#dd56ff"/><stop offset="0.4605" stop-color="#ff50fc"/><stop offset="0.5526" stop-color="#ff36c6"/><stop offset="0.6711" stop-color="#ff2096"/><stop offset="0.8289" stop-color="#ff0d6c"/><stop offset="1" stop-color="#ff004e"/></linearGradient>
<linearGradient id="c339" gradientUnits="userSpaceOnUse" x1="1272" x2="1494" y1="0" y2="0"><stop offset="0" stop-color="#0074ff"/><stop offset="0.027" stop-color="#0872ff"/><stop offset="0.2297" stop-color="#6b63ff"/><stop offset="0.4054" stop-color="#d453ff"/><stop offset="0.473" stop-color="#ff4cfd"/><stop offset="0.5676" stop-color="#ff33c6"/><stop offset="0.6892" stop-color="#ff1e97"/><stop offset="0.8514" stop-color="#ff0b6d"/><stop offset="1" stop-color="#ff0052"/></linearGradient>
<linearGradient id="c340" gradientUnits="userSpaceOnUse" x1="1271" x2="1490" y1="0" y2="0"><stop offset="0" stop-color="#0071ff"/><stop offset="0.0274" stop-color="#086fff"/><stop offset="0.2329" stop-color="#6a60ff"/><stop offset="0.411" stop-color="#d150ff"/><stop offset="0.4795" stop-color="#fe49ff"/><stop offset="0.5753" stop-color="#ff31c9"/><stop offset="0.6986" stop-color="#ff1c99"/><stop offset="0.863" stop-color="#ff096e"/><stop offset="1" stop-color="#ff0056"/></linearGradient>
<linearGradient id="c341" gradientUnits="userSpaceOnUse" x1="1271" x2="1485" y1="0" y2="0"><stop offset="0" stop-color="#006dff"/><stop offset="0.0833" stop-color="#2168ff"/><stop offset="0.2917" stop-color="#8758ff"/><stop offset="0.4722" stop-color="#f147ff"/><stop offset="0.5" stop-color="#ff43fa"/><stop offset="0.5972" stop-color="#ff2dc6"/><stop offset="0.7222" stop-color="#ff1997"/><stop offset="0.9028" stop-color="#ff066b"/><stop offset="1" stop-color="#ff005a"/></linearGradient>
<linearGradient id="c342" gradientUnits="userSpaceOnUse" x1="1270" x2="1480" y1="0" y2="0"><stop offset="0" stop-color="#006aff"/><stop offset="0.0571" stop-color="#1467ff"/><stop offset="0.2714" stop-color="#7757ff"/><stop offset="0.4571" stop-color="#df46ff"/><stop offset="0.5" stop-color="#fa42ff"/><stop offset="0.5286" stop-color="#ff3cf2"/><stop offset="0.6286" stop-color="#ff27c0"/><stop offset="0.7571" stop-color="#ff1593"/><stop offset="0.9429" stop-color="#ff0368"/><stop offset="1" stop-color="#ff005f"/></linearGradient>
<linearGradient id="c343" gradientUnits="userSpaceOnUse" x1="1269" x2="1475" y1="0" y2="0"><stop offset="0" stop-color="#0068ff"/><stop offset="0.029" stop-color="#0866ff"/><stop offset="0.2464" stop-color="#6756ff"/><stop offset="0.4348" stop-color="#ca46ff"/><stop offset="0.5217" stop-color="#fe3eff"/><stop offset="0.6232" stop-color="#ff28ca"/><stop offset="0.7536" stop-color="#ff159b"/><stop offset="0.9275" stop-color="#ff0471"/><stop offset="1" stop-color="#ff0063"/></linearGradient>
<linearGradient id="c344" gradientUnits="userSpaceOnUse" x1="1268" x2="1470" y1="0" y2="0"><stop offset="0" stop-color="#0065ff"/><stop offset="0.0294" stop-color="#0763ff"/><stop offset="0.25" stop-color="#6553ff"/><stop offset="0.4412" stop-color="#c643ff"/><stop offset="0.5294" stop-color="#f93bff"/><stop offset="0.5441" stop-color="#ff39fc"/><stop offset="0.6471" stop-color="#ff24c8"/><stop offset="0.7794" stop-color="#ff129a"/><stop offset="0.9706" stop-color="#ff016e"/><stop offset="1" stop-color="#ff0068"/></linearGradient>
<linearGradient id="c345" gradientUnits="userSpaceOnUse" x1="1268" x2="1466" y1="0" y2="0"><stop offset="0" stop-color="#0062ff"/><stop offset="0.0909" stop-color="#205cff"/><stop offset="0.3182" stop-color="#834bff"/><stop offset="0.5152" stop-color="#ea3aff"/><stop offset="0.5455" stop-color="#fc37ff"/><stop offset="0.6515" stop-color="#ff23cc"/><stop offset="0.7879" stop-color="#ff119d"/><stop offset="0.9697" stop-color="#ff0172"/><stop offset="1" stop-color="#ff006d"/></linearGradient>
<linearGradient id="c346" gradientUnits="userSpaceOnUse" x1="1267" x2="1461" y1="0" y2="0"><stop offset="0" stop-color="#005fff"/><stop offset="0.0615" stop-color="#135bff"/><stop offset="0.2923" stop-color="#724bff"/><stop offset="0.4923" stop-color="#d53aff"/><stop offset="0.5692" stop-color="#ff32fe"/><stop offset="0.6769" stop-color="#ff1fca"/><stop offset="0.8154" stop-color="#ff0e9c"/><stop offset="1" stop-color="#ff0072"/></linearGradient>
<linearGradient id="c347" gradientUnits="userSpaceOnUse" x1="1266" x2="1456" y1="0" y2="0"><stop offset="0" stop-color="#005cff"/><stop offset="0.0312" stop-color="#075aff"/><stop offset="0.2812" stop-color="#6949ff"/><stop offset="0.5" stop-color="#d137ff"/><stop offset="0.5781" stop-color="#fb30ff"/><stop offset="0.6094" stop-color="#ff2bf2"/><stop offset="0.7188" stop-color="#ff19c2"/><stop offset="0.875" stop-color="#ff0893"/><stop offset="1" stop-color="#ff0077"/></linearGradient>
<linearGradient id="c348" gradientUnits="userSpaceOnUse" x1="1265" x2="1451" y1="0" y2="0"><stop offset="0" stop-color="#005aff"/><stop offset="0.0323" stop-color="#0758ff"/><stop offset="0.2903" stop-color="#6946ff"/><stop offset="0.5161" stop-color="#d134ff"/><stop offset="0.5968" stop-color="#fb2dff"/><stop offset="0.629" stop-color="#ff27f2"/><stop offset="0.7419" stop-color="#ff17c2"/><stop offset="0.9032" stop-color="#ff0692"/><stop offset="1" stop-color="#ff007d"/></linearGradient>
<linearGradient id="c349" gradientUnits="userSpaceOnUse" x1="1265" x2="1446" y1="0" y2="0"><stop offset="0" stop-color="#0057ff"/><stop offset="0.0984" stop-color="#1e51ff"/><stop offset="0.3607" stop-color="#843fff"/><stop offset="0.5738" stop-color="#e62dff"/><stop offset="0.623" stop-color="#ff28fe"/><stop offset="0.7377" stop-color="#ff17cb"/><stop offset="0.8852" stop-color="#ff089e"/><stop offset="1" stop-color="#ff0084"/></linearGradient>
<linearGradient id="c350" gradientUnits="userSpaceOnUse" x1="1264" x2="1442" y1="0" y2="0"><stop offset="0" stop-color="#0054ff"/><stop offset="0.05" stop-color="#0d51ff"/><stop offset="0.3167" stop-color="#6d40ff"/><stop offset="0.55" stop-color="#d32dff"/><stop offset="0.6333" stop-color="#fd26ff"/><stop offset="0.7833" stop-color="#ff11c2"/><stop offset="0.95" stop-color="#ff0294"/><stop offset="1" stop-color="#ff0089"/></linearGradient>
<linearGradient id="c351" gradientUnits="userSpaceOnUse" x1="1263" x2="1437" y1="0" y2="0"><stop offset="0" stop-color="#0052ff"/><stop offset="0.0345" stop-color="#0750ff"/><stop offset="0.3103" stop-color="#673eff"/><stop offset="0.5517" stop-color="#cc2bff"/><stop offset="0.6552" stop-color="#fd22ff"/><stop offset="0.8103" stop-color="#ff0ec2"/><stop offset="0.9828" stop-color="#ff0093"/><stop offset="1" stop-color="#ff008f"/></linearGradient>
<linearGradient id="c352" gradientUnits="userSpaceOnUse" x1="1262" x2="1432" y1="0" y2="0"><stop offset="0" stop-color="#004fff"/><stop offset="0.0351" stop-color="#064dff"/><stop offset="0.3158" stop-color="#653cff"/><stop offset="0.5614" stop-color="#c829ff"/><stop offset="0.6842" stop-color="#ff1efe"/><stop offset="0.807" stop-color="#ff0fcc"/><stop offset="0.9825" stop-color="#ff009b"/><stop offset="1" stop-color="#ff0097"/></linearGradient>
<linearGradient id="c353" gradientUnits="userSpaceOnUse" x1="1262" x2="1427" y1="0" y2="0"><stop offset="0" stop-color="#004dff"/><stop offset="0.1091" stop-color="#1e46ff"/><stop offset="0.4" stop-color="#8134ff"/><stop offset="0.6545" stop-color="#e920ff"/><stop offset="0.7091" stop-color="#ff1bfc"/><stop offset="0.8364" stop-color="#ff0ccb"/><stop offset="1" stop-color="#ff009e"/></linearGradient>
<linearGradient id="c354" gradientUnits="userSpaceOnUse" x1="1261" x2="1423" y1="0" y2="0"><stop offset="0" stop-color="#004aff"/><stop offset="0.0556" stop-color="#0d47ff"/><stop offset="0.3519" stop-color="#6b35ff"/><stop offset="0.6111" stop-color="#ce22ff"/><stop offset="0.7222" stop-color="#ff18ff"/><stop offset="0.8519" stop-color="#ff0acd"/><stop offset="1" stop-color="#ff00a4"/></linearGradient>
<linearGradient id="c355" gradientUnits="userSpaceOnUse" x1="1260" x2="1418" y1="0" y2="0"><stop offset="0" stop-color="#0048ff"/><stop offset="0.0377" stop-color="#0746ff"/><stop offset="0.3585" stop-color="#6933ff"/><stop offset="0.6415" stop-color="#d21eff"/><stop offset="0.7547" stop-color="#ff14fc"/><stop offset="0.8868" stop-color="#ff07cc"/><stop offset="1" stop-color="#ff00ac"/></linearGradient>
<linearGradient id="c356" gradientUnits="userSpaceOnUse" x1="1260" x2="1413" y1="0" y2="0"><stop offset="0" stop-color="#0045ff"/><stop offset="0.2157" stop-color="#3a39ff"/><stop offset="0.5294" stop-color="#a025ff"/><stop offset="0.7647" stop-color="#fb13ff"/><stop offset="0.8235" stop-color="#ff0deb"/><stop offset="0.9804" stop-color="#ff00ba"/><stop offset="1" stop-color="#ff00b5"/></linearGradient>
<linearGradient id="c357" gradientUnits="userSpaceOnUse" x1="1259" x2="1408" y1="0" y2="0"><stop offset="0" stop-color="#0043ff"/><stop offset="0.12" stop-color="#1d3dff"/><stop offset="0.46" stop-color="#8228ff"/><stop offset="0.74" stop-color="#e614ff"/><stop offset="0.8" stop-color="#fe0fff"/><stop offset="0.96" stop-color="#ff01c9"/><stop offset="1" stop-color="#ff00be"/></linearGradient>
<linearGradient id="c358" gradientUnits="userSpaceOnUse" x1="1258" x2="1403" y1="0" y2="0"><stop offset="0" stop-color="#0041ff"/><stop offset="0.0612" stop-color="#0c3eff"/><stop offset="0.4082" stop-color="#6c2aff"/><stop offset="0.7143" stop-color="#d215ff"/><stop offset="0.8367" stop-color="#ff0cfd"/><stop offset="1" stop-color="#ff00c8"/></linearGradient>
<linearGradient id="c359" gradientUnits="userSpaceOnUse" x1="1257" x2="1399" y1="0" y2="0"><stop offset="0" stop-color="#003eff"/><stop offset="0.0417" stop-color="#063cff"/><stop offset="0.4167" stop-color="#6b28ff"/><stop offset="0.7292" stop-color="#d013ff"/><stop offset="0.8542" stop-color="#fe09ff"/><stop offset="1" stop-color="#ff00d0"/></linearGradient>
<linearGradient id="c360" gradientUnits="userSpaceOnUse" x1="1257" x2="1394" y1="0" y2="0"><stop offset="0" stop-color="#003cff"/><stop offset="0.2391" stop-color="#3730ff"/><stop offset="0.587" stop-color="#991cff"/><stop offset="0.8913" stop-color="#ff06fe"/><stop offset="1" stop-color="#ff00db"/></linearGradient>
<linearGradient id="c361" gradientUnits="userSpaceOnUse" x1="1256" x2="1389" y1="0" y2="0"><stop offset="0" stop-color="#003aff"/><stop offset="0.1111" stop-color="#1634ff"/><stop offset="0.4889" stop-color="#7620ff"/><stop offset="0.8222" stop-color="#dc0bff"/><stop offset="0.9111" stop-color="#fa05ff"/><stop offset="0.9556" stop-color="#ff01f4"/><stop offset="1" stop-color="#ff00e6"/></linearGradient>
<linearGradient id="c362" gradientUnits="userSpaceOnUse" x1="1255" x2="1384" y1="0" y2="0"><stop offset="0" stop-color="#0038ff"/><stop offset="0.0698" stop-color="#0c34ff"/><stop offset="0.4651" stop-color="#6a20ff"/><stop offset="0.814" stop-color="#cf0bff"/><stop offset="0.9535" stop-color="#fc01ff"/><stop offset="1" stop-color="#ff00f2"/></linearGradient>
<linearGradient id="c363" gradientUnits="userSpaceOnUse" x1="1254" x2="1379" y1="0" y2="0"><stop offset="0" stop-color="#0036ff"/><stop offset="0.0476" stop-color="#0633ff"/><stop offset="0.4762" stop-color="#681eff"/><stop offset="0.8333" stop-color="#ca09ff"/><stop offset="1" stop-color="#ff00ff"/></linearGradient>
<linearGradient id="c364" gradientUnits="userSpaceOnUse" x1="1254" x2="1375" y1="0" y2="0"><stop offset="0" stop-color="#0033ff"/><stop offset="0.2439" stop-color="#3028ff"/><stop offset="0.6585" stop-color="#9313ff"/><stop offset="1" stop-color="#f400ff"/></linearGradient>
<linearGradient id="c365" gradientUnits="userSpaceOnUse" x1="1253" x2="1370" y1="0" y2="0"><stop offset="0" stop-color="#0031ff"/><stop offset="0.1282" stop-color="#162cff"/><stop offset="0.5897" stop-color="#7a16ff"/><stop offset="0.9744" stop-color="#e000ff"/><stop offset="1" stop-color="#e700ff"/></linearGradient>
<linearGradient id="c366" gradientUnits="userSpaceOnUse" x1="1252" x2="1365" y1="0" y2="0"><stop offset="0" stop-color="#002fff"/><stop offset="0.0789" stop-color="#0b2cff"/><stop offset="0.5526" stop-color="#6c17ff"/><stop offset="0.9737" stop-color="#d300ff"/><stop offset="1" stop-color="#db00ff"/></linearGradient>
<linearGradient id="c367" gradientUnits="userSpaceOnUse" x1="1251" x2="1360" y1="0" y2="0"><stop offset="0" stop-color="#002dff"/><stop offset="0.0541" stop-color="#062bff"/><stop offset="0.5676" stop-color="#6915ff"/><stop offset="1" stop-color="#cf00ff"/></linearGradient>
<linearGradient id="c368" gradientUnits="userSpaceOnUse" x1="1251" x2="1355" y1="0" y2="0"><stop offset="0" stop-color="#002bff"/><stop offset="0.2857" stop-color="#2f20ff"/><stop offset="0.7714" stop-color="#8f0aff"/><stop offset="1" stop-color="#c300ff"/></linearGradient>
<linearGradient id="c369" gradientUnits="userSpaceOnUse" x1="1250" x2="1351" y1="0" y2="0"><stop offset="0" stop-color="#0029ff"/><stop offset="0.1471" stop-color="#1524ff"/><stop offset="0.6765" stop-color="#750eff"/><stop offset="1" stop-color="#ba00ff"/></linearGradient>
<linearGradient id="c370" gradientUnits="userSpaceOnUse" x1="1249" x2="1346" y1="0" y2="0"><stop offset="0" stop-color="#0027ff"/><stop offset="0.0909" stop-color="#0b24ff"/><stop offset="0.6667" stop-color="#6d0dff"/><stop offset="1" stop-color="#af00ff"/></linearGradient>
<linearGradient id="c371" gradientUnits="userSpaceOnUse" x1="1249" x2="1341" y1="0" y2="0"><stop offset="0" stop-color="#0025ff"/><stop offset="0.4194" stop-color="#3d16ff"/><stop offset="0.9677" stop-color="#9e00ff"/><stop offset="1" stop-color="#a500ff"/></linearGradient>
<linearGradient id="c372" gradientUnits="userSpaceOnUse" x1="1248" x2="1336" y1="0" y2="0"><stop offset="0" stop-color="#0023ff"/><stop offset="0.3" stop-color="#2819ff"/><stop offset="0.9" stop-color="#8802ff"/><stop offset="1" stop-color="#9a00ff"/></linearGradient>
<linearGradient id="c373" gradientUnits="userSpaceOnUse" x1="1247" x2="1332" y1="0" y2="0"><stop offset="0" stop-color="#0021ff"/><stop offset="0.1724" stop-color="#141cff"/><stop offset="0.8276" stop-color="#7605ff"/><stop offset="1" stop-color="#9300ff"/></linearGradient>
<linearGradient id="c374" gradientUnits="userSpaceOnUse" x1="1246" x2="1327" y1="0" y2="0"><stop offset="0" stop-color="#001fff"/><stop offset="0.1111" stop-color="#0a1cff"/><stop offset="0.8148" stop-color="#6c05ff"/><stop offset="1" stop-color="#8900ff"/></linearGradient>
<linearGradient id="c375" gradientUnits="userSpaceOnUse" x1="1246" x2="1322" y1="0" y2="0"><stop offset="0" stop-color="#001dff"/><stop offset="0.5385" stop-color="#400eff"/><stop offset="1" stop-color="#8000ff"/></linearGradient>
<linearGradient id="c376" gradientUnits="userSpaceOnUse" x1="1245" x2="1317" y1="0" y2="0"><stop offset="0" stop-color="#001cff"/><stop offset="0.375" stop-color="#2711ff"/><stop offset="1" stop-color="#7700ff"/></linearGradient>
<linearGradient id="c377" gradientUnits="userSpaceOnUse" x1="1244" x2="1312" y1="0" y2="0"><stop offset="0" stop-color="#001aff"/><stop offset="0.2174" stop-color="#1314ff"/><stop offset="1" stop-color="#6e00ff"/></linearGradient>
<linearGradient id="c378" gradientUnits="userSpaceOnUse" x1="1243" x2="1308" y1="0" y2="0"><stop offset="0" stop-color="#0018ff"/><stop offset="0.1364" stop-color="#0a15ff"/><stop offset="1" stop-color="#6700ff"/></linearGradient>
<linearGradient id="c379" gradientUnits="userSpaceOnUse" x1="1243" x2="1303" y1="0" y2="0"><stop offset="0" stop-color="#0016ff"/><stop offset="0.7" stop-color="#4006ff"/><stop offset="1" stop-color="#5f00ff"/></linearGradient>
<linearGradient id="c380" gradientUnits="userSpaceOnUse" x1="1242" x2="1298" y1="0" y2="0"><stop offset="0" stop-color="#0015ff"/><stop offset="0.4737" stop-color="#260bff"/><stop offset="1" stop-color="#5600ff"/></linearGradient>
<linearGradient id="c381" gradientUnits="userSpaceOnUse" x1="1241" x2="1293" y1="0" y2="0"><stop offset="0" stop-color="#0013ff"/><stop offset="0.2778" stop-color="#120eff"/><stop offset="1" stop-color="#4f00ff"/></linearGradient>
<linearGradient id="c382" gradientUnits="userSpaceOnUse" x1="1240" x2="1288" y1="0" y2="0"><stop offset="0" stop-color="#0011ff"/><stop offset="0.1875" stop-color="#0a0eff"/><stop offset="1" stop-color="#4700ff"/></linearGradient>
<linearGradient id="c383" gradientUnits="userSpaceOnUse" x1="1240" x2="1284" y1="0" y2="0"><stop offset="0" stop-color="#000fff"/><stop offset="0.9333" stop-color="#3c00ff"/><stop offset="1" stop-color="#4100ff"/></linearGradient>
<linearGradient id="c384" gradientUnits="userSpaceOnUse" x1="1239" x2="1279" y1="0" y2="0"><stop offset="0" stop-color="#000eff"/><stop offset="0.5714" stop-color="#1f05ff"/><stop offset="1" stop-color="#3a00ff"/></linearGradient>
<linearGradient id="c385" gradientUnits="userSpaceOnUse" x1="1238" x2="1274" y1="0" y2="0"><stop offset="0" stop-color="#000cff"/><stop offset="0.4167" stop-color="#1307ff"/><stop offset="1" stop-color="#3300ff"/></linearGradient>
<linearGradient id="c386" gradientUnits="userSpaceOnUse" x1="1238" x2="1269" y1="0" y2="0"><stop offset="0" stop-color="#000aff"/><stop offset="1" stop-color="#2c00ff"/></linearGradient>
<linearGradient id="c387" gradientUnits="userSpaceOnUse" x1="1237" x2="1264" y1="0" y2="0"><stop offset="0" stop-color="#0009ff"/><stop offset="1" stop-color="#2500ff"/></linearGradient>
<linearGradient id="c388" gradientUnits="userSpaceOnUse" x1="1236" x2="1260" y1="0" y2="0"><stop offset="0" stop-color="#0007ff"/><stop offset="1" stop-color="#2000ff"/></linearGradient>
<linearGradient id="c389" gradientUnits="userSpaceOnUse" x1="1235" x2="1255" y1="0" y2="0"><stop offset="0" stop-color="#0006ff"/><stop offset="0.7143" stop-color="#1101ff"/><stop offset="1" stop-color="#1900ff"/></linearGradient>
<linearGradient id="c390" gradientUnits="userSpaceOnUse" x1="1235" x2="1250" y1="0" y2="0"><stop offset="0" stop-color="#0004ff"/><stop offset="1" stop-color="#1300ff"/></linearGradient>
<linearGradient id="c391" gradientUnits="userSpaceOnUse" x1="1234" x2="1245" y1="0" y2="0"><stop offset="0" stop-color="#0003ff"/><stop offset="1" stop-color="#0d00ff"/></linearGradient>
<linearGradient id="c392" gradientUnits="userSpaceOnUse" x1="1233" x2="1240" y1="0" y2="0"><stop offset="0" stop-color="#0001ff"/><stop offset="1" stop-color="#0700ff"/></linearGradient>
<linearGradient id="g393" x1="0" y1="0" x2="1" y2="0"><stop offset="0" stop-color="#60c8ff"/><stop offset="1" stop-color="#e6c8ff"/></linearGradient>
<linearGradient id="g394" x1="0" y1="0" x2="1" y2="0"><stop offset="0" stop-color="#6a78ff"/><stop offset="1" stop-color="#e070ff"/></linearGradient>
<linearGradient id="insm" x1="0" y1="0" x2="0" y2="1"><stop offset="0" stop-color="#fff" stop-opacity="0"/><stop offset="1" stop-color="#fff" stop-opacity="1"/></linearGradient><mask id="insmask"><rect x="1572.6" y="223" width="237.8" height="200.8" fill="url(#insm)"/></mask>
<linearGradient id="g395" x1="0" y1="0" x2="0" y2="1"><stop offset="0" stop-color="#ff5858"/><stop offset="0.14" stop-color="#ff0c0c"/><stop offset="0.5" stop-color="#fa0000"/><stop offset="0.75" stop-color="#c80606"/><stop offset="1" stop-color="#740000"/></linearGradient>
<linearGradient id="g396" x1="0" y1="0" x2="0" y2="1"><stop offset="0" stop-color="#3030ff"/><stop offset="0.4" stop-color="#0000fa"/><stop offset="1" stop-color="#0000c0"/></linearGradient>
<linearGradient id="g397" x1="0" y1="0" x2="0" y2="1"><stop offset="0" stop-color="#2c2c2c"/><stop offset="0.5" stop-color="#323232"/><stop offset="0.52" stop-color="#101010"/><stop offset="1" stop-color="#161616"/></linearGradient>
<linearGradient id="g398" x1="0" y1="0" x2="0" y2="1"><stop offset="0" stop-color="#404040"/><stop offset="1" stop-color="#454545"/></linearGradient>
<linearGradient id="g399" x1="0" y1="0" x2="0" y2="1"><stop offset="0" stop-color="#868686"/><stop offset="0.5" stop-color="#808080"/><stop offset="1" stop-color="#7e7e7e"/></linearGradient>
<linearGradient id="g400" x1="0" y1="0" x2="0" y2="1"><stop offset="0" stop-color="#2c2c2c"/><stop offset="1" stop-color="#242424"/></linearGradient>
<linearGradient id="g401" x1="0" y1="0" x2="0" y2="1"><stop offset="0" stop-color="#4c4c4c"/><stop offset="0.15" stop-color="#424242"/><stop offset="1" stop-color="#262626"/></linearGradient>
<linearGradient id="g402" x1="0" y1="0" x2="0" y2="1"><stop offset="0" stop-color="#b0b0b0"/><stop offset="0.5" stop-color="#8a8a8a"/><stop offset="1" stop-color="#666"/></linearGradient>
<linearGradient id="g403" x1="0" y1="0" x2="0" y2="1"><stop offset="0" stop-color="#181818"/><stop offset="0.3" stop-color="#1e1e1e"/><stop offset="1" stop-color="#363636"/></linearGradient>
<linearGradient id="g404" x1="0" y1="0" x2="0" y2="1"><stop offset="0" stop-color="#a4a4a4"/><stop offset="0.6" stop-color="#808080"/><stop offset="1" stop-color="#4e4e4e"/></linearGradient>
<linearGradient id="g405" x1="0" y1="0" x2="0" y2="1"><stop offset="0" stop-color="#a4a4a4"/><stop offset="0.6" stop-color="#808080"/><stop offset="1" stop-color="#4e4e4e"/></linearGradient>
<linearGradient id="g406" x1="0" y1="0" x2="0" y2="1"><stop offset="0" stop-color="#a4a4a4"/><stop offset="0.6" stop-color="#808080"/><stop offset="1" stop-color="#4e4e4e"/></linearGradient>
<linearGradient id="g407" x1="0" y1="0" x2="0" y2="1"><stop offset="0" stop-color="#a4a4a4"/><stop offset="0.6" stop-color="#808080"/><stop offset="1" stop-color="#4e4e4e"/></linearGradient>
<linearGradient id="icg" x1="0" y1="0" x2="0" y2="1"><stop offset="0" stop-color="#7a7a7a"/><stop offset="1" stop-color="#a8a8a8"/></linearGradient>
<linearGradient id="g408" x1="0" y1="0" x2="0" y2="1"><stop offset="0" stop-color="#9c9c9c"/><stop offset="0.5" stop-color="#7c7c7c"/><stop offset="1" stop-color="#5a5a5a"/></linearGradient>
<linearGradient id="g409" x1="0" y1="0" x2="0" y2="1"><stop offset="0" stop-color="#3a3a3a"/><stop offset="1" stop-color="#222"/></linearGradient>
<linearGradient id="g410" x1="0" y1="0" x2="0" y2="1"><stop offset="0" stop-color="#a8a8a8"/><stop offset="0.5" stop-color="#888"/><stop offset="1" stop-color="#6a6a6a"/></linearGradient>
</defs>
<rect x="0" y="0" width="1831" height="1200" fill="#333" />
<rect x="0" y="0" width="1831" height="27" fill="#fff" />
<rect x="0" y="27" width="1831" height="56" fill="#222" />
<rect x="0" y="26" width="1831" height="1.5" fill="#0a0a0a" />
<rect x="0" y="0" width="1831" height="1" fill="#1d4f70" />
<rect x="1371" y="0" width="207" height="1" fill="#e8e8e8" />
<rect x="1454" y="0" width="41" height="1" fill="#4aa0f0" />
<rect x="0" y="0" width="1" height="1200" fill="#1a5a7c" />
<rect x="1830" y="0" width="1" height="1200" fill="#1a4f78" />
<rect x="0" y="1199" width="1831" height="1" fill="#1a5a7c" />
<g transform="translate(14.8,13) scale(0.9)"><rect x="-3" y="-3" width="6" height="6" rx="1" transform="translate(0,-3.6) rotate(45)" fill="#ffc400"/><rect x="-3" y="-3" width="6" height="6" rx="1" transform="translate(-3.6,0) rotate(45)" fill="#2ebdff"/><rect x="-3" y="-3" width="6" height="6" rx="1" transform="translate(3.6,0) rotate(45)" fill="#12d812"/><rect x="-3" y="-3" width="6" height="6" rx="1" transform="translate(0,3.6) rotate(45)" fill="#ff1060"/></g>
<text x="26" y="17.2" font-size="11.6" fill="#111" textLength="329.5" lengthAdjust="spacingAndGlyphs" >Calman 2022 Calman Ultimate for Business 21 Days Remaining  - Untitled</text>
<line x1="1729" y1="13.5" x2="1739" y2="13.5" stroke="#000" stroke-width="1" />
<rect x="1766.5" y="8.5" width="9" height="9" fill="none" stroke="#000" stroke-width="1"/>
<path d="M1805.5 8.5 L1814.5 17.5 M1814.5 8.5 L1805.5 17.5" stroke="#000" stroke-width="1.1" fill="none"/>
<path d="M1 27 H158 V49 Q158 52 155 52 H4 Q1 52 1 49 Z" fill="url(#g1)"/>
<g transform="translate(30.4,38.8)"><path d="M0 -9 L9 0 L0 9 L-9 0 Z" fill="none" stroke="#fff" stroke-width="2.3" stroke-dasharray="5.5 1.7 5.53 0"/><g fill="#fff" transform="rotate(45)"><rect x="-4.2" y="-4.2" width="3.5" height="3.5"/><rect x="0.7" y="-4.2" width="3.5" height="3.5"/><rect x="-4.2" y="0.7" width="3.5" height="3.5"/><rect x="0.7" y="0.7" width="3.5" height="3.5"/></g></g>
<text x="43.6" y="45" font-size="22.5" fill="#fff" textLength="73" lengthAdjust="spacingAndGlyphs" stroke="#fff" stroke-width="0.55">calman</text>
<circle cx="143" cy="39" r="7.6" fill="url(#rdd)"/>
<path d="M139 37.8 H147 L143 42.3 Z" fill="#fff"/>
<rect x="164" y="37" width="1666" height="4.5" fill="url(#g2)" />
<rect x="0.5" y="57.5" width="23" height="23" rx="3" fill="url(#g3)" stroke="#aaa" stroke-width="1"/>
<circle cx="12" cy="69" r="7.5" fill="#555" opacity="0.8"/>
<path d="M9.5 64.5 L14.5 68.5 L9.5 72.5 Z" fill="#fff"/>
<path d="M26.5 83 V60 Q26.5 57.5 29 57.5 H102 Q104.5 57.5 104.5 60 V83" fill="#2e2e2e" stroke="#555" stroke-width="1"/>
<line x1="75.5" y1="58" x2="75.5" y2="83" stroke="#555" stroke-width="1" />
<text x="31" y="74" font-size="10.5" fill="#e4e4e4" textLength="40" lengthAdjust="spacingAndGlyphs" >History 1</text>
<circle cx="89" cy="71" r="7.5" fill="#3a3a3a"/>
<path d="M86 71.5 H92 M89 68.5 V74.5" stroke="#777" stroke-width="1" fill="none"/>
<path d="M1409 82 V60 Q1409 57 1412 57 H1528 Q1531 57 1531 60 V82 Z" fill="url(#g4)"/>
<path d="M1409 82 V60 Q1409 57 1411.5 57 H1414 V82 Z" fill="#08e008"/>
<text x="1416.6" y="66.8" font-size="10.2" fill="#f0f0f0" textLength="56" lengthAdjust="spacingAndGlyphs" >X-Rite i1Pro 3</text>
<text x="1416.6" y="78.89999999999999" font-size="10.2" fill="#f0f0f0" textLength="48" lengthAdjust="spacingAndGlyphs" >Direct View</text>
<path d="M1536 82 V60 Q1536 57 1539 57 H1644 Q1647 57 1647 60 V82 Z" fill="url(#g5)"/>
<path d="M1536 82 V60 Q1536 57 1538.5 57 H1541 V82 Z" fill="#08e008"/>
<text x="1543.6" y="66.8" font-size="10.2" fill="#f0f0f0" textLength="55" lengthAdjust="spacingAndGlyphs" >Mobile Forge</text>
<path d="M1652.5 82 V60 Q1652.5 57 1655.5 57 H1772.0 Q1775.0 57 1775.0 60 V82 Z" fill="url(#g6)"/>
<path d="M1652.5 82 V60 Q1652.5 57 1655.0 57 H1657.5 V82 Z" fill="#f4f400"/>
<text x="1660.1" y="66.8" font-size="10.2" fill="#f0f0f0" textLength="90" lengthAdjust="spacingAndGlyphs" >Direct Display Control</text>
<line x1="1500.5" y1="58" x2="1500.5" y2="82" stroke="#444" stroke-width="1.4" />
<circle cx="1483.5" cy="70" r="8.2" fill="url(#ddg)"/>
<path d="M1479.5 69 H1487.5 L1483.5 73.5 Z" fill="#fff"/>
<circle cx="1633.5" cy="70" r="8.2" fill="url(#ddg)"/>
<path d="M1629.5 69 H1637.5 L1633.5 73.5 Z" fill="#fff"/>
<circle cx="1761.5" cy="70" r="8.2" fill="url(#ddg)"/>
<path d="M1757.5 69 H1765.5 L1761.5 73.5 Z" fill="#fff"/>
<circle cx="1517.5" cy="69.5" r="11" fill="#0000f0" stroke="#dcdcf0" stroke-width="1"/>
<text x="1517.5" y="73" font-size="9" fill="#fff" text-anchor="middle" textLength="13" lengthAdjust="spacingAndGlyphs" font-weight="bold" >676</text>
<rect x="1778.5" y="57.5" width="27" height="23" rx="3" fill="url(#g7)" stroke="#999" stroke-width="1"/>
<path d="M1808.5 80.5 V60.5 Q1808.5 57.5 1811.5 57.5 H1830 V80.5 Z" fill="url(#g7)" stroke="#999" stroke-width="1"/>
<circle cx="1792" cy="69" r="7.5" fill="#4a4a4a" opacity="0.8"/>
<circle cx="1792" cy="69" r="3.6" fill="none" stroke="#ddd" stroke-width="1.6"/>
<circle cx="1792" cy="69" r="5.4" fill="none" stroke="#ddd" stroke-width="1.8" stroke-dasharray="2.1 2.14"/>
<circle cx="1822" cy="69" r="7.5" fill="#4a4a4a" opacity="0.8"/>
<path d="M1824 64.5 L1819 68.8 L1824 73 Z" fill="#fff"/>
<text x="27" y="230.5" font-size="45" fill="#f2f2f2" textLength="357" lengthAdjust="spacingAndGlyphs" >Saturation Sweeps</text>
<text x="199.5" y="285.5" font-size="16.5" fill="#dcdcdc" text-anchor="middle" textLength="88" lengthAdjust="spacingAndGlyphs" >DeltaE 2000</text>
<rect x="49" y="291" width="341" height="453" fill="#222" />
<line x1="93.9" y1="292" x2="93.9" y2="744" stroke="#a0a0a0" stroke-width="1.3" />
<line x1="139.2" y1="292" x2="139.2" y2="744" stroke="#a0a0a0" stroke-width="1.3" />
<line x1="184.6" y1="292" x2="184.6" y2="744" stroke="#a0a0a0" stroke-width="1.3" />
<line x1="229.9" y1="292" x2="229.9" y2="744" stroke="#a0a0a0" stroke-width="1.3" />
<line x1="320.5" y1="292" x2="320.5" y2="744" stroke="#a0a0a0" stroke-width="1.3" />
<line x1="365.8" y1="292" x2="365.8" y2="744" stroke="#a0a0a0" stroke-width="1.3" />
<line x1="71.26" y1="291" x2="71.26" y2="745" stroke="#0a8a0a" stroke-width="1.6" />
<line x1="116.58000000000001" y1="291" x2="116.58000000000001" y2="745" stroke="#f5f500" stroke-width="1.6" />
<line x1="275.2" y1="291" x2="275.2" y2="745" stroke="#e81010" stroke-width="1.6" />
<rect x="49.6" y="297.90000000000003" width="19.4" height="8.6" fill="#000"/>
<rect x="49.6" y="298.8" width="17.7" height="6.6" fill="url(#g8)"/>
<rect x="49.6" y="298.8" width="17.7" height="6.6" fill="url(#barshade)"/>
<rect x="49.6" y="306.90000000000003" width="19.4" height="8.6" fill="#000"/>
<rect x="49.6" y="307.8" width="17.7" height="6.6" fill="url(#g9)"/>
<rect x="49.6" y="307.8" width="17.7" height="6.6" fill="url(#barshade)"/>
<rect x="49.6" y="315.90000000000003" width="37.400000000000006" height="8.6" fill="#000"/>
<rect x="49.6" y="316.8" width="35.7" height="6.6" fill="url(#g10)"/>
<rect x="49.6" y="316.8" width="35.7" height="6.6" fill="url(#barshade)"/>
<rect x="49.6" y="324.90000000000003" width="12.1" height="8.6" fill="#000"/>
<rect x="49.6" y="325.8" width="10.4" height="6.6" fill="url(#g11)"/>
<rect x="49.6" y="325.8" width="10.4" height="6.6" fill="url(#barshade)"/>
<rect x="49.6" y="333.90000000000003" width="19.4" height="8.6" fill="#000"/>
<rect x="49.6" y="334.8" width="17.7" height="6.6" fill="url(#g12)"/>
<rect x="49.6" y="334.8" width="17.7" height="6.6" fill="url(#barshade)"/>
<rect x="49.6" y="342.90000000000003" width="20.9" height="8.6" fill="#000"/>
<rect x="49.6" y="343.8" width="19.2" height="6.6" fill="url(#g13)"/>
<rect x="49.6" y="343.8" width="19.2" height="6.6" fill="url(#barshade)"/>
<rect x="49.6" y="373.40000000000003" width="19.4" height="8.6" fill="#000"/>
<rect x="49.6" y="374.3" width="17.7" height="6.6" fill="url(#g14)"/>
<rect x="49.6" y="374.3" width="17.7" height="6.6" fill="url(#barshade)"/>
<rect x="49.6" y="382.40000000000003" width="16.7" height="8.6" fill="#000"/>
<rect x="49.6" y="383.3" width="15.0" height="6.6" fill="url(#g15)"/>
<rect x="49.6" y="383.3" width="15.0" height="6.6" fill="url(#barshade)"/>
<rect x="49.6" y="391.40000000000003" width="25.3" height="8.6" fill="#000"/>
<rect x="49.6" y="392.3" width="23.6" height="6.6" fill="url(#g16)"/>
<rect x="49.6" y="392.3" width="23.6" height="6.6" fill="url(#barshade)"/>
<rect x="49.6" y="400.40000000000003" width="10.7" height="8.6" fill="#000"/>
<rect x="49.6" y="401.3" width="9.0" height="6.6" fill="url(#g17)"/>
<rect x="49.6" y="401.3" width="9.0" height="6.6" fill="url(#barshade)"/>
<rect x="49.6" y="409.40000000000003" width="18.3" height="8.6" fill="#000"/>
<rect x="49.6" y="410.3" width="16.6" height="6.6" fill="url(#g18)"/>
<rect x="49.6" y="410.3" width="16.6" height="6.6" fill="url(#barshade)"/>
<rect x="49.6" y="418.40000000000003" width="20.9" height="8.6" fill="#000"/>
<rect x="49.6" y="419.3" width="19.2" height="6.6" fill="url(#g19)"/>
<rect x="49.6" y="419.3" width="19.2" height="6.6" fill="url(#barshade)"/>
<rect x="49.6" y="448.90000000000003" width="19.4" height="8.6" fill="#000"/>
<rect x="49.6" y="449.8" width="17.7" height="6.6" fill="url(#g20)"/>
<rect x="49.6" y="449.8" width="17.7" height="6.6" fill="url(#barshade)"/>
<rect x="49.6" y="457.90000000000003" width="16.7" height="8.6" fill="#000"/>
<rect x="49.6" y="458.8" width="15.0" height="6.6" fill="url(#g21)"/>
<rect x="49.6" y="458.8" width="15.0" height="6.6" fill="url(#barshade)"/>
<rect x="49.6" y="466.90000000000003" width="20.9" height="8.6" fill="#000"/>
<rect x="49.6" y="467.8" width="19.2" height="6.6" fill="url(#g22)"/>
<rect x="49.6" y="467.8" width="19.2" height="6.6" fill="url(#barshade)"/>
<rect x="49.6" y="475.90000000000003" width="10.5" height="8.6" fill="#000"/>
<rect x="49.6" y="476.8" width="8.8" height="6.6" fill="url(#g23)"/>
<rect x="49.6" y="476.8" width="8.8" height="6.6" fill="url(#barshade)"/>
<rect x="49.6" y="484.90000000000003" width="19.3" height="8.6" fill="#000"/>
<rect x="49.6" y="485.8" width="17.6" height="6.6" fill="url(#g24)"/>
<rect x="49.6" y="485.8" width="17.6" height="6.6" fill="url(#barshade)"/>
<rect x="49.6" y="493.90000000000003" width="19.3" height="8.6" fill="#000"/>
<rect x="49.6" y="494.8" width="17.6" height="6.6" fill="url(#g25)"/>
<rect x="49.6" y="494.8" width="17.6" height="6.6" fill="url(#barshade)"/>
<rect x="49.6" y="524.4" width="20.9" height="8.6" fill="#000"/>
<rect x="49.6" y="525.3" width="19.2" height="6.6" fill="url(#g26)"/>
<rect x="49.6" y="525.3" width="19.2" height="6.6" fill="url(#barshade)"/>
<rect x="49.6" y="533.4" width="13.299999999999999" height="8.6" fill="#000"/>
<rect x="49.6" y="534.3" width="11.6" height="6.6" fill="url(#g27)"/>
<rect x="49.6" y="534.3" width="11.6" height="6.6" fill="url(#barshade)"/>
<rect x="49.6" y="542.4" width="22.2" height="8.6" fill="#000"/>
<rect x="49.6" y="543.3" width="20.5" height="6.6" fill="url(#g28)"/>
<rect x="49.6" y="543.3" width="20.5" height="6.6" fill="url(#barshade)"/>
<rect x="49.6" y="551.4" width="12.1" height="8.6" fill="#000"/>
<rect x="49.6" y="552.3" width="10.4" height="6.6" fill="url(#g29)"/>
<rect x="49.6" y="552.3" width="10.4" height="6.6" fill="url(#barshade)"/>
<rect x="49.6" y="560.4" width="22.099999999999998" height="8.6" fill="#000"/>
<rect x="49.6" y="561.3" width="20.4" height="6.6" fill="url(#g30)"/>
<rect x="49.6" y="561.3" width="20.4" height="6.6" fill="url(#barshade)"/>
<rect x="49.6" y="569.4" width="20.9" height="8.6" fill="#000"/>
<rect x="49.6" y="570.3" width="19.2" height="6.6" fill="url(#g31)"/>
<rect x="49.6" y="570.3" width="19.2" height="6.6" fill="url(#barshade)"/>
<rect x="49.6" y="599.9" width="25.0" height="8.6" fill="#000"/>
<rect x="49.6" y="600.8" width="23.3" height="6.6" fill="url(#g32)"/>
<rect x="49.6" y="600.8" width="23.3" height="6.6" fill="url(#barshade)"/>
<rect x="49.6" y="608.9" width="17.3" height="8.6" fill="#000"/>
<rect x="49.6" y="609.8" width="15.6" height="6.6" fill="url(#g33)"/>
<rect x="49.6" y="609.8" width="15.6" height="6.6" fill="url(#barshade)"/>
<rect x="49.6" y="617.9" width="26.9" height="8.6" fill="#000"/>
<rect x="49.6" y="618.8" width="25.2" height="6.6" fill="url(#g34)"/>
<rect x="49.6" y="618.8" width="25.2" height="6.6" fill="url(#barshade)"/>
<rect x="49.6" y="626.9" width="18.099999999999998" height="8.6" fill="#000"/>
<rect x="49.6" y="627.8" width="16.4" height="6.6" fill="url(#g35)"/>
<rect x="49.6" y="627.8" width="16.4" height="6.6" fill="url(#barshade)"/>
<rect x="49.6" y="635.9" width="25.0" height="8.6" fill="#000"/>
<rect x="49.6" y="636.8" width="23.3" height="6.6" fill="url(#g36)"/>
<rect x="49.6" y="636.8" width="23.3" height="6.6" fill="url(#barshade)"/>
<rect x="49.6" y="644.9" width="29.9" height="8.6" fill="#000"/>
<rect x="49.6" y="645.8" width="28.2" height="6.6" fill="url(#g37)"/>
<rect x="49.6" y="645.8" width="28.2" height="6.6" fill="url(#barshade)"/>
<rect x="49.4" y="729.6" width="47.7" height="7.8" fill="#000"/>
<rect x="49.4" y="730.5" width="46" height="5.8" fill="url(#g38)"/>
<rect x="49.4" y="730.5" width="46" height="5.8" fill="url(#barshade)"/>
<rect x="48" y="290.3" width="342" height="1.7" fill="#a0a0a0" />
<rect x="47.9" y="290.3" width="1.9" height="454.5" fill="#a0a0a0" />
<rect x="388.8" y="291" width="1.6" height="454" fill="#a0a0a0" />
<rect x="42" y="743" width="348" height="1.8" fill="#a0a0a0" />
<rect x="42" y="291.0" width="7" height="1.6" fill="#d0d0d0" />
<rect x="42" y="366.5" width="7" height="1.6" fill="#d0d0d0" />
<rect x="42" y="442.0" width="7" height="1.6" fill="#d0d0d0" />
<rect x="42" y="517.5" width="7" height="1.6" fill="#d0d0d0" />
<rect x="42" y="593.0" width="7" height="1.6" fill="#d0d0d0" />
<rect x="42" y="668.5" width="7" height="1.6" fill="#d0d0d0" />
<rect x="47.8" y="744" width="1.6" height="7" fill="#d8d8d8" />
<text x="48.0" y="768" font-size="16" fill="#dcdcdc" text-anchor="middle" >0</text>
<rect x="93.1" y="744" width="1.6" height="7" fill="#d8d8d8" />
<text x="93.3" y="768" font-size="16" fill="#dcdcdc" text-anchor="middle" >2</text>
<rect x="138.4" y="744" width="1.6" height="7" fill="#d8d8d8" />
<text x="138.6" y="768" font-size="16" fill="#dcdcdc" text-anchor="middle" >4</text>
<rect x="183.8" y="744" width="1.6" height="7" fill="#d8d8d8" />
<text x="184.0" y="768" font-size="16" fill="#dcdcdc" text-anchor="middle" >6</text>
<rect x="229.1" y="744" width="1.6" height="7" fill="#d8d8d8" />
<text x="229.3" y="768" font-size="16" fill="#dcdcdc" text-anchor="middle" >8</text>
<rect x="274.4" y="744" width="1.6" height="7" fill="#d8d8d8" />
<text x="274.6" y="768" font-size="16" fill="#dcdcdc" text-anchor="middle" >10</text>
<rect x="319.7" y="744" width="1.6" height="7" fill="#d8d8d8" />
<text x="319.9" y="768" font-size="16" fill="#dcdcdc" text-anchor="middle" >12</text>
<rect x="365.0" y="744" width="1.6" height="7" fill="#d8d8d8" />
<text x="365.2" y="768" font-size="16" fill="#dcdcdc" text-anchor="middle" >14</text>
<text x="47.5" y="334.6" font-size="15.5" fill="#dcdcdc" text-anchor="end" textLength="40" lengthAdjust="spacingAndGlyphs" >100%</text>
<text x="47.5" y="410.1" font-size="15.5" fill="#dcdcdc" text-anchor="end" textLength="31" lengthAdjust="spacingAndGlyphs" >80%</text>
<text x="47.5" y="485.6" font-size="15.5" fill="#dcdcdc" text-anchor="end" textLength="31" lengthAdjust="spacingAndGlyphs" >60%</text>
<text x="47.5" y="561.0" font-size="15.5" fill="#dcdcdc" text-anchor="end" textLength="31" lengthAdjust="spacingAndGlyphs" >40%</text>
<text x="47.5" y="636.5" font-size="15.5" fill="#dcdcdc" text-anchor="end" textLength="31" lengthAdjust="spacingAndGlyphs" >20%</text>
<text x="47.5" y="712.0" font-size="15.5" fill="#dcdcdc" text-anchor="end" textLength="25.5" lengthAdjust="spacingAndGlyphs" >100</text>
<text x="17" y="858" font-size="33.5" fill="#f2f2f2" textLength="241" lengthAdjust="spacingAndGlyphs" >Current Reading</text>
<text x="17" y="904.6" font-size="28" fill="#f2f2f2" textLength="113" lengthAdjust="spacingAndGlyphs" >x: 0,2775</text>
<text x="17" y="949.4" font-size="28" fill="#f2f2f2" textLength="113" lengthAdjust="spacingAndGlyphs" >y: 0,2753</text>
<text x="17" y="994.2" font-size="28" fill="#f2f2f2" textLength="106" lengthAdjust="spacingAndGlyphs" >fL: 58,32</text>
<text x="17" y="1038.7" font-size="28" fill="#f2f2f2" textLength="175" lengthAdjust="spacingAndGlyphs" >cd/m²: 199,83</text>
<rect x="448.6" y="217.5" width="158.5" height="345.79999999999995" fill="#222" />
<rect x="448.6" y="216.7" width="158.5" height="1.6" fill="#a0a0a0" />
<rect x="442.1" y="216.7" width="6.5" height="1.6" fill="#d0d0d0" />
<text x="441.3" y="224.2" font-size="15.5" fill="#dcdcdc" text-anchor="end" >15</text>
<rect x="448.6" y="275.0" width="158.5" height="1.6" fill="#a0a0a0" />
<rect x="442.1" y="275.0" width="6.5" height="1.6" fill="#d0d0d0" />
<text x="441.3" y="281.9" font-size="15.5" fill="#dcdcdc" text-anchor="end" >10</text>
<rect x="448.6" y="332.0" width="158.5" height="1.6" fill="#a0a0a0" />
<rect x="442.1" y="332.0" width="6.5" height="1.6" fill="#d0d0d0" />
<text x="441.3" y="339.6" font-size="15.5" fill="#dcdcdc" text-anchor="end" >5</text>
<rect x="448.6" y="390.0" width="158.5" height="1.6" fill="#a0a0a0" />
<rect x="442.1" y="390.0" width="6.5" height="1.6" fill="#d0d0d0" />
<text x="441.3" y="396.6" font-size="15.5" fill="#dcdcdc" text-anchor="end" >0</text>
<rect x="448.6" y="448.4" width="158.5" height="1.6" fill="#a0a0a0" />
<rect x="442.1" y="448.4" width="6.5" height="1.6" fill="#d0d0d0" />
<text x="441.3" y="454.8" font-size="15.5" fill="#dcdcdc" text-anchor="end" >-5</text>
<rect x="448.6" y="506.7" width="158.5" height="1.6" fill="#a0a0a0" />
<rect x="442.1" y="506.7" width="6.5" height="1.6" fill="#d0d0d0" />
<text x="441.3" y="513.6" font-size="15.5" fill="#dcdcdc" text-anchor="end" >-10</text>
<rect x="448.6" y="562.5" width="158.5" height="1.6" fill="#a0a0a0" />
<rect x="442.1" y="562.5" width="6.5" height="1.6" fill="#d0d0d0" />
<text x="441.3" y="571.2" font-size="15.5" fill="#dcdcdc" text-anchor="end" >-15</text>
<rect x="447.8" y="216.7" width="1.7" height="353.29999999999995" fill="#a0a0a0" />
<rect x="606.3000000000001" y="216.7" width="1.7" height="353.29999999999995" fill="#a0a0a0" />
<text x="512.35" y="211" font-size="16.5" fill="#dcdcdc" text-anchor="middle" textLength="46" lengthAdjust="spacingAndGlyphs" >DeltaL</text>
<text x="527.85" y="581.5" font-size="15.5" fill="#dcdcdc" text-anchor="middle" textLength="31" lengthAdjust="spacingAndGlyphs" >20%</text>
<rect x="463.6" y="390.2" width="129.0" height="4.4" fill="#000"/>
<rect x="464.6" y="391.4" width="126.5" height="1.6" fill="url(#g39)"/>
<rect x="664.4" y="217.5" width="158.89999999999998" height="345.79999999999995" fill="#222" />
<rect x="664.4" y="216.7" width="158.89999999999998" height="1.6" fill="#a0a0a0" />
<rect x="657.9" y="216.7" width="6.5" height="1.6" fill="#d0d0d0" />
<text x="657.1" y="224.2" font-size="15.5" fill="#dcdcdc" text-anchor="end" >15</text>
<rect x="664.4" y="275.0" width="158.89999999999998" height="1.6" fill="#a0a0a0" />
<rect x="657.9" y="275.0" width="6.5" height="1.6" fill="#d0d0d0" />
<text x="657.1" y="281.9" font-size="15.5" fill="#dcdcdc" text-anchor="end" >10</text>
<rect x="664.4" y="332.0" width="158.89999999999998" height="1.6" fill="#a0a0a0" />
<rect x="657.9" y="332.0" width="6.5" height="1.6" fill="#d0d0d0" />
<text x="657.1" y="339.6" font-size="15.5" fill="#dcdcdc" text-anchor="end" >5</text>
<rect x="664.4" y="390.0" width="158.89999999999998" height="1.6" fill="#a0a0a0" />
<rect x="657.9" y="390.0" width="6.5" height="1.6" fill="#d0d0d0" />
<text x="657.1" y="396.6" font-size="15.5" fill="#dcdcdc" text-anchor="end" >0</text>
<rect x="664.4" y="448.4" width="158.89999999999998" height="1.6" fill="#a0a0a0" />
<rect x="657.9" y="448.4" width="6.5" height="1.6" fill="#d0d0d0" />
<text x="657.1" y="454.8" font-size="15.5" fill="#dcdcdc" text-anchor="end" >-5</text>
<rect x="664.4" y="506.7" width="158.89999999999998" height="1.6" fill="#a0a0a0" />
<rect x="657.9" y="506.7" width="6.5" height="1.6" fill="#d0d0d0" />
<text x="657.1" y="513.6" font-size="15.5" fill="#dcdcdc" text-anchor="end" >-10</text>
<rect x="664.4" y="562.5" width="158.89999999999998" height="1.6" fill="#a0a0a0" />
<rect x="657.9" y="562.5" width="6.5" height="1.6" fill="#d0d0d0" />
<text x="657.1" y="571.2" font-size="15.5" fill="#dcdcdc" text-anchor="end" >-15</text>
<rect x="663.6" y="216.7" width="1.7" height="353.29999999999995" fill="#a0a0a0" />
<rect x="822.5" y="216.7" width="1.7" height="353.29999999999995" fill="#a0a0a0" />
<text x="728.3499999999999" y="211" font-size="16.5" fill="#dcdcdc" text-anchor="middle" textLength="46" lengthAdjust="spacingAndGlyphs" >DeltaC</text>
<text x="743.8499999999999" y="581.5" font-size="15.5" fill="#dcdcdc" text-anchor="middle" textLength="31" lengthAdjust="spacingAndGlyphs" >20%</text>
<rect x="679.4" y="390.2" width="129.39999999999998" height="4.4" fill="#000"/>
<rect x="680.4" y="391.4" width="126.89999999999998" height="1.6" fill="url(#g40)"/>
<rect x="881" y="217.5" width="158.20000000000005" height="345.79999999999995" fill="#222" />
<rect x="881" y="216.7" width="158.20000000000005" height="1.6" fill="#a0a0a0" />
<rect x="874.5" y="216.7" width="6.5" height="1.6" fill="#d0d0d0" />
<text x="873.7" y="224.2" font-size="15.5" fill="#dcdcdc" text-anchor="end" >15</text>
<rect x="881" y="275.0" width="158.20000000000005" height="1.6" fill="#a0a0a0" />
<rect x="874.5" y="275.0" width="6.5" height="1.6" fill="#d0d0d0" />
<text x="873.7" y="281.9" font-size="15.5" fill="#dcdcdc" text-anchor="end" >10</text>
<rect x="881" y="332.0" width="158.20000000000005" height="1.6" fill="#a0a0a0" />
<rect x="874.5" y="332.0" width="6.5" height="1.6" fill="#d0d0d0" />
<text x="873.7" y="339.6" font-size="15.5" fill="#dcdcdc" text-anchor="end" >5</text>
<rect x="881" y="390.0" width="158.20000000000005" height="1.6" fill="#a0a0a0" />
<rect x="874.5" y="390.0" width="6.5" height="1.6" fill="#d0d0d0" />
<text x="873.7" y="396.6" font-size="15.5" fill="#dcdcdc" text-anchor="end" >0</text>
<rect x="881" y="448.4" width="158.20000000000005" height="1.6" fill="#a0a0a0" />
<rect x="874.5" y="448.4" width="6.5" height="1.6" fill="#d0d0d0" />
<text x="873.7" y="454.8" font-size="15.5" fill="#dcdcdc" text-anchor="end" >-5</text>
<rect x="881" y="506.7" width="158.20000000000005" height="1.6" fill="#a0a0a0" />
<rect x="874.5" y="506.7" width="6.5" height="1.6" fill="#d0d0d0" />
<text x="873.7" y="513.6" font-size="15.5" fill="#dcdcdc" text-anchor="end" >-10</text>
<rect x="881" y="562.5" width="158.20000000000005" height="1.6" fill="#a0a0a0" />
<rect x="874.5" y="562.5" width="6.5" height="1.6" fill="#d0d0d0" />
<text x="873.7" y="571.2" font-size="15.5" fill="#dcdcdc" text-anchor="end" >-15</text>
<rect x="880.2" y="216.7" width="1.7" height="353.29999999999995" fill="#a0a0a0" />
<rect x="1038.4" y="216.7" width="1.7" height="353.29999999999995" fill="#a0a0a0" />
<text x="944.6" y="211" font-size="16.5" fill="#dcdcdc" text-anchor="middle" textLength="46" lengthAdjust="spacingAndGlyphs" >DeltaH</text>
<text x="960.1" y="581.5" font-size="15.5" fill="#dcdcdc" text-anchor="middle" textLength="31" lengthAdjust="spacingAndGlyphs" >20%</text>
<rect x="896" y="390.2" width="128.70000000000005" height="14.8" fill="#000"/>
<rect x="897" y="391.4" width="126.20000000000005" height="12" fill="url(#g41)"/>
<rect x="412" y="600" width="649" height="178" fill="#000" />
<rect x="435.0" y="607.5" width="108.5" height="145.8" fill="#f4f4f4" />
<rect x="436.2" y="608.7" width="106.1" height="71.5" fill="#9999c3" />
<rect x="436.2" y="680" width="106.1" height="72.1" fill="#9a9bc4" />
<text x="489.2" y="770" font-size="13" fill="#fff" text-anchor="middle" textLength="25.5" lengthAdjust="spacingAndGlyphs" stroke="#fff" stroke-width="0.25">20%</text>
<rect x="561.9" y="607.5" width="108.5" height="145.8" fill="#f4f4f4" />
<rect x="563.1" y="608.7" width="106.1" height="71.5" fill="#7b7bbf" />
<rect x="563.1" y="680" width="106.1" height="72.1" fill="#7d7bc1" />
<text x="616.1" y="770" font-size="13" fill="#fff" text-anchor="middle" textLength="25.5" lengthAdjust="spacingAndGlyphs" stroke="#fff" stroke-width="0.25">40%</text>
<rect x="688.8" y="607.5" width="108.5" height="145.8" fill="#f4f4f4" />
<rect x="690.0" y="608.7" width="106.1" height="71.5" fill="#5c5fbe" />
<rect x="690.0" y="680" width="106.1" height="72.1" fill="#615fbf" />
<text x="743.0" y="770" font-size="13" fill="#fff" text-anchor="middle" textLength="25.5" lengthAdjust="spacingAndGlyphs" stroke="#fff" stroke-width="0.25">60%</text>
<rect x="815.7" y="607.5" width="108.5" height="145.8" fill="#f4f4f4" />
<rect x="816.9" y="608.7" width="106.1" height="71.5" fill="#3842ba" />
<rect x="816.9" y="680" width="106.1" height="72.1" fill="#443fbd" />
<text x="869.9" y="770" font-size="13" fill="#fff" text-anchor="middle" textLength="25.5" lengthAdjust="spacingAndGlyphs" stroke="#fff" stroke-width="0.25">80%</text>
<rect x="942.6" y="607.5" width="108.5" height="145.8" fill="#f4f4f4" />
<rect x="943.8" y="608.7" width="106.1" height="71.5" fill="#0021bd" />
<rect x="943.8" y="680" width="106.1" height="72.1" fill="#1410b9" />
<text x="996.8" y="770" font-size="13" fill="#fff" text-anchor="middle" textLength="32" lengthAdjust="spacingAndGlyphs" stroke="#fff" stroke-width="0.25">100%</text>
<text transform="translate(426,659) rotate(-90)" font-size="13" fill="#fff" textLength="38" lengthAdjust="spacingAndGlyphs" stroke="#fff" stroke-width="0.25">Actual</text>
<text transform="translate(426,740) rotate(-90)" font-size="13" fill="#fff" textLength="37" lengthAdjust="spacingAndGlyphs" stroke="#fff" stroke-width="0.25">Target</text>
<rect x="1069" y="182" width="760" height="611.5" fill="#9b9bc7" />
<rect x="1076.5" y="189.5" width="745" height="596.5" fill="#333" />
<text x="1449" y="209" font-size="16.5" fill="#dcdcdc" text-anchor="middle" textLength="84" lengthAdjust="spacingAndGlyphs" >CIE 1931 xy</text>
<rect x="1108" y="215" width="710" height="539" fill="#222" />
<g clip-path="url(#cpl)">
<rect x="1159" y="220" width="37" height="3.6" fill="url(#c42)"/>
<rect x="1151" y="223" width="57" height="3.6" fill="url(#c43)"/>
<rect x="1146" y="226" width="71" height="3.6" fill="url(#c44)"/>
<rect x="1142" y="229" width="83" height="3.6" fill="url(#c45)"/>
<rect x="1139" y="232" width="93" height="3.6" fill="url(#c46)"/>
<rect x="1136" y="235" width="103" height="3.6" fill="url(#c47)"/>
<rect x="1134" y="238" width="112" height="3.6" fill="url(#c48)"/>
<rect x="1132" y="241" width="120" height="3.6" fill="url(#c49)"/>
<rect x="1130" y="244" width="129" height="3.6" fill="url(#c50)"/>
<rect x="1128" y="247" width="137" height="3.6" fill="url(#c51)"/>
<rect x="1127" y="250" width="144" height="3.6" fill="url(#c52)"/>
<rect x="1125" y="253" width="151" height="3.6" fill="url(#c53)"/>
<rect x="1124" y="256" width="158" height="3.6" fill="url(#c54)"/>
<rect x="1123" y="259" width="164" height="3.6" fill="url(#c55)"/>
<rect x="1121" y="262" width="171" height="3.6" fill="url(#c56)"/>
<rect x="1120" y="265" width="178" height="3.6" fill="url(#c57)"/>
<rect x="1119" y="268" width="184" height="3.6" fill="url(#c58)"/>
<rect x="1118" y="271" width="190" height="3.6" fill="url(#c59)"/>
<rect x="1118" y="274" width="195" height="3.6" fill="url(#c60)"/>
<rect x="1117" y="277" width="200" height="3.6" fill="url(#c61)"/>
<rect x="1116" y="280" width="206" height="3.6" fill="url(#c62)"/>
<rect x="1115" y="283" width="212" height="3.6" fill="url(#c63)"/>
<rect x="1115" y="286" width="216" height="3.6" fill="url(#c64)"/>
<rect x="1114" y="289" width="222" height="3.6" fill="url(#c65)"/>
<rect x="1114" y="292" width="227" height="3.6" fill="url(#c66)"/>
<rect x="1113" y="295" width="232" height="3.6" fill="url(#c67)"/>
<rect x="1113" y="298" width="237" height="3.6" fill="url(#c68)"/>
<rect x="1112" y="301" width="242" height="3.6" fill="url(#c69)"/>
<rect x="1112" y="304" width="246" height="3.6" fill="url(#c70)"/>
<rect x="1112" y="307" width="251" height="3.6" fill="url(#c71)"/>
<rect x="1111" y="310" width="256" height="3.6" fill="url(#c72)"/>
<rect x="1111" y="313" width="260" height="3.6" fill="url(#c73)"/>
<rect x="1111" y="316" width="264" height="3.6" fill="url(#c74)"/>
<rect x="1110" y="319" width="270" height="3.6" fill="url(#c75)"/>
<rect x="1110" y="322" width="274" height="3.6" fill="url(#c76)"/>
<rect x="1110" y="325" width="278" height="3.6" fill="url(#c77)"/>
<rect x="1110" y="328" width="282" height="3.6" fill="url(#c78)"/>
<rect x="1110" y="331" width="286" height="3.6" fill="url(#c79)"/>
<rect x="1110" y="334" width="291" height="3.6" fill="url(#c80)"/>
<rect x="1110" y="337" width="295" height="3.6" fill="url(#c81)"/>
<rect x="1110" y="340" width="299" height="3.6" fill="url(#c82)"/>
<rect x="1110" y="343" width="303" height="3.6" fill="url(#c83)"/>
<rect x="1110" y="346" width="307" height="3.6" fill="url(#c84)"/>
<rect x="1110" y="349" width="311" height="3.6" fill="url(#c85)"/>
<rect x="1110" y="352" width="315" height="3.6" fill="url(#c86)"/>
<rect x="1110" y="355" width="319" height="3.6" fill="url(#c87)"/>
<rect x="1110" y="358" width="323" height="3.6" fill="url(#c88)"/>
<rect x="1110" y="361" width="327" height="3.6" fill="url(#c89)"/>
<rect x="1110" y="364" width="331" height="3.6" fill="url(#c90)"/>
<rect x="1110" y="367" width="336" height="3.6" fill="url(#c91)"/>
<rect x="1110" y="370" width="340" height="3.6" fill="url(#c92)"/>
<rect x="1110" y="373" width="344" height="3.6" fill="url(#c93)"/>
<rect x="1111" y="376" width="347" height="3.6" fill="url(#c94)"/>
<rect x="1111" y="379" width="351" height="3.6" fill="url(#c95)"/>
<rect x="1111" y="382" width="355" height="3.6" fill="url(#c96)"/>
<rect x="1111" y="385" width="359" height="3.6" fill="url(#c97)"/>
<rect x="1111" y="388" width="363" height="3.6" fill="url(#c98)"/>
<rect x="1112" y="391" width="366" height="3.6" fill="url(#c99)"/>
<rect x="1112" y="394" width="370" height="3.6" fill="url(#c100)"/>
<rect x="1112" y="397" width="374" height="3.6" fill="url(#c101)"/>
<rect x="1112" y="400" width="378" height="3.6" fill="url(#c102)"/>
<rect x="1113" y="403" width="381" height="3.6" fill="url(#c103)"/>
<rect x="1113" y="406" width="385" height="3.6" fill="url(#c104)"/>
<rect x="1113" y="409" width="389" height="3.6" fill="url(#c105)"/>
<rect x="1114" y="412" width="392" height="3.6" fill="url(#c106)"/>
<rect x="1114" y="415" width="396" height="3.6" fill="url(#c107)"/>
<rect x="1114" y="418" width="400" height="3.6" fill="url(#c108)"/>
<rect x="1115" y="421" width="403" height="3.6" fill="url(#c109)"/>
<rect x="1115" y="424" width="407" height="3.6" fill="url(#c110)"/>
<rect x="1116" y="427" width="409" height="3.6" fill="url(#c111)"/>
<rect x="1116" y="430" width="413" height="3.6" fill="url(#c112)"/>
<rect x="1116" y="433" width="417" height="3.6" fill="url(#c113)"/>
<rect x="1117" y="436" width="420" height="3.6" fill="url(#c114)"/>
<rect x="1117" y="439" width="424" height="3.6" fill="url(#c115)"/>
<rect x="1118" y="442" width="427" height="3.6" fill="url(#c116)"/>
<rect x="1118" y="445" width="431" height="3.6" fill="url(#c117)"/>
<rect x="1119" y="448" width="434" height="3.6" fill="url(#c118)"/>
<rect x="1119" y="451" width="438" height="3.6" fill="url(#c119)"/>
<rect x="1120" y="454" width="441" height="3.6" fill="url(#c120)"/>
<rect x="1120" y="457" width="445" height="3.6" fill="url(#c121)"/>
<rect x="1121" y="460" width="448" height="3.6" fill="url(#c122)"/>
<rect x="1121" y="463" width="452" height="3.6" fill="url(#c123)"/>
<rect x="1122" y="466" width="455" height="3.6" fill="url(#c124)"/>
<rect x="1122" y="469" width="459" height="3.6" fill="url(#c125)"/>
<rect x="1123" y="472" width="462" height="3.6" fill="url(#c126)"/>
<rect x="1123" y="475" width="466" height="3.6" fill="url(#c127)"/>
<rect x="1124" y="478" width="469" height="3.6" fill="url(#c128)"/>
<rect x="1125" y="481" width="472" height="3.6" fill="url(#c129)"/>
<rect x="1125" y="484" width="476" height="3.6" fill="url(#c130)"/>
<rect x="1126" y="487" width="479" height="3.6" fill="url(#c131)"/>
<rect x="1126" y="490" width="483" height="3.6" fill="url(#c132)"/>
<rect x="1127" y="493" width="486" height="3.6" fill="url(#c133)"/>
<rect x="1128" y="496" width="489" height="3.6" fill="url(#c134)"/>
<rect x="1128" y="499" width="493" height="3.6" fill="url(#c135)"/>
<rect x="1129" y="502" width="496" height="3.6" fill="url(#c136)"/>
<rect x="1130" y="505" width="499" height="3.6" fill="url(#c137)"/>
<rect x="1130" y="508" width="503" height="3.6" fill="url(#c138)"/>
<rect x="1131" y="511" width="506" height="3.6" fill="url(#c139)"/>
<rect x="1132" y="514" width="509" height="3.6" fill="url(#c140)"/>
<rect x="1132" y="517" width="513" height="3.6" fill="url(#c141)"/>
<rect x="1133" y="520" width="516" height="3.6" fill="url(#c142)"/>
<rect x="1134" y="523" width="519" height="3.6" fill="url(#c143)"/>
<rect x="1134" y="526" width="523" height="3.6" fill="url(#c144)"/>
<rect x="1135" y="529" width="526" height="3.6" fill="url(#c145)"/>
<rect x="1136" y="532" width="529" height="3.6" fill="url(#c146)"/>
<rect x="1137" y="535" width="532" height="3.6" fill="url(#c147)"/>
<rect x="1137" y="538" width="536" height="3.6" fill="url(#c148)"/>
<rect x="1138" y="541" width="539" height="3.6" fill="url(#c149)"/>
<rect x="1139" y="544" width="542" height="3.6" fill="url(#c150)"/>
<rect x="1140" y="547" width="545" height="3.6" fill="url(#c151)"/>
<rect x="1141" y="550" width="547" height="3.6" fill="url(#c152)"/>
<rect x="1141" y="553" width="551" height="3.6" fill="url(#c153)"/>
<rect x="1142" y="556" width="554" height="3.6" fill="url(#c154)"/>
<rect x="1143" y="559" width="557" height="3.6" fill="url(#c155)"/>
<rect x="1144" y="562" width="560" height="3.6" fill="url(#c156)"/>
<rect x="1145" y="565" width="563" height="3.6" fill="url(#c157)"/>
<rect x="1146" y="568" width="566" height="3.6" fill="url(#c158)"/>
<rect x="1146" y="571" width="570" height="3.6" fill="url(#c159)"/>
<rect x="1147" y="574" width="573" height="3.6" fill="url(#c160)"/>
<rect x="1148" y="577" width="576" height="3.6" fill="url(#c161)"/>
<rect x="1149" y="580" width="579" height="3.6" fill="url(#c162)"/>
<rect x="1150" y="583" width="580" height="3.6" fill="url(#c163)"/>
<rect x="1151" y="586" width="575" height="3.6" fill="url(#c164)"/>
<rect x="1152" y="589" width="565" height="3.6" fill="url(#c165)"/>
<rect x="1153" y="592" width="555" height="3.6" fill="url(#c166)"/>
<rect x="1154" y="595" width="546" height="3.6" fill="url(#c167)"/>
<rect x="1155" y="598" width="536" height="3.6" fill="url(#c168)"/>
<rect x="1156" y="601" width="527" height="3.6" fill="url(#c169)"/>
<rect x="1157" y="604" width="517" height="3.6" fill="url(#c170)"/>
<rect x="1158" y="607" width="508" height="3.6" fill="url(#c171)"/>
<rect x="1159" y="610" width="498" height="3.6" fill="url(#c172)"/>
<rect x="1160" y="613" width="489" height="3.6" fill="url(#c173)"/>
<rect x="1161" y="616" width="479" height="3.6" fill="url(#c174)"/>
<rect x="1162" y="619" width="470" height="3.6" fill="url(#c175)"/>
<rect x="1163" y="622" width="460" height="3.6" fill="url(#c176)"/>
<rect x="1164" y="625" width="451" height="3.6" fill="url(#c177)"/>
<rect x="1165" y="628" width="441" height="3.6" fill="url(#c178)"/>
<rect x="1167" y="631" width="431" height="3.6" fill="url(#c179)"/>
<rect x="1168" y="634" width="421" height="3.6" fill="url(#c180)"/>
<rect x="1169" y="637" width="412" height="3.6" fill="url(#c181)"/>
<rect x="1170" y="640" width="402" height="3.6" fill="url(#c182)"/>
<rect x="1172" y="643" width="392" height="3.6" fill="url(#c183)"/>
<rect x="1173" y="646" width="382" height="3.6" fill="url(#c184)"/>
<rect x="1174" y="649" width="372" height="3.6" fill="url(#c185)"/>
<rect x="1176" y="652" width="362" height="3.6" fill="url(#c186)"/>
<rect x="1177" y="655" width="352" height="3.6" fill="url(#c187)"/>
<rect x="1178" y="658" width="343" height="3.6" fill="url(#c188)"/>
<rect x="1180" y="661" width="332" height="3.6" fill="url(#c189)"/>
<rect x="1181" y="664" width="323" height="3.6" fill="url(#c190)"/>
<rect x="1183" y="667" width="312" height="3.6" fill="url(#c191)"/>
<rect x="1184" y="670" width="303" height="3.6" fill="url(#c192)"/>
<rect x="1185" y="673" width="293" height="3.6" fill="url(#c193)"/>
<rect x="1187" y="676" width="283" height="3.6" fill="url(#c194)"/>
<rect x="1188" y="679" width="273" height="3.6" fill="url(#c195)"/>
<rect x="1190" y="682" width="263" height="3.6" fill="url(#c196)"/>
<rect x="1192" y="685" width="252" height="3.6" fill="url(#c197)"/>
<rect x="1193" y="688" width="243" height="3.6" fill="url(#c198)"/>
<rect x="1195" y="691" width="232" height="3.6" fill="url(#c199)"/>
<rect x="1196" y="694" width="223" height="3.6" fill="url(#c200)"/>
<rect x="1198" y="697" width="212" height="3.6" fill="url(#c201)"/>
<rect x="1200" y="700" width="202" height="3.6" fill="url(#c202)"/>
<rect x="1202" y="703" width="191" height="3.6" fill="url(#c203)"/>
<rect x="1204" y="706" width="180" height="3.6" fill="url(#c204)"/>
<rect x="1206" y="709" width="170" height="3.6" fill="url(#c205)"/>
<rect x="1208" y="712" width="159" height="3.6" fill="url(#c206)"/>
<rect x="1210" y="715" width="149" height="3.6" fill="url(#c207)"/>
<rect x="1212" y="718" width="138" height="3.6" fill="url(#c208)"/>
<rect x="1214" y="721" width="128" height="3.6" fill="url(#c209)"/>
<rect x="1217" y="724" width="116" height="3.6" fill="url(#c210)"/>
<rect x="1219" y="727" width="106" height="3.6" fill="url(#c211)"/>
<rect x="1222" y="730" width="94" height="3.6" fill="url(#c212)"/>
<rect x="1226" y="733" width="82" height="3.6" fill="url(#c213)"/>
<rect x="1229" y="736" width="70" height="3.6" fill="url(#c214)"/>
<rect x="1233" y="739" width="58" height="3.6" fill="url(#c215)"/>
<rect x="1237" y="742" width="45" height="3.6" fill="url(#c216)"/>
<rect x="1242" y="745" width="32" height="3.6" fill="url(#c217)"/>
<rect x="1246" y="748" width="19" height="3.6" fill="url(#c218)"/>
<rect x="1251" y="751" width="5" height="3.6" fill="url(#c219)"/>
</g>
<g clip-path="url(#cpt)">
<rect x="1359" y="370" width="7" height="2.6" fill="url(#c220)"/>
<rect x="1359" y="372" width="10" height="2.6" fill="url(#c221)"/>
<rect x="1358" y="374" width="15" height="2.6" fill="url(#c222)"/>
<rect x="1357" y="376" width="19" height="2.6" fill="url(#c223)"/>
<rect x="1356" y="378" width="23" height="2.6" fill="url(#c224)"/>
<rect x="1356" y="380" width="27" height="2.6" fill="url(#c225)"/>
<rect x="1355" y="382" width="31" height="2.6" fill="url(#c226)"/>
<rect x="1354" y="384" width="35" height="2.6" fill="url(#c227)"/>
<rect x="1353" y="386" width="39" height="2.6" fill="url(#c228)"/>
<rect x="1353" y="388" width="43" height="2.6" fill="url(#c229)"/>
<rect x="1352" y="390" width="47" height="2.6" fill="url(#c230)"/>
<rect x="1351" y="392" width="51" height="2.6" fill="url(#c231)"/>
<rect x="1350" y="394" width="56" height="2.6" fill="url(#c232)"/>
<rect x="1350" y="396" width="59" height="2.6" fill="url(#c233)"/>
<rect x="1349" y="398" width="63" height="2.6" fill="url(#c234)"/>
<rect x="1348" y="400" width="68" height="2.6" fill="url(#c235)"/>
<rect x="1348" y="402" width="71" height="2.6" fill="url(#c236)"/>
<rect x="1347" y="404" width="75" height="2.6" fill="url(#c237)"/>
<rect x="1346" y="406" width="80" height="2.6" fill="url(#c238)"/>
<rect x="1345" y="408" width="84" height="2.6" fill="url(#c239)"/>
<rect x="1345" y="410" width="87" height="2.6" fill="url(#c240)"/>
<rect x="1344" y="412" width="92" height="2.6" fill="url(#c241)"/>
<rect x="1343" y="414" width="96" height="2.6" fill="url(#c242)"/>
<rect x="1342" y="416" width="100" height="2.6" fill="url(#c243)"/>
<rect x="1342" y="418" width="104" height="2.6" fill="url(#c244)"/>
<rect x="1341" y="420" width="108" height="2.6" fill="url(#c245)"/>
<rect x="1340" y="422" width="112" height="2.6" fill="url(#c246)"/>
<rect x="1339" y="424" width="117" height="2.6" fill="url(#c247)"/>
<rect x="1339" y="426" width="120" height="2.6" fill="url(#c248)"/>
<rect x="1338" y="428" width="124" height="2.6" fill="url(#c249)"/>
<rect x="1337" y="430" width="129" height="2.6" fill="url(#c250)"/>
<rect x="1337" y="432" width="132" height="2.6" fill="url(#c251)"/>
<rect x="1336" y="434" width="136" height="2.6" fill="url(#c252)"/>
<rect x="1335" y="436" width="141" height="2.6" fill="url(#c253)"/>
<rect x="1334" y="438" width="145" height="2.6" fill="url(#c254)"/>
<rect x="1334" y="440" width="148" height="2.6" fill="url(#c255)"/>
<rect x="1333" y="442" width="153" height="2.6" fill="url(#c256)"/>
<rect x="1332" y="444" width="157" height="2.6" fill="url(#c257)"/>
<rect x="1331" y="446" width="161" height="2.6" fill="url(#c258)"/>
<rect x="1331" y="448" width="165" height="2.6" fill="url(#c259)"/>
<rect x="1330" y="450" width="169" height="2.6" fill="url(#c260)"/>
<rect x="1329" y="452" width="173" height="2.6" fill="url(#c261)"/>
<rect x="1328" y="454" width="177" height="2.6" fill="url(#c262)"/>
<rect x="1328" y="456" width="181" height="2.6" fill="url(#c263)"/>
<rect x="1327" y="458" width="185" height="2.6" fill="url(#c264)"/>
<rect x="1326" y="460" width="189" height="2.6" fill="url(#c265)"/>
<rect x="1326" y="462" width="193" height="2.6" fill="url(#c266)"/>
<rect x="1325" y="464" width="197" height="2.6" fill="url(#c267)"/>
<rect x="1324" y="466" width="201" height="2.6" fill="url(#c268)"/>
<rect x="1323" y="468" width="206" height="2.6" fill="url(#c269)"/>
<rect x="1323" y="470" width="209" height="2.6" fill="url(#c270)"/>
<rect x="1322" y="472" width="213" height="2.6" fill="url(#c271)"/>
<rect x="1321" y="474" width="218" height="2.6" fill="url(#c272)"/>
<rect x="1320" y="476" width="222" height="2.6" fill="url(#c273)"/>
<rect x="1320" y="478" width="225" height="2.6" fill="url(#c274)"/>
<rect x="1319" y="480" width="230" height="2.6" fill="url(#c275)"/>
<rect x="1318" y="482" width="234" height="2.6" fill="url(#c276)"/>
<rect x="1317" y="484" width="238" height="2.6" fill="url(#c277)"/>
<rect x="1317" y="486" width="242" height="2.6" fill="url(#c278)"/>
<rect x="1316" y="488" width="246" height="2.6" fill="url(#c279)"/>
<rect x="1315" y="490" width="250" height="2.6" fill="url(#c280)"/>
<rect x="1315" y="492" width="254" height="2.6" fill="url(#c281)"/>
<rect x="1314" y="494" width="258" height="2.6" fill="url(#c282)"/>
<rect x="1313" y="496" width="262" height="2.6" fill="url(#c283)"/>
<rect x="1312" y="498" width="267" height="2.6" fill="url(#c284)"/>
<rect x="1312" y="500" width="270" height="2.6" fill="url(#c285)"/>
<rect x="1311" y="502" width="274" height="2.6" fill="url(#c286)"/>
<rect x="1310" y="504" width="279" height="2.6" fill="url(#c287)"/>
<rect x="1309" y="506" width="283" height="2.6" fill="url(#c288)"/>
<rect x="1309" y="508" width="286" height="2.6" fill="url(#c289)"/>
<rect x="1308" y="510" width="291" height="2.6" fill="url(#c290)"/>
<rect x="1307" y="512" width="295" height="2.6" fill="url(#c291)"/>
<rect x="1306" y="514" width="299" height="2.6" fill="url(#c292)"/>
<rect x="1306" y="516" width="303" height="2.6" fill="url(#c293)"/>
<rect x="1305" y="518" width="307" height="2.6" fill="url(#c294)"/>
<rect x="1304" y="520" width="311" height="2.6" fill="url(#c295)"/>
<rect x="1304" y="522" width="315" height="2.6" fill="url(#c296)"/>
<rect x="1303" y="524" width="319" height="2.6" fill="url(#c297)"/>
<rect x="1302" y="526" width="323" height="2.6" fill="url(#c298)"/>
<rect x="1301" y="528" width="327" height="2.6" fill="url(#c299)"/>
<rect x="1301" y="530" width="331" height="2.6" fill="url(#c300)"/>
<rect x="1300" y="532" width="335" height="2.6" fill="url(#c301)"/>
<rect x="1299" y="534" width="339" height="2.6" fill="url(#c302)"/>
<rect x="1298" y="536" width="344" height="2.6" fill="url(#c303)"/>
<rect x="1298" y="538" width="347" height="2.6" fill="url(#c304)"/>
<rect x="1297" y="540" width="351" height="2.6" fill="url(#c305)"/>
<rect x="1296" y="542" width="354" height="2.6" fill="url(#c306)"/>
<rect x="1295" y="544" width="353" height="2.6" fill="url(#c307)"/>
<rect x="1295" y="546" width="348" height="2.6" fill="url(#c308)"/>
<rect x="1294" y="548" width="344" height="2.6" fill="url(#c309)"/>
<rect x="1293" y="550" width="340" height="2.6" fill="url(#c310)"/>
<rect x="1293" y="552" width="336" height="2.6" fill="url(#c311)"/>
<rect x="1292" y="554" width="332" height="2.6" fill="url(#c312)"/>
<rect x="1291" y="556" width="328" height="2.6" fill="url(#c313)"/>
<rect x="1290" y="558" width="324" height="2.6" fill="url(#c314)"/>
<rect x="1290" y="560" width="319" height="2.6" fill="url(#c315)"/>
<rect x="1289" y="562" width="316" height="2.6" fill="url(#c316)"/>
<rect x="1288" y="564" width="312" height="2.6" fill="url(#c317)"/>
<rect x="1287" y="566" width="308" height="2.6" fill="url(#c318)"/>
<rect x="1287" y="568" width="303" height="2.6" fill="url(#c319)"/>
<rect x="1286" y="570" width="299" height="2.6" fill="url(#c320)"/>
<rect x="1285" y="572" width="296" height="2.6" fill="url(#c321)"/>
<rect x="1284" y="574" width="292" height="2.6" fill="url(#c322)"/>
<rect x="1284" y="576" width="287" height="2.6" fill="url(#c323)"/>
<rect x="1283" y="578" width="283" height="2.6" fill="url(#c324)"/>
<rect x="1282" y="580" width="279" height="2.6" fill="url(#c325)"/>
<rect x="1282" y="582" width="275" height="2.6" fill="url(#c326)"/>
<rect x="1281" y="584" width="271" height="2.6" fill="url(#c327)"/>
<rect x="1280" y="586" width="267" height="2.6" fill="url(#c328)"/>
<rect x="1279" y="588" width="263" height="2.6" fill="url(#c329)"/>
<rect x="1279" y="590" width="259" height="2.6" fill="url(#c330)"/>
<rect x="1278" y="592" width="255" height="2.6" fill="url(#c331)"/>
<rect x="1277" y="594" width="251" height="2.6" fill="url(#c332)"/>
<rect x="1276" y="596" width="247" height="2.6" fill="url(#c333)"/>
<rect x="1276" y="598" width="242" height="2.6" fill="url(#c334)"/>
<rect x="1275" y="600" width="239" height="2.6" fill="url(#c335)"/>
<rect x="1274" y="602" width="235" height="2.6" fill="url(#c336)"/>
<rect x="1273" y="604" width="231" height="2.6" fill="url(#c337)"/>
<rect x="1273" y="606" width="226" height="2.6" fill="url(#c338)"/>
<rect x="1272" y="608" width="222" height="2.6" fill="url(#c339)"/>
<rect x="1271" y="610" width="219" height="2.6" fill="url(#c340)"/>
<rect x="1271" y="612" width="214" height="2.6" fill="url(#c341)"/>
<rect x="1270" y="614" width="210" height="2.6" fill="url(#c342)"/>
<rect x="1269" y="616" width="206" height="2.6" fill="url(#c343)"/>
<rect x="1268" y="618" width="202" height="2.6" fill="url(#c344)"/>
<rect x="1268" y="620" width="198" height="2.6" fill="url(#c345)"/>
<rect x="1267" y="622" width="194" height="2.6" fill="url(#c346)"/>
<rect x="1266" y="624" width="190" height="2.6" fill="url(#c347)"/>
<rect x="1265" y="626" width="186" height="2.6" fill="url(#c348)"/>
<rect x="1265" y="628" width="181" height="2.6" fill="url(#c349)"/>
<rect x="1264" y="630" width="178" height="2.6" fill="url(#c350)"/>
<rect x="1263" y="632" width="174" height="2.6" fill="url(#c351)"/>
<rect x="1262" y="634" width="170" height="2.6" fill="url(#c352)"/>
<rect x="1262" y="636" width="165" height="2.6" fill="url(#c353)"/>
<rect x="1261" y="638" width="162" height="2.6" fill="url(#c354)"/>
<rect x="1260" y="640" width="158" height="2.6" fill="url(#c355)"/>
<rect x="1260" y="642" width="153" height="2.6" fill="url(#c356)"/>
<rect x="1259" y="644" width="149" height="2.6" fill="url(#c357)"/>
<rect x="1258" y="646" width="145" height="2.6" fill="url(#c358)"/>
<rect x="1257" y="648" width="142" height="2.6" fill="url(#c359)"/>
<rect x="1257" y="650" width="137" height="2.6" fill="url(#c360)"/>
<rect x="1256" y="652" width="133" height="2.6" fill="url(#c361)"/>
<rect x="1255" y="654" width="129" height="2.6" fill="url(#c362)"/>
<rect x="1254" y="656" width="125" height="2.6" fill="url(#c363)"/>
<rect x="1254" y="658" width="121" height="2.6" fill="url(#c364)"/>
<rect x="1253" y="660" width="117" height="2.6" fill="url(#c365)"/>
<rect x="1252" y="662" width="113" height="2.6" fill="url(#c366)"/>
<rect x="1251" y="664" width="109" height="2.6" fill="url(#c367)"/>
<rect x="1251" y="666" width="104" height="2.6" fill="url(#c368)"/>
<rect x="1250" y="668" width="101" height="2.6" fill="url(#c369)"/>
<rect x="1249" y="670" width="97" height="2.6" fill="url(#c370)"/>
<rect x="1249" y="672" width="92" height="2.6" fill="url(#c371)"/>
<rect x="1248" y="674" width="88" height="2.6" fill="url(#c372)"/>
<rect x="1247" y="676" width="85" height="2.6" fill="url(#c373)"/>
<rect x="1246" y="678" width="81" height="2.6" fill="url(#c374)"/>
<rect x="1246" y="680" width="76" height="2.6" fill="url(#c375)"/>
<rect x="1245" y="682" width="72" height="2.6" fill="url(#c376)"/>
<rect x="1244" y="684" width="68" height="2.6" fill="url(#c377)"/>
<rect x="1243" y="686" width="65" height="2.6" fill="url(#c378)"/>
<rect x="1243" y="688" width="60" height="2.6" fill="url(#c379)"/>
<rect x="1242" y="690" width="56" height="2.6" fill="url(#c380)"/>
<rect x="1241" y="692" width="52" height="2.6" fill="url(#c381)"/>
<rect x="1240" y="694" width="48" height="2.6" fill="url(#c382)"/>
<rect x="1240" y="696" width="44" height="2.6" fill="url(#c383)"/>
<rect x="1239" y="698" width="40" height="2.6" fill="url(#c384)"/>
<rect x="1238" y="700" width="36" height="2.6" fill="url(#c385)"/>
<rect x="1238" y="702" width="31" height="2.6" fill="url(#c386)"/>
<rect x="1237" y="704" width="27" height="2.6" fill="url(#c387)"/>
<rect x="1236" y="706" width="24" height="2.6" fill="url(#c388)"/>
<rect x="1235" y="708" width="20" height="2.6" fill="url(#c389)"/>
<rect x="1235" y="710" width="15" height="2.6" fill="url(#c390)"/>
<rect x="1234" y="712" width="11" height="2.6" fill="url(#c391)"/>
<rect x="1233" y="714" width="7" height="2.6" fill="url(#c392)"/>
</g>
<rect x="1571.2" y="221.6" width="240.6" height="203.6" fill="#858585" />
<rect x="1572.6" y="223" width="237.8" height="200.8" fill="url(#g393)" />
<rect x="1572.6" y="223" width="237.8" height="200.8" fill="url(#g394)" mask="url(#insmask)"/>
<rect x="1107.2" y="214.5" width="711.8" height="1.6" fill="#a0a0a0" />
<rect x="1107.2" y="214.5" width="1.7" height="540.5" fill="#a0a0a0" />
<rect x="1817.3" y="214.5" width="1.7" height="540.5" fill="#a0a0a0" />
<rect x="1101.5" y="753.4" width="717.5" height="1.7" fill="#b0b0b0" />
<rect x="1107.1" y="754" width="1.8" height="7" fill="#e0e0e0" />
<text x="1108.0" y="778.5" font-size="16" fill="#dcdcdc" text-anchor="middle" >0</text>
<rect x="1101.5" y="753.3" width="6.5" height="1.8" fill="#e0e0e0" />
<text x="1101" y="761.2" font-size="16" fill="#dcdcdc" text-anchor="end" >0</text>
<rect x="1191.6" y="754" width="1.8" height="7" fill="#e0e0e0" />
<text x="1192.5" y="778.5" font-size="16" fill="#dcdcdc" text-anchor="middle" textLength="22" lengthAdjust="spacingAndGlyphs" >0,1</text>
<rect x="1101.5" y="689.3" width="6.5" height="1.8" fill="#e0e0e0" />
<text x="1101" y="695.9" font-size="16" fill="#dcdcdc" text-anchor="end" textLength="22" lengthAdjust="spacingAndGlyphs" >0,1</text>
<rect x="1276.0" y="754" width="1.8" height="7" fill="#e0e0e0" />
<text x="1276.9" y="778.5" font-size="16" fill="#dcdcdc" text-anchor="middle" textLength="22" lengthAdjust="spacingAndGlyphs" >0,2</text>
<rect x="1101.5" y="625.3" width="6.5" height="1.8" fill="#e0e0e0" />
<text x="1101" y="631.9" font-size="16" fill="#dcdcdc" text-anchor="end" textLength="22" lengthAdjust="spacingAndGlyphs" >0,2</text>
<rect x="1360.5" y="754" width="1.8" height="7" fill="#e0e0e0" />
<text x="1361.4" y="778.5" font-size="16" fill="#dcdcdc" text-anchor="middle" textLength="22" lengthAdjust="spacingAndGlyphs" >0,3</text>
<rect x="1101.5" y="561.3" width="6.5" height="1.8" fill="#e0e0e0" />
<text x="1101" y="567.9" font-size="16" fill="#dcdcdc" text-anchor="end" textLength="22" lengthAdjust="spacingAndGlyphs" >0,3</text>
<rect x="1445.0" y="754" width="1.8" height="7" fill="#e0e0e0" />
<text x="1445.9" y="778.5" font-size="16" fill="#dcdcdc" text-anchor="middle" textLength="22" lengthAdjust="spacingAndGlyphs" >0,4</text>
<rect x="1101.5" y="497.3" width="6.5" height="1.8" fill="#e0e0e0" />
<text x="1101" y="503.9" font-size="16" fill="#dcdcdc" text-anchor="end" textLength="22" lengthAdjust="spacingAndGlyphs" >0,4</text>
<rect x="1529.4" y="754" width="1.8" height="7" fill="#e0e0e0" />
<text x="1530.3" y="778.5" font-size="16" fill="#dcdcdc" text-anchor="middle" textLength="22" lengthAdjust="spacingAndGlyphs" >0,5</text>
<rect x="1101.5" y="433.3" width="6.5" height="1.8" fill="#e0e0e0" />
<text x="1101" y="439.9" font-size="16" fill="#dcdcdc" text-anchor="end" textLength="22" lengthAdjust="spacingAndGlyphs" >0,5</text>
<rect x="1613.9" y="754" width="1.8" height="7" fill="#e0e0e0" />
<text x="1614.8" y="778.5" font-size="16" fill="#dcdcdc" text-anchor="middle" textLength="22" lengthAdjust="spacingAndGlyphs" >0,6</text>
<rect x="1101.5" y="369.3" width="6.5" height="1.8" fill="#e0e0e0" />
<text x="1101" y="375.9" font-size="16" fill="#dcdcdc" text-anchor="end" textLength="22" lengthAdjust="spacingAndGlyphs" >0,6</text>
<rect x="1698.4" y="754" width="1.8" height="7" fill="#e0e0e0" />
<text x="1699.3" y="778.5" font-size="16" fill="#dcdcdc" text-anchor="middle" textLength="22" lengthAdjust="spacingAndGlyphs" >0,7</text>
<rect x="1101.5" y="305.3" width="6.5" height="1.8" fill="#e0e0e0" />
<text x="1101" y="311.9" font-size="16" fill="#dcdcdc" text-anchor="end" textLength="22" lengthAdjust="spacingAndGlyphs" >0,7</text>
<rect x="1782.9" y="754" width="1.8" height="7" fill="#e0e0e0" />
<text x="1783.8" y="778.5" font-size="16" fill="#dcdcdc" text-anchor="middle" textLength="22" lengthAdjust="spacingAndGlyphs" >0,8</text>
<rect x="1101.5" y="241.3" width="6.5" height="1.8" fill="#e0e0e0" />
<text x="1101" y="247.9" font-size="16" fill="#dcdcdc" text-anchor="end" textLength="22" lengthAdjust="spacingAndGlyphs" >0,8</text>
<rect x="1361.6" y="499.6" width="14.8" height="14.8" fill="none" stroke="#fff" stroke-width="1.6"/>
<rect x="1360.3" y="464.9" width="14.8" height="14.8" fill="none" stroke="#fff" stroke-width="1.6"/>
<rect x="1357.6" y="432.6" width="14.8" height="14.8" fill="none" stroke="#fff" stroke-width="1.6"/>
<rect x="1355.9" y="398.3" width="14.8" height="14.8" fill="none" stroke="#fff" stroke-width="1.6"/>
<rect x="1352.6" y="361.6" width="14.8" height="14.8" fill="none" stroke="#fff" stroke-width="1.6"/>
<rect x="1382.3" y="511.6" width="14.8" height="14.8" fill="none" stroke="#fff" stroke-width="1.6"/>
<rect x="1400.3" y="488.3" width="14.8" height="14.8" fill="none" stroke="#fff" stroke-width="1.6"/>
<rect x="1418.6" y="466.6" width="14.8" height="14.8" fill="none" stroke="#fff" stroke-width="1.6"/>
<rect x="1434.9" y="446.3" width="14.8" height="14.8" fill="none" stroke="#fff" stroke-width="1.6"/>
<rect x="1454.3" y="422.3" width="14.8" height="14.8" fill="none" stroke="#fff" stroke-width="1.6"/>
<rect x="1418.6" y="534.3" width="14.8" height="14.8" fill="none" stroke="#fff" stroke-width="1.6"/>
<rect x="1474.9" y="534.3" width="14.8" height="14.8" fill="none" stroke="#fff" stroke-width="1.6"/>
<rect x="1525.6" y="534.3" width="14.8" height="14.8" fill="none" stroke="#fff" stroke-width="1.6"/>
<rect x="1579.6" y="534.3" width="14.8" height="14.8" fill="none" stroke="#fff" stroke-width="1.6"/>
<rect x="1640.3" y="534.3" width="14.8" height="14.8" fill="none" stroke="#fff" stroke-width="1.6"/>
<rect x="1366.3" y="557.6" width="14.8" height="14.8" fill="none" stroke="#fff" stroke-width="1.6"/>
<rect x="1367.6" y="581.6" width="14.8" height="14.8" fill="none" stroke="#fff" stroke-width="1.6"/>
<rect x="1367.9" y="601.6" width="14.8" height="14.8" fill="none" stroke="#fff" stroke-width="1.6"/>
<rect x="1369.3" y="624.3" width="14.8" height="14.8" fill="none" stroke="#fff" stroke-width="1.6"/>
<rect x="1370.6" y="647.6" width="14.8" height="14.8" fill="none" stroke="#fff" stroke-width="1.6"/>
<rect x="1336.3" y="569.6" width="14.8" height="14.8" fill="none" stroke="#fff" stroke-width="1.6"/>
<rect x="1309.6" y="603.9" width="14.8" height="14.8" fill="none" stroke="#fff" stroke-width="1.6"/>
<rect x="1282.9" y="636.9" width="14.8" height="14.8" fill="none" stroke="#fff" stroke-width="1.6"/>
<rect x="1255.6" y="669.9" width="14.8" height="14.8" fill="none" stroke="#fff" stroke-width="1.6"/>
<rect x="1225.9" y="706.9" width="14.8" height="14.8" fill="none" stroke="#fff" stroke-width="1.6"/>
<rect x="1347.9" y="535.3" width="14.8" height="14.8" fill="none" stroke="#fff" stroke-width="1.6"/>
<rect x="1333.6" y="535.3" width="14.8" height="14.8" fill="none" stroke="#fff" stroke-width="1.6"/>
<rect x="1319.3" y="535.3" width="14.8" height="14.8" fill="none" stroke="#fff" stroke-width="1.6"/>
<rect x="1304.9" y="535.3" width="14.8" height="14.8" fill="none" stroke="#fff" stroke-width="1.6"/>
<rect x="1289.9" y="535.3" width="14.8" height="14.8" fill="none" stroke="#fff" stroke-width="1.6"/>
<rect x="1364.7" y="535.7" width="14.6" height="14.6" fill="none" stroke="#000" stroke-width="1.8"/>
<circle cx="1368.0" cy="509.0" r="4.5" fill="#a5bca5" stroke="#0c0c0c" stroke-width="1.5"/>
<circle cx="1366.3" cy="474.7" r="4.5" fill="#8abc8a" stroke="#0c0c0c" stroke-width="1.5"/>
<circle cx="1364.7" cy="441.0" r="4.5" fill="#6cbc6c" stroke="#0c0c0c" stroke-width="1.5"/>
<circle cx="1362.7" cy="408.7" r="4.5" fill="#47bc47" stroke="#0c0c0c" stroke-width="1.5"/>
<circle cx="1362.0" cy="371.7" r="4.5" fill="#18aa18" stroke="#0c0c0c" stroke-width="1.5"/>
<circle cx="1387.0" cy="521.0" r="4.5" fill="#bcbca5" stroke="#0c0c0c" stroke-width="1.5"/>
<circle cx="1405.0" cy="496.7" r="4.5" fill="#bcbc8a" stroke="#0c0c0c" stroke-width="1.5"/>
<circle cx="1424.7" cy="474.7" r="4.5" fill="#bcbc6c" stroke="#0c0c0c" stroke-width="1.5"/>
<circle cx="1440.7" cy="455.0" r="4.5" fill="#bcbc47" stroke="#0c0c0c" stroke-width="1.5"/>
<circle cx="1460.3" cy="429.7" r="4.5" fill="#b0b018" stroke="#0c0c0c" stroke-width="1.5"/>
<circle cx="1421.3" cy="543.0" r="4.5" fill="#bca5a5" stroke="#0c0c0c" stroke-width="1.5"/>
<circle cx="1478.0" cy="543.0" r="4.5" fill="#bc8a8a" stroke="#0c0c0c" stroke-width="1.5"/>
<circle cx="1528.7" cy="541.7" r="4.5" fill="#bc6c6c" stroke="#0c0c0c" stroke-width="1.5"/>
<circle cx="1585.7" cy="541.7" r="4.5" fill="#bc4747" stroke="#0c0c0c" stroke-width="1.5"/>
<circle cx="1645.0" cy="541.7" r="4.5" fill="#c80404" stroke="#0c0c0c" stroke-width="1.5"/>
<circle cx="1370.7" cy="565.7" r="4.5" fill="#bca5bc" stroke="#0c0c0c" stroke-width="1.5"/>
<circle cx="1370.7" cy="588.0" r="4.5" fill="#bc8abc" stroke="#0c0c0c" stroke-width="1.5"/>
<circle cx="1372.3" cy="608.7" r="4.5" fill="#bc6cbc" stroke="#0c0c0c" stroke-width="1.5"/>
<circle cx="1373.7" cy="631.0" r="4.5" fill="#bc47bc" stroke="#0c0c0c" stroke-width="1.5"/>
<circle cx="1373.7" cy="653.7" r="4.5" fill="#be0abe" stroke="#0c0c0c" stroke-width="1.5"/>
<circle cx="1342.7" cy="577.7" r="4.5" fill="#a5a5bc" stroke="#0c0c0c" stroke-width="1.5"/>
<circle cx="1314.0" cy="612.0" r="4.5" fill="#8a8abc" stroke="#0c0c0c" stroke-width="1.5"/>
<circle cx="1288.3" cy="644.7" r="4.5" fill="#6c6cbc" stroke="#0c0c0c" stroke-width="1.5"/>
<circle cx="1262.3" cy="677.3" r="4.5" fill="#4747bc" stroke="#0c0c0c" stroke-width="1.5"/>
<circle cx="1233.3" cy="711.7" r="4.5" fill="#0606c8" stroke="#0c0c0c" stroke-width="1.5"/>
<circle cx="1354.3" cy="543.3" r="4.5" fill="#a5bcbc" stroke="#0c0c0c" stroke-width="1.5"/>
<circle cx="1340.7" cy="543.3" r="4.5" fill="#8abcbc" stroke="#0c0c0c" stroke-width="1.5"/>
<circle cx="1326.0" cy="543.3" r="4.5" fill="#6cbcbc" stroke="#0c0c0c" stroke-width="1.5"/>
<circle cx="1311.0" cy="543.3" r="4.5" fill="#47bcbc" stroke="#0c0c0c" stroke-width="1.5"/>
<circle cx="1297.3" cy="543.3" r="4.5" fill="#28b9b9" stroke="#0c0c0c" stroke-width="1.5"/>
<circle cx="1369.0" cy="541.7" r="4.5" fill="#ffffff" stroke="#0c0c0c" stroke-width="1.5"/>
<rect x="1683.0" y="315.5" width="14" height="14" fill="none" stroke="#fff" stroke-width="1.4"/>
<circle cx="1679.0" cy="321.5" r="4.4" fill="#9a9ac4" stroke="#0c0c0c" stroke-width="1.5"/>
<text x="512.2" y="829.8" font-size="16.5" fill="#dcdcdc" text-anchor="middle" textLength="92" lengthAdjust="spacingAndGlyphs" >RGB Balance</text>
<rect x="379.8" y="836.8" width="286.49999999999994" height="196.70000000000005" fill="#222" />
<rect x="379.8" y="836.0" width="286.49999999999994" height="1.6" fill="#a0a0a0" />
<rect x="373.3" y="836.0" width="6.5" height="1.6" fill="#d0d0d0" />
<text x="372.5" y="843.1" font-size="15.5" fill="#dcdcdc" text-anchor="end" >4</text>
<rect x="379.8" y="885.6" width="286.49999999999994" height="1.6" fill="#a0a0a0" />
<rect x="373.3" y="885.6" width="6.5" height="1.6" fill="#d0d0d0" />
<text x="372.5" y="892.7" font-size="15.5" fill="#dcdcdc" text-anchor="end" >2</text>
<rect x="379.8" y="934.2" width="286.49999999999994" height="1.6" fill="#a0a0a0" />
<rect x="373.3" y="934.2" width="6.5" height="1.6" fill="#d0d0d0" />
<text x="372.5" y="941.3" font-size="15.5" fill="#dcdcdc" text-anchor="end" >0</text>
<rect x="379.8" y="984.0" width="286.49999999999994" height="1.6" fill="#a0a0a0" />
<rect x="373.3" y="984.0" width="6.5" height="1.6" fill="#d0d0d0" />
<text x="372.5" y="991.1" font-size="15.5" fill="#dcdcdc" text-anchor="end" >-2</text>
<rect x="379.8" y="1032.7" width="286.49999999999994" height="1.6" fill="#a0a0a0" />
<rect x="373.3" y="1032.7" width="6.5" height="1.6" fill="#d0d0d0" />
<text x="372.5" y="1039.8" font-size="15.5" fill="#dcdcdc" text-anchor="end" >-4</text>
<rect x="379.0" y="836.0" width="1.7" height="204.20000000000005" fill="#a0a0a0" />
<rect x="665.5" y="836.0" width="1.7" height="204.20000000000005" fill="#a0a0a0" />
<text x="522.6" y="1052.3" font-size="15.5" fill="#dcdcdc" text-anchor="middle" textLength="31" lengthAdjust="spacingAndGlyphs" >20%</text>
<rect x="407.5" y="934.2" width="76.5" height="92.8" fill="#000" />
<rect x="408.8" y="935.4" width="74" height="90.5" fill="url(#g395)" />
<rect x="482.8" y="930.6" width="76.5" height="5.2" fill="#000" />
<rect x="483.6" y="931.6" width="74.6" height="3" fill="#10a010" />
<rect x="558.2" y="934.2" width="77.5" height="13.2" fill="#000" />
<rect x="559.4" y="935.4" width="75" height="10.6" fill="url(#g396)" />
<rect x="690" y="810.3" width="748.2" height="33.700000000000045" fill="url(#g397)" />
<rect x="690" y="810.3" width="21.5" height="33.700000000000045" fill="#000" />
<rect x="690" y="844" width="748.2" height="31" fill="url(#g398)" />
<rect x="690" y="844" width="21.5" height="31" fill="url(#g400)" />
<rect x="690" y="875" width="748.2" height="31" fill="url(#g399)" />
<rect x="690" y="875" width="21.5" height="31" fill="url(#g400)" />
<rect x="690" y="906" width="748.2" height="31.100000000000023" fill="url(#g398)" />
<rect x="690" y="906" width="21.5" height="31.100000000000023" fill="url(#g400)" />
<rect x="690" y="937.1" width="748.2" height="31.5" fill="url(#g399)" />
<rect x="690" y="937.1" width="21.5" height="31.5" fill="url(#g400)" />
<rect x="690" y="968.6" width="748.2" height="31.0" fill="url(#g398)" />
<rect x="690" y="968.6" width="21.5" height="31.0" fill="url(#g400)" />
<rect x="690" y="999.6" width="748.2" height="30.399999999999977" fill="url(#g399)" />
<rect x="690" y="999.6" width="21.5" height="30.399999999999977" fill="url(#g400)" />
<text x="893.6" y="834" font-size="20.5" fill="#f8f8f8" textLength="44.5" lengthAdjust="spacingAndGlyphs" stroke="#f8f8f8" stroke-width="0.35">20%</text>
<text x="1012.2" y="834" font-size="20.5" fill="#f8f8f8" textLength="44.5" lengthAdjust="spacingAndGlyphs" stroke="#f8f8f8" stroke-width="0.35">40%</text>
<text x="1130.8" y="834" font-size="20.5" fill="#f8f8f8" textLength="44.5" lengthAdjust="spacingAndGlyphs" stroke="#f8f8f8" stroke-width="0.35">60%</text>
<text x="1235.9" y="834" font-size="20.5" fill="#f8f8f8" textLength="44.5" lengthAdjust="spacingAndGlyphs" stroke="#f8f8f8" stroke-width="0.35">80%</text>
<text x="1340.6" y="834" font-size="20.5" fill="#f8f8f8" textLength="57" lengthAdjust="spacingAndGlyphs" stroke="#f8f8f8" stroke-width="0.35">100%</text>
<text x="718.7" y="866.6" font-size="20.5" fill="#f0f0f0" textLength="87" lengthAdjust="spacingAndGlyphs" >x: CIE31</text>
<text x="893.6" y="866.6" font-size="20.5" fill="#f0f0f0" textLength="74.5" lengthAdjust="spacingAndGlyphs" >0,2775</text>
<text x="1012.2" y="866.6" font-size="20.5" fill="#f0f0f0" textLength="74.5" lengthAdjust="spacingAndGlyphs" >0,2446</text>
<text x="1130.8" y="866.6" font-size="20.5" fill="#f0f0f0" textLength="74.5" lengthAdjust="spacingAndGlyphs" >0,2142</text>
<text x="1235.9" y="866.6" font-size="20.5" fill="#f0f0f0" textLength="74.5" lengthAdjust="spacingAndGlyphs" >0,1820</text>
<text x="1340.6" y="866.6" font-size="20.5" fill="#f0f0f0" textLength="74.5" lengthAdjust="spacingAndGlyphs" >0,1494</text>
<text x="718.7" y="898.2" font-size="20.5" fill="#f0f0f0" textLength="87" lengthAdjust="spacingAndGlyphs" >y: CIE31</text>
<text x="893.6" y="898.2" font-size="20.5" fill="#f0f0f0" textLength="74.5" lengthAdjust="spacingAndGlyphs" >0,2753</text>
<text x="1012.2" y="898.2" font-size="20.5" fill="#f0f0f0" textLength="74.5" lengthAdjust="spacingAndGlyphs" >0,2210</text>
<text x="1130.8" y="898.2" font-size="20.5" fill="#f0f0f0" textLength="74.5" lengthAdjust="spacingAndGlyphs" >0,1711</text>
<text x="1235.9" y="898.2" font-size="20.5" fill="#f0f0f0" textLength="74.5" lengthAdjust="spacingAndGlyphs" >0,1194</text>
<text x="1340.6" y="898.2" font-size="20.5" fill="#f0f0f0" textLength="74.5" lengthAdjust="spacingAndGlyphs" >0,0651</text>
<text x="718.7" y="929" font-size="20.5" fill="#f0f0f0" textLength="14" lengthAdjust="spacingAndGlyphs" >Y</text>
<text x="893.6" y="929" font-size="20.5" fill="#f0f0f0" textLength="102.5" lengthAdjust="spacingAndGlyphs" >199,8257</text>
<text x="1012.2" y="929" font-size="20.5" fill="#f0f0f0" textLength="102.5" lengthAdjust="spacingAndGlyphs" >129,2478</text>
<text x="1130.8" y="929" font-size="20.5" fill="#f0f0f0" textLength="89" lengthAdjust="spacingAndGlyphs" >84,5808</text>
<text x="1235.9" y="929" font-size="20.5" fill="#f0f0f0" textLength="89" lengthAdjust="spacingAndGlyphs" >51,0447</text>
<text x="1340.6" y="929" font-size="20.5" fill="#f0f0f0" textLength="89" lengthAdjust="spacingAndGlyphs" >24,5193</text>
<text x="718.7" y="960" font-size="20.5" fill="#f0f0f0" textLength="157" lengthAdjust="spacingAndGlyphs" >Target x:CIE31</text>
<text x="893.6" y="960" font-size="20.5" fill="#f0f0f0" textLength="74.5" lengthAdjust="spacingAndGlyphs" >0,2800</text>
<text x="1012.2" y="960" font-size="20.5" fill="#f0f0f0" textLength="74.5" lengthAdjust="spacingAndGlyphs" >0,2478</text>
<text x="1130.8" y="960" font-size="20.5" fill="#f0f0f0" textLength="74.5" lengthAdjust="spacingAndGlyphs" >0,2165</text>
<text x="1235.9" y="960" font-size="20.5" fill="#f0f0f0" textLength="74.5" lengthAdjust="spacingAndGlyphs" >0,1852</text>
<text x="1340.6" y="960" font-size="20.5" fill="#f0f0f0" textLength="74.5" lengthAdjust="spacingAndGlyphs" >0,1500</text>
<text x="718.7" y="991.3" font-size="20.5" fill="#f0f0f0" textLength="157" lengthAdjust="spacingAndGlyphs" >Target y:CIE31</text>
<text x="893.6" y="991.3" font-size="20.5" fill="#f0f0f0" textLength="74.5" lengthAdjust="spacingAndGlyphs" >0,2749</text>
<text x="1012.2" y="991.3" font-size="20.5" fill="#f0f0f0" textLength="74.5" lengthAdjust="spacingAndGlyphs" >0,2217</text>
<text x="1130.8" y="991.3" font-size="20.5" fill="#f0f0f0" textLength="74.5" lengthAdjust="spacingAndGlyphs" >0,1700</text>
<text x="1235.9" y="991.3" font-size="20.5" fill="#f0f0f0" textLength="74.5" lengthAdjust="spacingAndGlyphs" >0,1181</text>
<text x="1340.6" y="991.3" font-size="20.5" fill="#f0f0f0" textLength="74.5" lengthAdjust="spacingAndGlyphs" >0,0600</text>
<text x="718.7" y="1022" font-size="20.5" fill="#f0f0f0" textLength="90" lengthAdjust="spacingAndGlyphs" >Target Y</text>
<text x="893.6" y="1022" font-size="20.5" fill="#f0f0f0" textLength="102.5" lengthAdjust="spacingAndGlyphs" >201,5323</text>
<text x="1012.2" y="1022" font-size="20.5" fill="#f0f0f0" textLength="102.5" lengthAdjust="spacingAndGlyphs" >131,9779</text>
<text x="1130.8" y="1022" font-size="20.5" fill="#f0f0f0" textLength="89" lengthAdjust="spacingAndGlyphs" >85,5712</text>
<text x="1235.9" y="1022" font-size="20.5" fill="#f0f0f0" textLength="89" lengthAdjust="spacingAndGlyphs" >51,5244</text>
<text x="1340.6" y="1022" font-size="20.5" fill="#f0f0f0" textLength="89" lengthAdjust="spacingAndGlyphs" >22,7497</text>
<rect x="1" y="1145.5" width="1829" height="53.5" fill="url(#g401)" />
<rect x="2.5" y="1146.5" width="37" height="51" rx="3" fill="url(#g402)" stroke="#666" stroke-width="1"/>
<circle cx="21" cy="1153.5" r="6" fill="#8a8a8a"/>
<path d="M17.5 1155 L21 1151 L24.5 1155 Z" fill="#333"/>
<rect x="6" y="1168" width="30" height="26" rx="3" fill="#0000ff"/>
<rect x="45.6" y="1146" width="128.5" height="53" rx="4" fill="url(#g403)"/>
<text x="109.80000000000001" y="1194" font-size="9.5" fill="#fff" text-anchor="middle" font-weight="bold" >20%</text>
<rect x="50.1" y="1150.5" width="119.5" height="30.5" rx="2.5" fill="#9a9ac3"/>
<rect x="175.9" y="1146" width="128.5" height="53" rx="4" fill="url(#g404)"/>
<text x="240.10000000000002" y="1194" font-size="9.5" fill="#2e2e2e" text-anchor="middle" font-weight="bold" >40%</text>
<rect x="180.4" y="1150.5" width="119.5" height="30.5" rx="2.5" fill="#7b7bbf"/>
<rect x="306.20000000000005" y="1146" width="128.5" height="53" rx="4" fill="url(#g405)"/>
<text x="370.40000000000003" y="1194" font-size="9.5" fill="#2e2e2e" text-anchor="middle" font-weight="bold" >60%</text>
<rect x="310.70000000000005" y="1150.5" width="119.5" height="30.5" rx="2.5" fill="#5e5ebf"/>
<rect x="436.50000000000006" y="1146" width="128.5" height="53" rx="4" fill="url(#g406)"/>
<text x="500.70000000000005" y="1194" font-size="9.5" fill="#2e2e2e" text-anchor="middle" font-weight="bold" >80%</text>
<rect x="441.00000000000006" y="1150.5" width="119.5" height="30.5" rx="2.5" fill="#4040bd"/>
<rect x="566.8000000000001" y="1146" width="128.5" height="53" rx="4" fill="url(#g407)"/>
<text x="631.0000000000001" y="1194" font-size="9.5" fill="#2e2e2e" text-anchor="middle" font-weight="bold" >100%</text>
<rect x="571.3000000000001" y="1150.5" width="119.5" height="30.5" rx="2.5" fill="#0000c8"/>
<rect x="1553.5" y="1146" width="40.5" height="53" rx="3" fill="url(#g408)"/>
<line x1="1553.5" y1="1160.8" x2="1594" y2="1160.8" stroke="#555" stroke-width="1" />
<circle cx="1574" cy="1153" r="6" fill="#777"/>
<path d="M1570.3 1154.8 L1574 1150.6 L1577.7 1154.8 Z" fill="#2a2a2a"/>
<rect x="1561.5" y="1167.5" width="24.5" height="25.5" rx="3" fill="url(#icg)" stroke="#1a1a1a" stroke-width="1.6"/>
<rect x="1568" y="1174" width="12" height="12.5" fill="#000" />
<rect x="1596.0" y="1146" width="38.90000000000009" height="25.5" fill="url(#g408)"/>
<circle cx="1615.45" cy="1158.5" r="8.5" fill="url(#icg)"/>
<rect x="1611.95" y="1155" width="7" height="7" fill="#2a2a2a" />
<rect x="1635.9" y="1146" width="37.09999999999991" height="25.5" fill="url(#g408)"/>
<circle cx="1654.45" cy="1158.5" r="8.5" fill="url(#icg)"/>
<path d="M1651.45 1154 L1658.95 1158.7 L1651.45 1163.4 Z" fill="#2a2a2a"/>
<rect x="1674.0" y="1146" width="38.5" height="25.5" fill="url(#g408)"/>
<circle cx="1693.25" cy="1158.5" r="8.5" fill="url(#icg)"/>
<path d="M1691.25 1154.5 H1689.25 V1163 H1691.25 M1695.25 1154.5 H1697.25 V1163 H1695.25 M1691.65 1158.7 H1692.85 M1693.65 1158.7 H1694.85" stroke="#2a2a2a" stroke-width="1.5" fill="none"/>
<rect x="1713.5" y="1146" width="37" height="25.5" fill="url(#g408)"/>
<circle cx="1732.0" cy="1158.5" r="8.5" fill="url(#icg)"/>
<path d="M1732.0 1158 C1730.0 1155 1726.0 1155 1726.0 1158 C1726.0 1161 1730.0 1161 1732.0 1158 C1734.0 1155 1738.0 1155 1738.0 1158 C1738.0 1161 1734.0 1161 1732.0 1158 Z" stroke="#2a2a2a" stroke-width="1.4" fill="none"/>
<rect x="1751.5" y="1146" width="37" height="25.5" fill="url(#g408)"/>
<circle cx="1770.0" cy="1158.5" r="8.5" fill="url(#icg)"/>
<path d="M1765.5 1157.5 A4.6 4.6 0 0 1 1773.5 1155.5 M1774.5 1159.5 A4.6 4.6 0 0 1 1766.5 1161.5" stroke="#2a2a2a" stroke-width="1.6" fill="none"/><path d="M1775.5 1153.5 V1157.5 H1771.5 Z M1764.5 1163.5 V1159.5 H1768.5 Z" fill="#2a2a2a"/>
<rect x="1790" y="1146" width="40" height="25.5" fill="url(#g409)" />
<circle cx="1809" cy="1159" r="8.5" fill="#3c3c3c"/>
<rect x="1595.5" y="1173" width="117" height="26" rx="3" fill="url(#g410)"/>
<rect x="1713.5" y="1173" width="116" height="26" rx="3" fill="url(#g410)"/>
<circle cx="1622" cy="1185" r="8.5" fill="url(#icg)"/>
<circle cx="1804.5" cy="1185" r="8.5" fill="url(#icg)"/>
<path d="M1621.5 1181 L1618 1185.2 L1621.5 1189.4 M1626 1181 L1622.5 1185.2 L1626 1189.4" stroke="#2e2e2e" stroke-width="1.8" fill="none"/>
<path d="M1801 1181 L1804.5 1185.2 L1801 1189.4 M1805.5 1181 L1809 1185.2 L1805.5 1189.4" stroke="#2e2e2e" stroke-width="1.8" fill="none"/>
<text x="1645" y="1193" font-size="21" fill="#2a2a2a" textLength="43" lengthAdjust="spacingAndGlyphs" stroke="#2a2a2a" stroke-width="0.5">Back</text>
<text x="1736" y="1193" font-size="21" fill="#2a2a2a" textLength="44" lengthAdjust="spacingAndGlyphs" stroke="#2a2a2a" stroke-width="0.5">Next</text>
<rect x="0" y="0" width="1" height="1200" fill="#1a5a7c" />
<rect x="1830" y="0" width="1" height="1200" fill="#1a4f78" />
<rect x="0" y="1199" width="1831" height="1" fill="#1a5a7c" />
</svg>
</body></html>
